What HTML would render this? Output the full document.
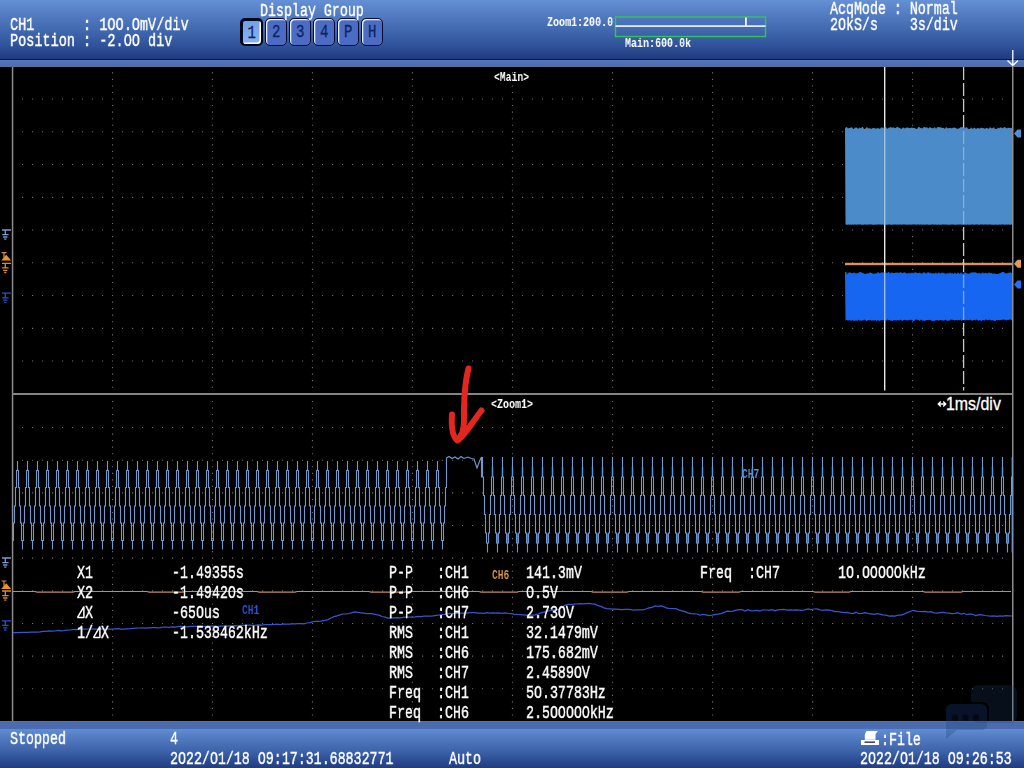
<!DOCTYPE html>
<html><head><meta charset="utf-8"><style>
html,body{margin:0;padding:0;width:1024px;height:768px;overflow:hidden;background:#000;}
.abs{position:absolute;}
#hdr{position:absolute;left:0;top:0;width:1024px;height:59px;background:linear-gradient(#6590d4 0%,#5179c0 28%,#4068ae 52%,#2f529a 78%,#1f3a7c 100%);}
#hline{position:absolute;left:0;top:59px;width:1024px;height:1px;background:#0b1450;}
#hstrip{position:absolute;left:0;top:60px;width:1024px;height:7px;background:linear-gradient(#5577b6 0%,#4a6fb5 65%,#5a6f9c 88%,#606c88 100%);}
#fstrip{position:absolute;left:0;top:721px;width:1024px;height:8px;background:linear-gradient(#6a7490 0px,#4a6bb0 1.2px,#4a6cb0 100%);}
#ftr{position:absolute;left:0;top:729px;width:1024px;height:39px;background:linear-gradient(#628dd2 0%,#5079c0 25%,#3e64aa 55%,#2c4d94 80%,#213c80 100%);}
svg{position:absolute;left:0;top:0;}
.t{position:absolute;white-space:pre;font-family:"Liberation Mono",monospace;transform-origin:0 0;will-change:transform;}
.t.r{-webkit-text-stroke:0.45px currentColor;}
.btn{position:absolute;top:18px;width:22.4px;height:27.5px;box-sizing:border-box;border:1.8px solid #050c30;border-radius:5px;background:#4b6cc2;box-shadow:inset 1.3px 1.3px 0 #e4eeff;}
.btn span{position:absolute;left:0;right:0;top:2px;text-align:center;font-family:"Liberation Mono",monospace;font-size:18px;line-height:22px;color:#0b2468;transform:scaleX(0.78);-webkit-text-stroke:0.3px #0b2468;}
.btn.sel{border:2.2px solid #02061e;border-top-width:3px;border-left-width:3px;background:linear-gradient(#74a0e4,#88b2f2);box-shadow:inset -1.5px -1.5px 0 #ffffff;}
.btn.sel span{top:0.8px;}
#tdiv{position:absolute;left:946px;top:394px;font-family:"Liberation Sans",sans-serif;font-size:17.5px;line-height:20px;color:#fff;white-space:pre;transform:scaleX(0.91);transform-origin:0 0;-webkit-text-stroke:0.3px #fff;}
</style></head><body>
<div id="hdr"></div><div id="hline"></div><div id="hstrip"></div>
<div id="fstrip"></div><div id="ftr"></div>
<svg width="1024" height="768" viewBox="0 0 1024 768">
<path d="M22.0,98.5h1.1v1.1h-1.1zM32.0,98.5h1.1v1.1h-1.1zM42.0,98.5h1.1v1.1h-1.1zM52.0,98.5h1.1v1.1h-1.1zM62.0,98.5h1.1v1.1h-1.1zM72.0,98.5h1.1v1.1h-1.1zM82.0,98.5h1.1v1.1h-1.1zM92.0,98.5h1.1v1.1h-1.1zM102.0,98.5h1.1v1.1h-1.1zM112.0,98.5h1.1v1.1h-1.1zM122.0,98.5h1.1v1.1h-1.1zM132.0,98.5h1.1v1.1h-1.1zM142.0,98.5h1.1v1.1h-1.1zM152.0,98.5h1.1v1.1h-1.1zM162.0,98.5h1.1v1.1h-1.1zM172.0,98.5h1.1v1.1h-1.1zM182.0,98.5h1.1v1.1h-1.1zM192.0,98.5h1.1v1.1h-1.1zM202.0,98.5h1.1v1.1h-1.1zM212.0,98.5h1.1v1.1h-1.1zM222.0,98.5h1.1v1.1h-1.1zM232.0,98.5h1.1v1.1h-1.1zM242.0,98.5h1.1v1.1h-1.1zM252.0,98.5h1.1v1.1h-1.1zM262.0,98.5h1.1v1.1h-1.1zM272.0,98.5h1.1v1.1h-1.1zM282.0,98.5h1.1v1.1h-1.1zM292.0,98.5h1.1v1.1h-1.1zM302.0,98.5h1.1v1.1h-1.1zM312.0,98.5h1.1v1.1h-1.1zM322.0,98.5h1.1v1.1h-1.1zM332.0,98.5h1.1v1.1h-1.1zM342.0,98.5h1.1v1.1h-1.1zM352.0,98.5h1.1v1.1h-1.1zM362.0,98.5h1.1v1.1h-1.1zM372.0,98.5h1.1v1.1h-1.1zM382.0,98.5h1.1v1.1h-1.1zM392.0,98.5h1.1v1.1h-1.1zM402.0,98.5h1.1v1.1h-1.1zM412.0,98.5h1.1v1.1h-1.1zM422.0,98.5h1.1v1.1h-1.1zM432.0,98.5h1.1v1.1h-1.1zM442.0,98.5h1.1v1.1h-1.1zM452.0,98.5h1.1v1.1h-1.1zM462.0,98.5h1.1v1.1h-1.1zM472.0,98.5h1.1v1.1h-1.1zM482.0,98.5h1.1v1.1h-1.1zM492.0,98.5h1.1v1.1h-1.1zM502.0,98.5h1.1v1.1h-1.1zM512.0,98.5h1.1v1.1h-1.1zM522.0,98.5h1.1v1.1h-1.1zM532.0,98.5h1.1v1.1h-1.1zM542.0,98.5h1.1v1.1h-1.1zM552.0,98.5h1.1v1.1h-1.1zM562.0,98.5h1.1v1.1h-1.1zM572.0,98.5h1.1v1.1h-1.1zM582.0,98.5h1.1v1.1h-1.1zM592.0,98.5h1.1v1.1h-1.1zM602.0,98.5h1.1v1.1h-1.1zM612.0,98.5h1.1v1.1h-1.1zM622.0,98.5h1.1v1.1h-1.1zM632.0,98.5h1.1v1.1h-1.1zM642.0,98.5h1.1v1.1h-1.1zM652.0,98.5h1.1v1.1h-1.1zM662.0,98.5h1.1v1.1h-1.1zM672.0,98.5h1.1v1.1h-1.1zM682.0,98.5h1.1v1.1h-1.1zM692.0,98.5h1.1v1.1h-1.1zM702.0,98.5h1.1v1.1h-1.1zM712.0,98.5h1.1v1.1h-1.1zM722.0,98.5h1.1v1.1h-1.1zM732.0,98.5h1.1v1.1h-1.1zM742.0,98.5h1.1v1.1h-1.1zM752.0,98.5h1.1v1.1h-1.1zM762.0,98.5h1.1v1.1h-1.1zM772.0,98.5h1.1v1.1h-1.1zM782.0,98.5h1.1v1.1h-1.1zM792.0,98.5h1.1v1.1h-1.1zM802.0,98.5h1.1v1.1h-1.1zM812.0,98.5h1.1v1.1h-1.1zM822.0,98.5h1.1v1.1h-1.1zM832.0,98.5h1.1v1.1h-1.1zM842.0,98.5h1.1v1.1h-1.1zM852.0,98.5h1.1v1.1h-1.1zM862.0,98.5h1.1v1.1h-1.1zM872.0,98.5h1.1v1.1h-1.1zM882.0,98.5h1.1v1.1h-1.1zM892.0,98.5h1.1v1.1h-1.1zM902.0,98.5h1.1v1.1h-1.1zM912.0,98.5h1.1v1.1h-1.1zM922.0,98.5h1.1v1.1h-1.1zM932.0,98.5h1.1v1.1h-1.1zM942.0,98.5h1.1v1.1h-1.1zM952.0,98.5h1.1v1.1h-1.1zM962.0,98.5h1.1v1.1h-1.1zM972.0,98.5h1.1v1.1h-1.1zM982.0,98.5h1.1v1.1h-1.1zM992.0,98.5h1.1v1.1h-1.1zM1002.0,98.5h1.1v1.1h-1.1zM22.0,131.2h1.1v1.1h-1.1zM32.0,131.2h1.1v1.1h-1.1zM42.0,131.2h1.1v1.1h-1.1zM52.0,131.2h1.1v1.1h-1.1zM62.0,131.2h1.1v1.1h-1.1zM72.0,131.2h1.1v1.1h-1.1zM82.0,131.2h1.1v1.1h-1.1zM92.0,131.2h1.1v1.1h-1.1zM102.0,131.2h1.1v1.1h-1.1zM112.0,131.2h1.1v1.1h-1.1zM122.0,131.2h1.1v1.1h-1.1zM132.0,131.2h1.1v1.1h-1.1zM142.0,131.2h1.1v1.1h-1.1zM152.0,131.2h1.1v1.1h-1.1zM162.0,131.2h1.1v1.1h-1.1zM172.0,131.2h1.1v1.1h-1.1zM182.0,131.2h1.1v1.1h-1.1zM192.0,131.2h1.1v1.1h-1.1zM202.0,131.2h1.1v1.1h-1.1zM212.0,131.2h1.1v1.1h-1.1zM222.0,131.2h1.1v1.1h-1.1zM232.0,131.2h1.1v1.1h-1.1zM242.0,131.2h1.1v1.1h-1.1zM252.0,131.2h1.1v1.1h-1.1zM262.0,131.2h1.1v1.1h-1.1zM272.0,131.2h1.1v1.1h-1.1zM282.0,131.2h1.1v1.1h-1.1zM292.0,131.2h1.1v1.1h-1.1zM302.0,131.2h1.1v1.1h-1.1zM312.0,131.2h1.1v1.1h-1.1zM322.0,131.2h1.1v1.1h-1.1zM332.0,131.2h1.1v1.1h-1.1zM342.0,131.2h1.1v1.1h-1.1zM352.0,131.2h1.1v1.1h-1.1zM362.0,131.2h1.1v1.1h-1.1zM372.0,131.2h1.1v1.1h-1.1zM382.0,131.2h1.1v1.1h-1.1zM392.0,131.2h1.1v1.1h-1.1zM402.0,131.2h1.1v1.1h-1.1zM412.0,131.2h1.1v1.1h-1.1zM422.0,131.2h1.1v1.1h-1.1zM432.0,131.2h1.1v1.1h-1.1zM442.0,131.2h1.1v1.1h-1.1zM452.0,131.2h1.1v1.1h-1.1zM462.0,131.2h1.1v1.1h-1.1zM472.0,131.2h1.1v1.1h-1.1zM482.0,131.2h1.1v1.1h-1.1zM492.0,131.2h1.1v1.1h-1.1zM502.0,131.2h1.1v1.1h-1.1zM512.0,131.2h1.1v1.1h-1.1zM522.0,131.2h1.1v1.1h-1.1zM532.0,131.2h1.1v1.1h-1.1zM542.0,131.2h1.1v1.1h-1.1zM552.0,131.2h1.1v1.1h-1.1zM562.0,131.2h1.1v1.1h-1.1zM572.0,131.2h1.1v1.1h-1.1zM582.0,131.2h1.1v1.1h-1.1zM592.0,131.2h1.1v1.1h-1.1zM602.0,131.2h1.1v1.1h-1.1zM612.0,131.2h1.1v1.1h-1.1zM622.0,131.2h1.1v1.1h-1.1zM632.0,131.2h1.1v1.1h-1.1zM642.0,131.2h1.1v1.1h-1.1zM652.0,131.2h1.1v1.1h-1.1zM662.0,131.2h1.1v1.1h-1.1zM672.0,131.2h1.1v1.1h-1.1zM682.0,131.2h1.1v1.1h-1.1zM692.0,131.2h1.1v1.1h-1.1zM702.0,131.2h1.1v1.1h-1.1zM712.0,131.2h1.1v1.1h-1.1zM722.0,131.2h1.1v1.1h-1.1zM732.0,131.2h1.1v1.1h-1.1zM742.0,131.2h1.1v1.1h-1.1zM752.0,131.2h1.1v1.1h-1.1zM762.0,131.2h1.1v1.1h-1.1zM772.0,131.2h1.1v1.1h-1.1zM782.0,131.2h1.1v1.1h-1.1zM792.0,131.2h1.1v1.1h-1.1zM802.0,131.2h1.1v1.1h-1.1zM812.0,131.2h1.1v1.1h-1.1zM822.0,131.2h1.1v1.1h-1.1zM832.0,131.2h1.1v1.1h-1.1zM842.0,131.2h1.1v1.1h-1.1zM852.0,131.2h1.1v1.1h-1.1zM862.0,131.2h1.1v1.1h-1.1zM872.0,131.2h1.1v1.1h-1.1zM882.0,131.2h1.1v1.1h-1.1zM892.0,131.2h1.1v1.1h-1.1zM902.0,131.2h1.1v1.1h-1.1zM912.0,131.2h1.1v1.1h-1.1zM922.0,131.2h1.1v1.1h-1.1zM932.0,131.2h1.1v1.1h-1.1zM942.0,131.2h1.1v1.1h-1.1zM952.0,131.2h1.1v1.1h-1.1zM962.0,131.2h1.1v1.1h-1.1zM972.0,131.2h1.1v1.1h-1.1zM982.0,131.2h1.1v1.1h-1.1zM992.0,131.2h1.1v1.1h-1.1zM1002.0,131.2h1.1v1.1h-1.1zM22.0,164.0h1.1v1.1h-1.1zM32.0,164.0h1.1v1.1h-1.1zM42.0,164.0h1.1v1.1h-1.1zM52.0,164.0h1.1v1.1h-1.1zM62.0,164.0h1.1v1.1h-1.1zM72.0,164.0h1.1v1.1h-1.1zM82.0,164.0h1.1v1.1h-1.1zM92.0,164.0h1.1v1.1h-1.1zM102.0,164.0h1.1v1.1h-1.1zM112.0,164.0h1.1v1.1h-1.1zM122.0,164.0h1.1v1.1h-1.1zM132.0,164.0h1.1v1.1h-1.1zM142.0,164.0h1.1v1.1h-1.1zM152.0,164.0h1.1v1.1h-1.1zM162.0,164.0h1.1v1.1h-1.1zM172.0,164.0h1.1v1.1h-1.1zM182.0,164.0h1.1v1.1h-1.1zM192.0,164.0h1.1v1.1h-1.1zM202.0,164.0h1.1v1.1h-1.1zM212.0,164.0h1.1v1.1h-1.1zM222.0,164.0h1.1v1.1h-1.1zM232.0,164.0h1.1v1.1h-1.1zM242.0,164.0h1.1v1.1h-1.1zM252.0,164.0h1.1v1.1h-1.1zM262.0,164.0h1.1v1.1h-1.1zM272.0,164.0h1.1v1.1h-1.1zM282.0,164.0h1.1v1.1h-1.1zM292.0,164.0h1.1v1.1h-1.1zM302.0,164.0h1.1v1.1h-1.1zM312.0,164.0h1.1v1.1h-1.1zM322.0,164.0h1.1v1.1h-1.1zM332.0,164.0h1.1v1.1h-1.1zM342.0,164.0h1.1v1.1h-1.1zM352.0,164.0h1.1v1.1h-1.1zM362.0,164.0h1.1v1.1h-1.1zM372.0,164.0h1.1v1.1h-1.1zM382.0,164.0h1.1v1.1h-1.1zM392.0,164.0h1.1v1.1h-1.1zM402.0,164.0h1.1v1.1h-1.1zM412.0,164.0h1.1v1.1h-1.1zM422.0,164.0h1.1v1.1h-1.1zM432.0,164.0h1.1v1.1h-1.1zM442.0,164.0h1.1v1.1h-1.1zM452.0,164.0h1.1v1.1h-1.1zM462.0,164.0h1.1v1.1h-1.1zM472.0,164.0h1.1v1.1h-1.1zM482.0,164.0h1.1v1.1h-1.1zM492.0,164.0h1.1v1.1h-1.1zM502.0,164.0h1.1v1.1h-1.1zM512.0,164.0h1.1v1.1h-1.1zM522.0,164.0h1.1v1.1h-1.1zM532.0,164.0h1.1v1.1h-1.1zM542.0,164.0h1.1v1.1h-1.1zM552.0,164.0h1.1v1.1h-1.1zM562.0,164.0h1.1v1.1h-1.1zM572.0,164.0h1.1v1.1h-1.1zM582.0,164.0h1.1v1.1h-1.1zM592.0,164.0h1.1v1.1h-1.1zM602.0,164.0h1.1v1.1h-1.1zM612.0,164.0h1.1v1.1h-1.1zM622.0,164.0h1.1v1.1h-1.1zM632.0,164.0h1.1v1.1h-1.1zM642.0,164.0h1.1v1.1h-1.1zM652.0,164.0h1.1v1.1h-1.1zM662.0,164.0h1.1v1.1h-1.1zM672.0,164.0h1.1v1.1h-1.1zM682.0,164.0h1.1v1.1h-1.1zM692.0,164.0h1.1v1.1h-1.1zM702.0,164.0h1.1v1.1h-1.1zM712.0,164.0h1.1v1.1h-1.1zM722.0,164.0h1.1v1.1h-1.1zM732.0,164.0h1.1v1.1h-1.1zM742.0,164.0h1.1v1.1h-1.1zM752.0,164.0h1.1v1.1h-1.1zM762.0,164.0h1.1v1.1h-1.1zM772.0,164.0h1.1v1.1h-1.1zM782.0,164.0h1.1v1.1h-1.1zM792.0,164.0h1.1v1.1h-1.1zM802.0,164.0h1.1v1.1h-1.1zM812.0,164.0h1.1v1.1h-1.1zM822.0,164.0h1.1v1.1h-1.1zM832.0,164.0h1.1v1.1h-1.1zM842.0,164.0h1.1v1.1h-1.1zM852.0,164.0h1.1v1.1h-1.1zM862.0,164.0h1.1v1.1h-1.1zM872.0,164.0h1.1v1.1h-1.1zM882.0,164.0h1.1v1.1h-1.1zM892.0,164.0h1.1v1.1h-1.1zM902.0,164.0h1.1v1.1h-1.1zM912.0,164.0h1.1v1.1h-1.1zM922.0,164.0h1.1v1.1h-1.1zM932.0,164.0h1.1v1.1h-1.1zM942.0,164.0h1.1v1.1h-1.1zM952.0,164.0h1.1v1.1h-1.1zM962.0,164.0h1.1v1.1h-1.1zM972.0,164.0h1.1v1.1h-1.1zM982.0,164.0h1.1v1.1h-1.1zM992.0,164.0h1.1v1.1h-1.1zM1002.0,164.0h1.1v1.1h-1.1zM22.0,196.8h1.1v1.1h-1.1zM32.0,196.8h1.1v1.1h-1.1zM42.0,196.8h1.1v1.1h-1.1zM52.0,196.8h1.1v1.1h-1.1zM62.0,196.8h1.1v1.1h-1.1zM72.0,196.8h1.1v1.1h-1.1zM82.0,196.8h1.1v1.1h-1.1zM92.0,196.8h1.1v1.1h-1.1zM102.0,196.8h1.1v1.1h-1.1zM112.0,196.8h1.1v1.1h-1.1zM122.0,196.8h1.1v1.1h-1.1zM132.0,196.8h1.1v1.1h-1.1zM142.0,196.8h1.1v1.1h-1.1zM152.0,196.8h1.1v1.1h-1.1zM162.0,196.8h1.1v1.1h-1.1zM172.0,196.8h1.1v1.1h-1.1zM182.0,196.8h1.1v1.1h-1.1zM192.0,196.8h1.1v1.1h-1.1zM202.0,196.8h1.1v1.1h-1.1zM212.0,196.8h1.1v1.1h-1.1zM222.0,196.8h1.1v1.1h-1.1zM232.0,196.8h1.1v1.1h-1.1zM242.0,196.8h1.1v1.1h-1.1zM252.0,196.8h1.1v1.1h-1.1zM262.0,196.8h1.1v1.1h-1.1zM272.0,196.8h1.1v1.1h-1.1zM282.0,196.8h1.1v1.1h-1.1zM292.0,196.8h1.1v1.1h-1.1zM302.0,196.8h1.1v1.1h-1.1zM312.0,196.8h1.1v1.1h-1.1zM322.0,196.8h1.1v1.1h-1.1zM332.0,196.8h1.1v1.1h-1.1zM342.0,196.8h1.1v1.1h-1.1zM352.0,196.8h1.1v1.1h-1.1zM362.0,196.8h1.1v1.1h-1.1zM372.0,196.8h1.1v1.1h-1.1zM382.0,196.8h1.1v1.1h-1.1zM392.0,196.8h1.1v1.1h-1.1zM402.0,196.8h1.1v1.1h-1.1zM412.0,196.8h1.1v1.1h-1.1zM422.0,196.8h1.1v1.1h-1.1zM432.0,196.8h1.1v1.1h-1.1zM442.0,196.8h1.1v1.1h-1.1zM452.0,196.8h1.1v1.1h-1.1zM462.0,196.8h1.1v1.1h-1.1zM472.0,196.8h1.1v1.1h-1.1zM482.0,196.8h1.1v1.1h-1.1zM492.0,196.8h1.1v1.1h-1.1zM502.0,196.8h1.1v1.1h-1.1zM512.0,196.8h1.1v1.1h-1.1zM522.0,196.8h1.1v1.1h-1.1zM532.0,196.8h1.1v1.1h-1.1zM542.0,196.8h1.1v1.1h-1.1zM552.0,196.8h1.1v1.1h-1.1zM562.0,196.8h1.1v1.1h-1.1zM572.0,196.8h1.1v1.1h-1.1zM582.0,196.8h1.1v1.1h-1.1zM592.0,196.8h1.1v1.1h-1.1zM602.0,196.8h1.1v1.1h-1.1zM612.0,196.8h1.1v1.1h-1.1zM622.0,196.8h1.1v1.1h-1.1zM632.0,196.8h1.1v1.1h-1.1zM642.0,196.8h1.1v1.1h-1.1zM652.0,196.8h1.1v1.1h-1.1zM662.0,196.8h1.1v1.1h-1.1zM672.0,196.8h1.1v1.1h-1.1zM682.0,196.8h1.1v1.1h-1.1zM692.0,196.8h1.1v1.1h-1.1zM702.0,196.8h1.1v1.1h-1.1zM712.0,196.8h1.1v1.1h-1.1zM722.0,196.8h1.1v1.1h-1.1zM732.0,196.8h1.1v1.1h-1.1zM742.0,196.8h1.1v1.1h-1.1zM752.0,196.8h1.1v1.1h-1.1zM762.0,196.8h1.1v1.1h-1.1zM772.0,196.8h1.1v1.1h-1.1zM782.0,196.8h1.1v1.1h-1.1zM792.0,196.8h1.1v1.1h-1.1zM802.0,196.8h1.1v1.1h-1.1zM812.0,196.8h1.1v1.1h-1.1zM822.0,196.8h1.1v1.1h-1.1zM832.0,196.8h1.1v1.1h-1.1zM842.0,196.8h1.1v1.1h-1.1zM852.0,196.8h1.1v1.1h-1.1zM862.0,196.8h1.1v1.1h-1.1zM872.0,196.8h1.1v1.1h-1.1zM882.0,196.8h1.1v1.1h-1.1zM892.0,196.8h1.1v1.1h-1.1zM902.0,196.8h1.1v1.1h-1.1zM912.0,196.8h1.1v1.1h-1.1zM922.0,196.8h1.1v1.1h-1.1zM932.0,196.8h1.1v1.1h-1.1zM942.0,196.8h1.1v1.1h-1.1zM952.0,196.8h1.1v1.1h-1.1zM962.0,196.8h1.1v1.1h-1.1zM972.0,196.8h1.1v1.1h-1.1zM982.0,196.8h1.1v1.1h-1.1zM992.0,196.8h1.1v1.1h-1.1zM1002.0,196.8h1.1v1.1h-1.1zM22.0,229.5h1.1v1.1h-1.1zM32.0,229.5h1.1v1.1h-1.1zM42.0,229.5h1.1v1.1h-1.1zM52.0,229.5h1.1v1.1h-1.1zM62.0,229.5h1.1v1.1h-1.1zM72.0,229.5h1.1v1.1h-1.1zM82.0,229.5h1.1v1.1h-1.1zM92.0,229.5h1.1v1.1h-1.1zM102.0,229.5h1.1v1.1h-1.1zM112.0,229.5h1.1v1.1h-1.1zM122.0,229.5h1.1v1.1h-1.1zM132.0,229.5h1.1v1.1h-1.1zM142.0,229.5h1.1v1.1h-1.1zM152.0,229.5h1.1v1.1h-1.1zM162.0,229.5h1.1v1.1h-1.1zM172.0,229.5h1.1v1.1h-1.1zM182.0,229.5h1.1v1.1h-1.1zM192.0,229.5h1.1v1.1h-1.1zM202.0,229.5h1.1v1.1h-1.1zM212.0,229.5h1.1v1.1h-1.1zM222.0,229.5h1.1v1.1h-1.1zM232.0,229.5h1.1v1.1h-1.1zM242.0,229.5h1.1v1.1h-1.1zM252.0,229.5h1.1v1.1h-1.1zM262.0,229.5h1.1v1.1h-1.1zM272.0,229.5h1.1v1.1h-1.1zM282.0,229.5h1.1v1.1h-1.1zM292.0,229.5h1.1v1.1h-1.1zM302.0,229.5h1.1v1.1h-1.1zM312.0,229.5h1.1v1.1h-1.1zM322.0,229.5h1.1v1.1h-1.1zM332.0,229.5h1.1v1.1h-1.1zM342.0,229.5h1.1v1.1h-1.1zM352.0,229.5h1.1v1.1h-1.1zM362.0,229.5h1.1v1.1h-1.1zM372.0,229.5h1.1v1.1h-1.1zM382.0,229.5h1.1v1.1h-1.1zM392.0,229.5h1.1v1.1h-1.1zM402.0,229.5h1.1v1.1h-1.1zM412.0,229.5h1.1v1.1h-1.1zM422.0,229.5h1.1v1.1h-1.1zM432.0,229.5h1.1v1.1h-1.1zM442.0,229.5h1.1v1.1h-1.1zM452.0,229.5h1.1v1.1h-1.1zM462.0,229.5h1.1v1.1h-1.1zM472.0,229.5h1.1v1.1h-1.1zM482.0,229.5h1.1v1.1h-1.1zM492.0,229.5h1.1v1.1h-1.1zM502.0,229.5h1.1v1.1h-1.1zM512.0,229.5h1.1v1.1h-1.1zM522.0,229.5h1.1v1.1h-1.1zM532.0,229.5h1.1v1.1h-1.1zM542.0,229.5h1.1v1.1h-1.1zM552.0,229.5h1.1v1.1h-1.1zM562.0,229.5h1.1v1.1h-1.1zM572.0,229.5h1.1v1.1h-1.1zM582.0,229.5h1.1v1.1h-1.1zM592.0,229.5h1.1v1.1h-1.1zM602.0,229.5h1.1v1.1h-1.1zM612.0,229.5h1.1v1.1h-1.1zM622.0,229.5h1.1v1.1h-1.1zM632.0,229.5h1.1v1.1h-1.1zM642.0,229.5h1.1v1.1h-1.1zM652.0,229.5h1.1v1.1h-1.1zM662.0,229.5h1.1v1.1h-1.1zM672.0,229.5h1.1v1.1h-1.1zM682.0,229.5h1.1v1.1h-1.1zM692.0,229.5h1.1v1.1h-1.1zM702.0,229.5h1.1v1.1h-1.1zM712.0,229.5h1.1v1.1h-1.1zM722.0,229.5h1.1v1.1h-1.1zM732.0,229.5h1.1v1.1h-1.1zM742.0,229.5h1.1v1.1h-1.1zM752.0,229.5h1.1v1.1h-1.1zM762.0,229.5h1.1v1.1h-1.1zM772.0,229.5h1.1v1.1h-1.1zM782.0,229.5h1.1v1.1h-1.1zM792.0,229.5h1.1v1.1h-1.1zM802.0,229.5h1.1v1.1h-1.1zM812.0,229.5h1.1v1.1h-1.1zM822.0,229.5h1.1v1.1h-1.1zM832.0,229.5h1.1v1.1h-1.1zM842.0,229.5h1.1v1.1h-1.1zM852.0,229.5h1.1v1.1h-1.1zM862.0,229.5h1.1v1.1h-1.1zM872.0,229.5h1.1v1.1h-1.1zM882.0,229.5h1.1v1.1h-1.1zM892.0,229.5h1.1v1.1h-1.1zM902.0,229.5h1.1v1.1h-1.1zM912.0,229.5h1.1v1.1h-1.1zM922.0,229.5h1.1v1.1h-1.1zM932.0,229.5h1.1v1.1h-1.1zM942.0,229.5h1.1v1.1h-1.1zM952.0,229.5h1.1v1.1h-1.1zM962.0,229.5h1.1v1.1h-1.1zM972.0,229.5h1.1v1.1h-1.1zM982.0,229.5h1.1v1.1h-1.1zM992.0,229.5h1.1v1.1h-1.1zM1002.0,229.5h1.1v1.1h-1.1zM22.0,262.2h1.1v1.1h-1.1zM32.0,262.2h1.1v1.1h-1.1zM42.0,262.2h1.1v1.1h-1.1zM52.0,262.2h1.1v1.1h-1.1zM62.0,262.2h1.1v1.1h-1.1zM72.0,262.2h1.1v1.1h-1.1zM82.0,262.2h1.1v1.1h-1.1zM92.0,262.2h1.1v1.1h-1.1zM102.0,262.2h1.1v1.1h-1.1zM112.0,262.2h1.1v1.1h-1.1zM122.0,262.2h1.1v1.1h-1.1zM132.0,262.2h1.1v1.1h-1.1zM142.0,262.2h1.1v1.1h-1.1zM152.0,262.2h1.1v1.1h-1.1zM162.0,262.2h1.1v1.1h-1.1zM172.0,262.2h1.1v1.1h-1.1zM182.0,262.2h1.1v1.1h-1.1zM192.0,262.2h1.1v1.1h-1.1zM202.0,262.2h1.1v1.1h-1.1zM212.0,262.2h1.1v1.1h-1.1zM222.0,262.2h1.1v1.1h-1.1zM232.0,262.2h1.1v1.1h-1.1zM242.0,262.2h1.1v1.1h-1.1zM252.0,262.2h1.1v1.1h-1.1zM262.0,262.2h1.1v1.1h-1.1zM272.0,262.2h1.1v1.1h-1.1zM282.0,262.2h1.1v1.1h-1.1zM292.0,262.2h1.1v1.1h-1.1zM302.0,262.2h1.1v1.1h-1.1zM312.0,262.2h1.1v1.1h-1.1zM322.0,262.2h1.1v1.1h-1.1zM332.0,262.2h1.1v1.1h-1.1zM342.0,262.2h1.1v1.1h-1.1zM352.0,262.2h1.1v1.1h-1.1zM362.0,262.2h1.1v1.1h-1.1zM372.0,262.2h1.1v1.1h-1.1zM382.0,262.2h1.1v1.1h-1.1zM392.0,262.2h1.1v1.1h-1.1zM402.0,262.2h1.1v1.1h-1.1zM412.0,262.2h1.1v1.1h-1.1zM422.0,262.2h1.1v1.1h-1.1zM432.0,262.2h1.1v1.1h-1.1zM442.0,262.2h1.1v1.1h-1.1zM452.0,262.2h1.1v1.1h-1.1zM462.0,262.2h1.1v1.1h-1.1zM472.0,262.2h1.1v1.1h-1.1zM482.0,262.2h1.1v1.1h-1.1zM492.0,262.2h1.1v1.1h-1.1zM502.0,262.2h1.1v1.1h-1.1zM512.0,262.2h1.1v1.1h-1.1zM522.0,262.2h1.1v1.1h-1.1zM532.0,262.2h1.1v1.1h-1.1zM542.0,262.2h1.1v1.1h-1.1zM552.0,262.2h1.1v1.1h-1.1zM562.0,262.2h1.1v1.1h-1.1zM572.0,262.2h1.1v1.1h-1.1zM582.0,262.2h1.1v1.1h-1.1zM592.0,262.2h1.1v1.1h-1.1zM602.0,262.2h1.1v1.1h-1.1zM612.0,262.2h1.1v1.1h-1.1zM622.0,262.2h1.1v1.1h-1.1zM632.0,262.2h1.1v1.1h-1.1zM642.0,262.2h1.1v1.1h-1.1zM652.0,262.2h1.1v1.1h-1.1zM662.0,262.2h1.1v1.1h-1.1zM672.0,262.2h1.1v1.1h-1.1zM682.0,262.2h1.1v1.1h-1.1zM692.0,262.2h1.1v1.1h-1.1zM702.0,262.2h1.1v1.1h-1.1zM712.0,262.2h1.1v1.1h-1.1zM722.0,262.2h1.1v1.1h-1.1zM732.0,262.2h1.1v1.1h-1.1zM742.0,262.2h1.1v1.1h-1.1zM752.0,262.2h1.1v1.1h-1.1zM762.0,262.2h1.1v1.1h-1.1zM772.0,262.2h1.1v1.1h-1.1zM782.0,262.2h1.1v1.1h-1.1zM792.0,262.2h1.1v1.1h-1.1zM802.0,262.2h1.1v1.1h-1.1zM812.0,262.2h1.1v1.1h-1.1zM822.0,262.2h1.1v1.1h-1.1zM832.0,262.2h1.1v1.1h-1.1zM842.0,262.2h1.1v1.1h-1.1zM852.0,262.2h1.1v1.1h-1.1zM862.0,262.2h1.1v1.1h-1.1zM872.0,262.2h1.1v1.1h-1.1zM882.0,262.2h1.1v1.1h-1.1zM892.0,262.2h1.1v1.1h-1.1zM902.0,262.2h1.1v1.1h-1.1zM912.0,262.2h1.1v1.1h-1.1zM922.0,262.2h1.1v1.1h-1.1zM932.0,262.2h1.1v1.1h-1.1zM942.0,262.2h1.1v1.1h-1.1zM952.0,262.2h1.1v1.1h-1.1zM962.0,262.2h1.1v1.1h-1.1zM972.0,262.2h1.1v1.1h-1.1zM982.0,262.2h1.1v1.1h-1.1zM992.0,262.2h1.1v1.1h-1.1zM1002.0,262.2h1.1v1.1h-1.1zM22.0,295.0h1.1v1.1h-1.1zM32.0,295.0h1.1v1.1h-1.1zM42.0,295.0h1.1v1.1h-1.1zM52.0,295.0h1.1v1.1h-1.1zM62.0,295.0h1.1v1.1h-1.1zM72.0,295.0h1.1v1.1h-1.1zM82.0,295.0h1.1v1.1h-1.1zM92.0,295.0h1.1v1.1h-1.1zM102.0,295.0h1.1v1.1h-1.1zM112.0,295.0h1.1v1.1h-1.1zM122.0,295.0h1.1v1.1h-1.1zM132.0,295.0h1.1v1.1h-1.1zM142.0,295.0h1.1v1.1h-1.1zM152.0,295.0h1.1v1.1h-1.1zM162.0,295.0h1.1v1.1h-1.1zM172.0,295.0h1.1v1.1h-1.1zM182.0,295.0h1.1v1.1h-1.1zM192.0,295.0h1.1v1.1h-1.1zM202.0,295.0h1.1v1.1h-1.1zM212.0,295.0h1.1v1.1h-1.1zM222.0,295.0h1.1v1.1h-1.1zM232.0,295.0h1.1v1.1h-1.1zM242.0,295.0h1.1v1.1h-1.1zM252.0,295.0h1.1v1.1h-1.1zM262.0,295.0h1.1v1.1h-1.1zM272.0,295.0h1.1v1.1h-1.1zM282.0,295.0h1.1v1.1h-1.1zM292.0,295.0h1.1v1.1h-1.1zM302.0,295.0h1.1v1.1h-1.1zM312.0,295.0h1.1v1.1h-1.1zM322.0,295.0h1.1v1.1h-1.1zM332.0,295.0h1.1v1.1h-1.1zM342.0,295.0h1.1v1.1h-1.1zM352.0,295.0h1.1v1.1h-1.1zM362.0,295.0h1.1v1.1h-1.1zM372.0,295.0h1.1v1.1h-1.1zM382.0,295.0h1.1v1.1h-1.1zM392.0,295.0h1.1v1.1h-1.1zM402.0,295.0h1.1v1.1h-1.1zM412.0,295.0h1.1v1.1h-1.1zM422.0,295.0h1.1v1.1h-1.1zM432.0,295.0h1.1v1.1h-1.1zM442.0,295.0h1.1v1.1h-1.1zM452.0,295.0h1.1v1.1h-1.1zM462.0,295.0h1.1v1.1h-1.1zM472.0,295.0h1.1v1.1h-1.1zM482.0,295.0h1.1v1.1h-1.1zM492.0,295.0h1.1v1.1h-1.1zM502.0,295.0h1.1v1.1h-1.1zM512.0,295.0h1.1v1.1h-1.1zM522.0,295.0h1.1v1.1h-1.1zM532.0,295.0h1.1v1.1h-1.1zM542.0,295.0h1.1v1.1h-1.1zM552.0,295.0h1.1v1.1h-1.1zM562.0,295.0h1.1v1.1h-1.1zM572.0,295.0h1.1v1.1h-1.1zM582.0,295.0h1.1v1.1h-1.1zM592.0,295.0h1.1v1.1h-1.1zM602.0,295.0h1.1v1.1h-1.1zM612.0,295.0h1.1v1.1h-1.1zM622.0,295.0h1.1v1.1h-1.1zM632.0,295.0h1.1v1.1h-1.1zM642.0,295.0h1.1v1.1h-1.1zM652.0,295.0h1.1v1.1h-1.1zM662.0,295.0h1.1v1.1h-1.1zM672.0,295.0h1.1v1.1h-1.1zM682.0,295.0h1.1v1.1h-1.1zM692.0,295.0h1.1v1.1h-1.1zM702.0,295.0h1.1v1.1h-1.1zM712.0,295.0h1.1v1.1h-1.1zM722.0,295.0h1.1v1.1h-1.1zM732.0,295.0h1.1v1.1h-1.1zM742.0,295.0h1.1v1.1h-1.1zM752.0,295.0h1.1v1.1h-1.1zM762.0,295.0h1.1v1.1h-1.1zM772.0,295.0h1.1v1.1h-1.1zM782.0,295.0h1.1v1.1h-1.1zM792.0,295.0h1.1v1.1h-1.1zM802.0,295.0h1.1v1.1h-1.1zM812.0,295.0h1.1v1.1h-1.1zM822.0,295.0h1.1v1.1h-1.1zM832.0,295.0h1.1v1.1h-1.1zM842.0,295.0h1.1v1.1h-1.1zM852.0,295.0h1.1v1.1h-1.1zM862.0,295.0h1.1v1.1h-1.1zM872.0,295.0h1.1v1.1h-1.1zM882.0,295.0h1.1v1.1h-1.1zM892.0,295.0h1.1v1.1h-1.1zM902.0,295.0h1.1v1.1h-1.1zM912.0,295.0h1.1v1.1h-1.1zM922.0,295.0h1.1v1.1h-1.1zM932.0,295.0h1.1v1.1h-1.1zM942.0,295.0h1.1v1.1h-1.1zM952.0,295.0h1.1v1.1h-1.1zM962.0,295.0h1.1v1.1h-1.1zM972.0,295.0h1.1v1.1h-1.1zM982.0,295.0h1.1v1.1h-1.1zM992.0,295.0h1.1v1.1h-1.1zM1002.0,295.0h1.1v1.1h-1.1zM22.0,327.8h1.1v1.1h-1.1zM32.0,327.8h1.1v1.1h-1.1zM42.0,327.8h1.1v1.1h-1.1zM52.0,327.8h1.1v1.1h-1.1zM62.0,327.8h1.1v1.1h-1.1zM72.0,327.8h1.1v1.1h-1.1zM82.0,327.8h1.1v1.1h-1.1zM92.0,327.8h1.1v1.1h-1.1zM102.0,327.8h1.1v1.1h-1.1zM112.0,327.8h1.1v1.1h-1.1zM122.0,327.8h1.1v1.1h-1.1zM132.0,327.8h1.1v1.1h-1.1zM142.0,327.8h1.1v1.1h-1.1zM152.0,327.8h1.1v1.1h-1.1zM162.0,327.8h1.1v1.1h-1.1zM172.0,327.8h1.1v1.1h-1.1zM182.0,327.8h1.1v1.1h-1.1zM192.0,327.8h1.1v1.1h-1.1zM202.0,327.8h1.1v1.1h-1.1zM212.0,327.8h1.1v1.1h-1.1zM222.0,327.8h1.1v1.1h-1.1zM232.0,327.8h1.1v1.1h-1.1zM242.0,327.8h1.1v1.1h-1.1zM252.0,327.8h1.1v1.1h-1.1zM262.0,327.8h1.1v1.1h-1.1zM272.0,327.8h1.1v1.1h-1.1zM282.0,327.8h1.1v1.1h-1.1zM292.0,327.8h1.1v1.1h-1.1zM302.0,327.8h1.1v1.1h-1.1zM312.0,327.8h1.1v1.1h-1.1zM322.0,327.8h1.1v1.1h-1.1zM332.0,327.8h1.1v1.1h-1.1zM342.0,327.8h1.1v1.1h-1.1zM352.0,327.8h1.1v1.1h-1.1zM362.0,327.8h1.1v1.1h-1.1zM372.0,327.8h1.1v1.1h-1.1zM382.0,327.8h1.1v1.1h-1.1zM392.0,327.8h1.1v1.1h-1.1zM402.0,327.8h1.1v1.1h-1.1zM412.0,327.8h1.1v1.1h-1.1zM422.0,327.8h1.1v1.1h-1.1zM432.0,327.8h1.1v1.1h-1.1zM442.0,327.8h1.1v1.1h-1.1zM452.0,327.8h1.1v1.1h-1.1zM462.0,327.8h1.1v1.1h-1.1zM472.0,327.8h1.1v1.1h-1.1zM482.0,327.8h1.1v1.1h-1.1zM492.0,327.8h1.1v1.1h-1.1zM502.0,327.8h1.1v1.1h-1.1zM512.0,327.8h1.1v1.1h-1.1zM522.0,327.8h1.1v1.1h-1.1zM532.0,327.8h1.1v1.1h-1.1zM542.0,327.8h1.1v1.1h-1.1zM552.0,327.8h1.1v1.1h-1.1zM562.0,327.8h1.1v1.1h-1.1zM572.0,327.8h1.1v1.1h-1.1zM582.0,327.8h1.1v1.1h-1.1zM592.0,327.8h1.1v1.1h-1.1zM602.0,327.8h1.1v1.1h-1.1zM612.0,327.8h1.1v1.1h-1.1zM622.0,327.8h1.1v1.1h-1.1zM632.0,327.8h1.1v1.1h-1.1zM642.0,327.8h1.1v1.1h-1.1zM652.0,327.8h1.1v1.1h-1.1zM662.0,327.8h1.1v1.1h-1.1zM672.0,327.8h1.1v1.1h-1.1zM682.0,327.8h1.1v1.1h-1.1zM692.0,327.8h1.1v1.1h-1.1zM702.0,327.8h1.1v1.1h-1.1zM712.0,327.8h1.1v1.1h-1.1zM722.0,327.8h1.1v1.1h-1.1zM732.0,327.8h1.1v1.1h-1.1zM742.0,327.8h1.1v1.1h-1.1zM752.0,327.8h1.1v1.1h-1.1zM762.0,327.8h1.1v1.1h-1.1zM772.0,327.8h1.1v1.1h-1.1zM782.0,327.8h1.1v1.1h-1.1zM792.0,327.8h1.1v1.1h-1.1zM802.0,327.8h1.1v1.1h-1.1zM812.0,327.8h1.1v1.1h-1.1zM822.0,327.8h1.1v1.1h-1.1zM832.0,327.8h1.1v1.1h-1.1zM842.0,327.8h1.1v1.1h-1.1zM852.0,327.8h1.1v1.1h-1.1zM862.0,327.8h1.1v1.1h-1.1zM872.0,327.8h1.1v1.1h-1.1zM882.0,327.8h1.1v1.1h-1.1zM892.0,327.8h1.1v1.1h-1.1zM902.0,327.8h1.1v1.1h-1.1zM912.0,327.8h1.1v1.1h-1.1zM922.0,327.8h1.1v1.1h-1.1zM932.0,327.8h1.1v1.1h-1.1zM942.0,327.8h1.1v1.1h-1.1zM952.0,327.8h1.1v1.1h-1.1zM962.0,327.8h1.1v1.1h-1.1zM972.0,327.8h1.1v1.1h-1.1zM982.0,327.8h1.1v1.1h-1.1zM992.0,327.8h1.1v1.1h-1.1zM1002.0,327.8h1.1v1.1h-1.1zM22.0,360.5h1.1v1.1h-1.1zM32.0,360.5h1.1v1.1h-1.1zM42.0,360.5h1.1v1.1h-1.1zM52.0,360.5h1.1v1.1h-1.1zM62.0,360.5h1.1v1.1h-1.1zM72.0,360.5h1.1v1.1h-1.1zM82.0,360.5h1.1v1.1h-1.1zM92.0,360.5h1.1v1.1h-1.1zM102.0,360.5h1.1v1.1h-1.1zM112.0,360.5h1.1v1.1h-1.1zM122.0,360.5h1.1v1.1h-1.1zM132.0,360.5h1.1v1.1h-1.1zM142.0,360.5h1.1v1.1h-1.1zM152.0,360.5h1.1v1.1h-1.1zM162.0,360.5h1.1v1.1h-1.1zM172.0,360.5h1.1v1.1h-1.1zM182.0,360.5h1.1v1.1h-1.1zM192.0,360.5h1.1v1.1h-1.1zM202.0,360.5h1.1v1.1h-1.1zM212.0,360.5h1.1v1.1h-1.1zM222.0,360.5h1.1v1.1h-1.1zM232.0,360.5h1.1v1.1h-1.1zM242.0,360.5h1.1v1.1h-1.1zM252.0,360.5h1.1v1.1h-1.1zM262.0,360.5h1.1v1.1h-1.1zM272.0,360.5h1.1v1.1h-1.1zM282.0,360.5h1.1v1.1h-1.1zM292.0,360.5h1.1v1.1h-1.1zM302.0,360.5h1.1v1.1h-1.1zM312.0,360.5h1.1v1.1h-1.1zM322.0,360.5h1.1v1.1h-1.1zM332.0,360.5h1.1v1.1h-1.1zM342.0,360.5h1.1v1.1h-1.1zM352.0,360.5h1.1v1.1h-1.1zM362.0,360.5h1.1v1.1h-1.1zM372.0,360.5h1.1v1.1h-1.1zM382.0,360.5h1.1v1.1h-1.1zM392.0,360.5h1.1v1.1h-1.1zM402.0,360.5h1.1v1.1h-1.1zM412.0,360.5h1.1v1.1h-1.1zM422.0,360.5h1.1v1.1h-1.1zM432.0,360.5h1.1v1.1h-1.1zM442.0,360.5h1.1v1.1h-1.1zM452.0,360.5h1.1v1.1h-1.1zM462.0,360.5h1.1v1.1h-1.1zM472.0,360.5h1.1v1.1h-1.1zM482.0,360.5h1.1v1.1h-1.1zM492.0,360.5h1.1v1.1h-1.1zM502.0,360.5h1.1v1.1h-1.1zM512.0,360.5h1.1v1.1h-1.1zM522.0,360.5h1.1v1.1h-1.1zM532.0,360.5h1.1v1.1h-1.1zM542.0,360.5h1.1v1.1h-1.1zM552.0,360.5h1.1v1.1h-1.1zM562.0,360.5h1.1v1.1h-1.1zM572.0,360.5h1.1v1.1h-1.1zM582.0,360.5h1.1v1.1h-1.1zM592.0,360.5h1.1v1.1h-1.1zM602.0,360.5h1.1v1.1h-1.1zM612.0,360.5h1.1v1.1h-1.1zM622.0,360.5h1.1v1.1h-1.1zM632.0,360.5h1.1v1.1h-1.1zM642.0,360.5h1.1v1.1h-1.1zM652.0,360.5h1.1v1.1h-1.1zM662.0,360.5h1.1v1.1h-1.1zM672.0,360.5h1.1v1.1h-1.1zM682.0,360.5h1.1v1.1h-1.1zM692.0,360.5h1.1v1.1h-1.1zM702.0,360.5h1.1v1.1h-1.1zM712.0,360.5h1.1v1.1h-1.1zM722.0,360.5h1.1v1.1h-1.1zM732.0,360.5h1.1v1.1h-1.1zM742.0,360.5h1.1v1.1h-1.1zM752.0,360.5h1.1v1.1h-1.1zM762.0,360.5h1.1v1.1h-1.1zM772.0,360.5h1.1v1.1h-1.1zM782.0,360.5h1.1v1.1h-1.1zM792.0,360.5h1.1v1.1h-1.1zM802.0,360.5h1.1v1.1h-1.1zM812.0,360.5h1.1v1.1h-1.1zM822.0,360.5h1.1v1.1h-1.1zM832.0,360.5h1.1v1.1h-1.1zM842.0,360.5h1.1v1.1h-1.1zM852.0,360.5h1.1v1.1h-1.1zM862.0,360.5h1.1v1.1h-1.1zM872.0,360.5h1.1v1.1h-1.1zM882.0,360.5h1.1v1.1h-1.1zM892.0,360.5h1.1v1.1h-1.1zM902.0,360.5h1.1v1.1h-1.1zM912.0,360.5h1.1v1.1h-1.1zM922.0,360.5h1.1v1.1h-1.1zM932.0,360.5h1.1v1.1h-1.1zM942.0,360.5h1.1v1.1h-1.1zM952.0,360.5h1.1v1.1h-1.1zM962.0,360.5h1.1v1.1h-1.1zM972.0,360.5h1.1v1.1h-1.1zM982.0,360.5h1.1v1.1h-1.1zM992.0,360.5h1.1v1.1h-1.1zM1002.0,360.5h1.1v1.1h-1.1zM112.0,72.3h1.1v1.1h-1.1zM112.0,78.8h1.1v1.1h-1.1zM112.0,85.4h1.1v1.1h-1.1zM112.0,92.0h1.1v1.1h-1.1zM112.0,105.0h1.1v1.1h-1.1zM112.0,111.6h1.1v1.1h-1.1zM112.0,118.2h1.1v1.1h-1.1zM112.0,124.7h1.1v1.1h-1.1zM112.0,137.8h1.1v1.1h-1.1zM112.0,144.3h1.1v1.1h-1.1zM112.0,150.9h1.1v1.1h-1.1zM112.0,157.4h1.1v1.1h-1.1zM112.0,170.6h1.1v1.1h-1.1zM112.0,177.1h1.1v1.1h-1.1zM112.0,183.7h1.1v1.1h-1.1zM112.0,190.2h1.1v1.1h-1.1zM112.0,203.3h1.1v1.1h-1.1zM112.0,209.8h1.1v1.1h-1.1zM112.0,216.4h1.1v1.1h-1.1zM112.0,222.9h1.1v1.1h-1.1zM112.0,236.1h1.1v1.1h-1.1zM112.0,242.6h1.1v1.1h-1.1zM112.0,249.2h1.1v1.1h-1.1zM112.0,255.7h1.1v1.1h-1.1zM112.0,268.8h1.1v1.1h-1.1zM112.0,275.4h1.1v1.1h-1.1zM112.0,281.9h1.1v1.1h-1.1zM112.0,288.4h1.1v1.1h-1.1zM112.0,301.6h1.1v1.1h-1.1zM112.0,308.1h1.1v1.1h-1.1zM112.0,314.6h1.1v1.1h-1.1zM112.0,321.2h1.1v1.1h-1.1zM112.0,334.3h1.1v1.1h-1.1zM112.0,340.9h1.1v1.1h-1.1zM112.0,347.4h1.1v1.1h-1.1zM112.0,353.9h1.1v1.1h-1.1zM112.0,367.1h1.1v1.1h-1.1zM112.0,373.6h1.1v1.1h-1.1zM112.0,380.1h1.1v1.1h-1.1zM112.0,386.7h1.1v1.1h-1.1zM211.9,72.3h1.1v1.1h-1.1zM211.9,78.8h1.1v1.1h-1.1zM211.9,85.4h1.1v1.1h-1.1zM211.9,92.0h1.1v1.1h-1.1zM211.9,105.0h1.1v1.1h-1.1zM211.9,111.6h1.1v1.1h-1.1zM211.9,118.2h1.1v1.1h-1.1zM211.9,124.7h1.1v1.1h-1.1zM211.9,137.8h1.1v1.1h-1.1zM211.9,144.3h1.1v1.1h-1.1zM211.9,150.9h1.1v1.1h-1.1zM211.9,157.4h1.1v1.1h-1.1zM211.9,170.6h1.1v1.1h-1.1zM211.9,177.1h1.1v1.1h-1.1zM211.9,183.7h1.1v1.1h-1.1zM211.9,190.2h1.1v1.1h-1.1zM211.9,203.3h1.1v1.1h-1.1zM211.9,209.8h1.1v1.1h-1.1zM211.9,216.4h1.1v1.1h-1.1zM211.9,222.9h1.1v1.1h-1.1zM211.9,236.1h1.1v1.1h-1.1zM211.9,242.6h1.1v1.1h-1.1zM211.9,249.2h1.1v1.1h-1.1zM211.9,255.7h1.1v1.1h-1.1zM211.9,268.8h1.1v1.1h-1.1zM211.9,275.4h1.1v1.1h-1.1zM211.9,281.9h1.1v1.1h-1.1zM211.9,288.4h1.1v1.1h-1.1zM211.9,301.6h1.1v1.1h-1.1zM211.9,308.1h1.1v1.1h-1.1zM211.9,314.6h1.1v1.1h-1.1zM211.9,321.2h1.1v1.1h-1.1zM211.9,334.3h1.1v1.1h-1.1zM211.9,340.9h1.1v1.1h-1.1zM211.9,347.4h1.1v1.1h-1.1zM211.9,353.9h1.1v1.1h-1.1zM211.9,367.1h1.1v1.1h-1.1zM211.9,373.6h1.1v1.1h-1.1zM211.9,380.1h1.1v1.1h-1.1zM211.9,386.7h1.1v1.1h-1.1zM311.9,72.3h1.1v1.1h-1.1zM311.9,78.8h1.1v1.1h-1.1zM311.9,85.4h1.1v1.1h-1.1zM311.9,92.0h1.1v1.1h-1.1zM311.9,105.0h1.1v1.1h-1.1zM311.9,111.6h1.1v1.1h-1.1zM311.9,118.2h1.1v1.1h-1.1zM311.9,124.7h1.1v1.1h-1.1zM311.9,137.8h1.1v1.1h-1.1zM311.9,144.3h1.1v1.1h-1.1zM311.9,150.9h1.1v1.1h-1.1zM311.9,157.4h1.1v1.1h-1.1zM311.9,170.6h1.1v1.1h-1.1zM311.9,177.1h1.1v1.1h-1.1zM311.9,183.7h1.1v1.1h-1.1zM311.9,190.2h1.1v1.1h-1.1zM311.9,203.3h1.1v1.1h-1.1zM311.9,209.8h1.1v1.1h-1.1zM311.9,216.4h1.1v1.1h-1.1zM311.9,222.9h1.1v1.1h-1.1zM311.9,236.1h1.1v1.1h-1.1zM311.9,242.6h1.1v1.1h-1.1zM311.9,249.2h1.1v1.1h-1.1zM311.9,255.7h1.1v1.1h-1.1zM311.9,268.8h1.1v1.1h-1.1zM311.9,275.4h1.1v1.1h-1.1zM311.9,281.9h1.1v1.1h-1.1zM311.9,288.4h1.1v1.1h-1.1zM311.9,301.6h1.1v1.1h-1.1zM311.9,308.1h1.1v1.1h-1.1zM311.9,314.6h1.1v1.1h-1.1zM311.9,321.2h1.1v1.1h-1.1zM311.9,334.3h1.1v1.1h-1.1zM311.9,340.9h1.1v1.1h-1.1zM311.9,347.4h1.1v1.1h-1.1zM311.9,353.9h1.1v1.1h-1.1zM311.9,367.1h1.1v1.1h-1.1zM311.9,373.6h1.1v1.1h-1.1zM311.9,380.1h1.1v1.1h-1.1zM311.9,386.7h1.1v1.1h-1.1zM411.9,72.3h1.1v1.1h-1.1zM411.9,78.8h1.1v1.1h-1.1zM411.9,85.4h1.1v1.1h-1.1zM411.9,92.0h1.1v1.1h-1.1zM411.9,105.0h1.1v1.1h-1.1zM411.9,111.6h1.1v1.1h-1.1zM411.9,118.2h1.1v1.1h-1.1zM411.9,124.7h1.1v1.1h-1.1zM411.9,137.8h1.1v1.1h-1.1zM411.9,144.3h1.1v1.1h-1.1zM411.9,150.9h1.1v1.1h-1.1zM411.9,157.4h1.1v1.1h-1.1zM411.9,170.6h1.1v1.1h-1.1zM411.9,177.1h1.1v1.1h-1.1zM411.9,183.7h1.1v1.1h-1.1zM411.9,190.2h1.1v1.1h-1.1zM411.9,203.3h1.1v1.1h-1.1zM411.9,209.8h1.1v1.1h-1.1zM411.9,216.4h1.1v1.1h-1.1zM411.9,222.9h1.1v1.1h-1.1zM411.9,236.1h1.1v1.1h-1.1zM411.9,242.6h1.1v1.1h-1.1zM411.9,249.2h1.1v1.1h-1.1zM411.9,255.7h1.1v1.1h-1.1zM411.9,268.8h1.1v1.1h-1.1zM411.9,275.4h1.1v1.1h-1.1zM411.9,281.9h1.1v1.1h-1.1zM411.9,288.4h1.1v1.1h-1.1zM411.9,301.6h1.1v1.1h-1.1zM411.9,308.1h1.1v1.1h-1.1zM411.9,314.6h1.1v1.1h-1.1zM411.9,321.2h1.1v1.1h-1.1zM411.9,334.3h1.1v1.1h-1.1zM411.9,340.9h1.1v1.1h-1.1zM411.9,347.4h1.1v1.1h-1.1zM411.9,353.9h1.1v1.1h-1.1zM411.9,367.1h1.1v1.1h-1.1zM411.9,373.6h1.1v1.1h-1.1zM411.9,380.1h1.1v1.1h-1.1zM411.9,386.7h1.1v1.1h-1.1zM511.9,72.3h1.1v1.1h-1.1zM511.9,78.8h1.1v1.1h-1.1zM511.9,85.4h1.1v1.1h-1.1zM511.9,92.0h1.1v1.1h-1.1zM511.9,105.0h1.1v1.1h-1.1zM511.9,111.6h1.1v1.1h-1.1zM511.9,118.2h1.1v1.1h-1.1zM511.9,124.7h1.1v1.1h-1.1zM511.9,137.8h1.1v1.1h-1.1zM511.9,144.3h1.1v1.1h-1.1zM511.9,150.9h1.1v1.1h-1.1zM511.9,157.4h1.1v1.1h-1.1zM511.9,170.6h1.1v1.1h-1.1zM511.9,177.1h1.1v1.1h-1.1zM511.9,183.7h1.1v1.1h-1.1zM511.9,190.2h1.1v1.1h-1.1zM511.9,203.3h1.1v1.1h-1.1zM511.9,209.8h1.1v1.1h-1.1zM511.9,216.4h1.1v1.1h-1.1zM511.9,222.9h1.1v1.1h-1.1zM511.9,236.1h1.1v1.1h-1.1zM511.9,242.6h1.1v1.1h-1.1zM511.9,249.2h1.1v1.1h-1.1zM511.9,255.7h1.1v1.1h-1.1zM511.9,268.8h1.1v1.1h-1.1zM511.9,275.4h1.1v1.1h-1.1zM511.9,281.9h1.1v1.1h-1.1zM511.9,288.4h1.1v1.1h-1.1zM511.9,301.6h1.1v1.1h-1.1zM511.9,308.1h1.1v1.1h-1.1zM511.9,314.6h1.1v1.1h-1.1zM511.9,321.2h1.1v1.1h-1.1zM511.9,334.3h1.1v1.1h-1.1zM511.9,340.9h1.1v1.1h-1.1zM511.9,347.4h1.1v1.1h-1.1zM511.9,353.9h1.1v1.1h-1.1zM511.9,367.1h1.1v1.1h-1.1zM511.9,373.6h1.1v1.1h-1.1zM511.9,380.1h1.1v1.1h-1.1zM511.9,386.7h1.1v1.1h-1.1zM612.0,72.3h1.1v1.1h-1.1zM612.0,78.8h1.1v1.1h-1.1zM612.0,85.4h1.1v1.1h-1.1zM612.0,92.0h1.1v1.1h-1.1zM612.0,105.0h1.1v1.1h-1.1zM612.0,111.6h1.1v1.1h-1.1zM612.0,118.2h1.1v1.1h-1.1zM612.0,124.7h1.1v1.1h-1.1zM612.0,137.8h1.1v1.1h-1.1zM612.0,144.3h1.1v1.1h-1.1zM612.0,150.9h1.1v1.1h-1.1zM612.0,157.4h1.1v1.1h-1.1zM612.0,170.6h1.1v1.1h-1.1zM612.0,177.1h1.1v1.1h-1.1zM612.0,183.7h1.1v1.1h-1.1zM612.0,190.2h1.1v1.1h-1.1zM612.0,203.3h1.1v1.1h-1.1zM612.0,209.8h1.1v1.1h-1.1zM612.0,216.4h1.1v1.1h-1.1zM612.0,222.9h1.1v1.1h-1.1zM612.0,236.1h1.1v1.1h-1.1zM612.0,242.6h1.1v1.1h-1.1zM612.0,249.2h1.1v1.1h-1.1zM612.0,255.7h1.1v1.1h-1.1zM612.0,268.8h1.1v1.1h-1.1zM612.0,275.4h1.1v1.1h-1.1zM612.0,281.9h1.1v1.1h-1.1zM612.0,288.4h1.1v1.1h-1.1zM612.0,301.6h1.1v1.1h-1.1zM612.0,308.1h1.1v1.1h-1.1zM612.0,314.6h1.1v1.1h-1.1zM612.0,321.2h1.1v1.1h-1.1zM612.0,334.3h1.1v1.1h-1.1zM612.0,340.9h1.1v1.1h-1.1zM612.0,347.4h1.1v1.1h-1.1zM612.0,353.9h1.1v1.1h-1.1zM612.0,367.1h1.1v1.1h-1.1zM612.0,373.6h1.1v1.1h-1.1zM612.0,380.1h1.1v1.1h-1.1zM612.0,386.7h1.1v1.1h-1.1zM712.0,72.3h1.1v1.1h-1.1zM712.0,78.8h1.1v1.1h-1.1zM712.0,85.4h1.1v1.1h-1.1zM712.0,92.0h1.1v1.1h-1.1zM712.0,105.0h1.1v1.1h-1.1zM712.0,111.6h1.1v1.1h-1.1zM712.0,118.2h1.1v1.1h-1.1zM712.0,124.7h1.1v1.1h-1.1zM712.0,137.8h1.1v1.1h-1.1zM712.0,144.3h1.1v1.1h-1.1zM712.0,150.9h1.1v1.1h-1.1zM712.0,157.4h1.1v1.1h-1.1zM712.0,170.6h1.1v1.1h-1.1zM712.0,177.1h1.1v1.1h-1.1zM712.0,183.7h1.1v1.1h-1.1zM712.0,190.2h1.1v1.1h-1.1zM712.0,203.3h1.1v1.1h-1.1zM712.0,209.8h1.1v1.1h-1.1zM712.0,216.4h1.1v1.1h-1.1zM712.0,222.9h1.1v1.1h-1.1zM712.0,236.1h1.1v1.1h-1.1zM712.0,242.6h1.1v1.1h-1.1zM712.0,249.2h1.1v1.1h-1.1zM712.0,255.7h1.1v1.1h-1.1zM712.0,268.8h1.1v1.1h-1.1zM712.0,275.4h1.1v1.1h-1.1zM712.0,281.9h1.1v1.1h-1.1zM712.0,288.4h1.1v1.1h-1.1zM712.0,301.6h1.1v1.1h-1.1zM712.0,308.1h1.1v1.1h-1.1zM712.0,314.6h1.1v1.1h-1.1zM712.0,321.2h1.1v1.1h-1.1zM712.0,334.3h1.1v1.1h-1.1zM712.0,340.9h1.1v1.1h-1.1zM712.0,347.4h1.1v1.1h-1.1zM712.0,353.9h1.1v1.1h-1.1zM712.0,367.1h1.1v1.1h-1.1zM712.0,373.6h1.1v1.1h-1.1zM712.0,380.1h1.1v1.1h-1.1zM712.0,386.7h1.1v1.1h-1.1zM812.0,72.3h1.1v1.1h-1.1zM812.0,78.8h1.1v1.1h-1.1zM812.0,85.4h1.1v1.1h-1.1zM812.0,92.0h1.1v1.1h-1.1zM812.0,105.0h1.1v1.1h-1.1zM812.0,111.6h1.1v1.1h-1.1zM812.0,118.2h1.1v1.1h-1.1zM812.0,124.7h1.1v1.1h-1.1zM812.0,137.8h1.1v1.1h-1.1zM812.0,144.3h1.1v1.1h-1.1zM812.0,150.9h1.1v1.1h-1.1zM812.0,157.4h1.1v1.1h-1.1zM812.0,170.6h1.1v1.1h-1.1zM812.0,177.1h1.1v1.1h-1.1zM812.0,183.7h1.1v1.1h-1.1zM812.0,190.2h1.1v1.1h-1.1zM812.0,203.3h1.1v1.1h-1.1zM812.0,209.8h1.1v1.1h-1.1zM812.0,216.4h1.1v1.1h-1.1zM812.0,222.9h1.1v1.1h-1.1zM812.0,236.1h1.1v1.1h-1.1zM812.0,242.6h1.1v1.1h-1.1zM812.0,249.2h1.1v1.1h-1.1zM812.0,255.7h1.1v1.1h-1.1zM812.0,268.8h1.1v1.1h-1.1zM812.0,275.4h1.1v1.1h-1.1zM812.0,281.9h1.1v1.1h-1.1zM812.0,288.4h1.1v1.1h-1.1zM812.0,301.6h1.1v1.1h-1.1zM812.0,308.1h1.1v1.1h-1.1zM812.0,314.6h1.1v1.1h-1.1zM812.0,321.2h1.1v1.1h-1.1zM812.0,334.3h1.1v1.1h-1.1zM812.0,340.9h1.1v1.1h-1.1zM812.0,347.4h1.1v1.1h-1.1zM812.0,353.9h1.1v1.1h-1.1zM812.0,367.1h1.1v1.1h-1.1zM812.0,373.6h1.1v1.1h-1.1zM812.0,380.1h1.1v1.1h-1.1zM812.0,386.7h1.1v1.1h-1.1zM912.0,72.3h1.1v1.1h-1.1zM912.0,78.8h1.1v1.1h-1.1zM912.0,85.4h1.1v1.1h-1.1zM912.0,92.0h1.1v1.1h-1.1zM912.0,105.0h1.1v1.1h-1.1zM912.0,111.6h1.1v1.1h-1.1zM912.0,118.2h1.1v1.1h-1.1zM912.0,124.7h1.1v1.1h-1.1zM912.0,137.8h1.1v1.1h-1.1zM912.0,144.3h1.1v1.1h-1.1zM912.0,150.9h1.1v1.1h-1.1zM912.0,157.4h1.1v1.1h-1.1zM912.0,170.6h1.1v1.1h-1.1zM912.0,177.1h1.1v1.1h-1.1zM912.0,183.7h1.1v1.1h-1.1zM912.0,190.2h1.1v1.1h-1.1zM912.0,203.3h1.1v1.1h-1.1zM912.0,209.8h1.1v1.1h-1.1zM912.0,216.4h1.1v1.1h-1.1zM912.0,222.9h1.1v1.1h-1.1zM912.0,236.1h1.1v1.1h-1.1zM912.0,242.6h1.1v1.1h-1.1zM912.0,249.2h1.1v1.1h-1.1zM912.0,255.7h1.1v1.1h-1.1zM912.0,268.8h1.1v1.1h-1.1zM912.0,275.4h1.1v1.1h-1.1zM912.0,281.9h1.1v1.1h-1.1zM912.0,288.4h1.1v1.1h-1.1zM912.0,301.6h1.1v1.1h-1.1zM912.0,308.1h1.1v1.1h-1.1zM912.0,314.6h1.1v1.1h-1.1zM912.0,321.2h1.1v1.1h-1.1zM912.0,334.3h1.1v1.1h-1.1zM912.0,340.9h1.1v1.1h-1.1zM912.0,347.4h1.1v1.1h-1.1zM912.0,353.9h1.1v1.1h-1.1zM912.0,367.1h1.1v1.1h-1.1zM912.0,373.6h1.1v1.1h-1.1zM912.0,380.1h1.1v1.1h-1.1zM912.0,386.7h1.1v1.1h-1.1zM22.0,427.0h1.1v1.1h-1.1zM32.0,427.0h1.1v1.1h-1.1zM42.0,427.0h1.1v1.1h-1.1zM52.0,427.0h1.1v1.1h-1.1zM62.0,427.0h1.1v1.1h-1.1zM72.0,427.0h1.1v1.1h-1.1zM82.0,427.0h1.1v1.1h-1.1zM92.0,427.0h1.1v1.1h-1.1zM102.0,427.0h1.1v1.1h-1.1zM112.0,427.0h1.1v1.1h-1.1zM122.0,427.0h1.1v1.1h-1.1zM132.0,427.0h1.1v1.1h-1.1zM142.0,427.0h1.1v1.1h-1.1zM152.0,427.0h1.1v1.1h-1.1zM162.0,427.0h1.1v1.1h-1.1zM172.0,427.0h1.1v1.1h-1.1zM182.0,427.0h1.1v1.1h-1.1zM192.0,427.0h1.1v1.1h-1.1zM202.0,427.0h1.1v1.1h-1.1zM212.0,427.0h1.1v1.1h-1.1zM222.0,427.0h1.1v1.1h-1.1zM232.0,427.0h1.1v1.1h-1.1zM242.0,427.0h1.1v1.1h-1.1zM252.0,427.0h1.1v1.1h-1.1zM262.0,427.0h1.1v1.1h-1.1zM272.0,427.0h1.1v1.1h-1.1zM282.0,427.0h1.1v1.1h-1.1zM292.0,427.0h1.1v1.1h-1.1zM302.0,427.0h1.1v1.1h-1.1zM312.0,427.0h1.1v1.1h-1.1zM322.0,427.0h1.1v1.1h-1.1zM332.0,427.0h1.1v1.1h-1.1zM342.0,427.0h1.1v1.1h-1.1zM352.0,427.0h1.1v1.1h-1.1zM362.0,427.0h1.1v1.1h-1.1zM372.0,427.0h1.1v1.1h-1.1zM382.0,427.0h1.1v1.1h-1.1zM392.0,427.0h1.1v1.1h-1.1zM402.0,427.0h1.1v1.1h-1.1zM412.0,427.0h1.1v1.1h-1.1zM422.0,427.0h1.1v1.1h-1.1zM432.0,427.0h1.1v1.1h-1.1zM442.0,427.0h1.1v1.1h-1.1zM452.0,427.0h1.1v1.1h-1.1zM462.0,427.0h1.1v1.1h-1.1zM472.0,427.0h1.1v1.1h-1.1zM482.0,427.0h1.1v1.1h-1.1zM492.0,427.0h1.1v1.1h-1.1zM502.0,427.0h1.1v1.1h-1.1zM512.0,427.0h1.1v1.1h-1.1zM522.0,427.0h1.1v1.1h-1.1zM532.0,427.0h1.1v1.1h-1.1zM542.0,427.0h1.1v1.1h-1.1zM552.0,427.0h1.1v1.1h-1.1zM562.0,427.0h1.1v1.1h-1.1zM572.0,427.0h1.1v1.1h-1.1zM582.0,427.0h1.1v1.1h-1.1zM592.0,427.0h1.1v1.1h-1.1zM602.0,427.0h1.1v1.1h-1.1zM612.0,427.0h1.1v1.1h-1.1zM622.0,427.0h1.1v1.1h-1.1zM632.0,427.0h1.1v1.1h-1.1zM642.0,427.0h1.1v1.1h-1.1zM652.0,427.0h1.1v1.1h-1.1zM662.0,427.0h1.1v1.1h-1.1zM672.0,427.0h1.1v1.1h-1.1zM682.0,427.0h1.1v1.1h-1.1zM692.0,427.0h1.1v1.1h-1.1zM702.0,427.0h1.1v1.1h-1.1zM712.0,427.0h1.1v1.1h-1.1zM722.0,427.0h1.1v1.1h-1.1zM732.0,427.0h1.1v1.1h-1.1zM742.0,427.0h1.1v1.1h-1.1zM752.0,427.0h1.1v1.1h-1.1zM762.0,427.0h1.1v1.1h-1.1zM772.0,427.0h1.1v1.1h-1.1zM782.0,427.0h1.1v1.1h-1.1zM792.0,427.0h1.1v1.1h-1.1zM802.0,427.0h1.1v1.1h-1.1zM812.0,427.0h1.1v1.1h-1.1zM822.0,427.0h1.1v1.1h-1.1zM832.0,427.0h1.1v1.1h-1.1zM842.0,427.0h1.1v1.1h-1.1zM852.0,427.0h1.1v1.1h-1.1zM862.0,427.0h1.1v1.1h-1.1zM872.0,427.0h1.1v1.1h-1.1zM882.0,427.0h1.1v1.1h-1.1zM892.0,427.0h1.1v1.1h-1.1zM902.0,427.0h1.1v1.1h-1.1zM912.0,427.0h1.1v1.1h-1.1zM922.0,427.0h1.1v1.1h-1.1zM932.0,427.0h1.1v1.1h-1.1zM942.0,427.0h1.1v1.1h-1.1zM952.0,427.0h1.1v1.1h-1.1zM962.0,427.0h1.1v1.1h-1.1zM972.0,427.0h1.1v1.1h-1.1zM982.0,427.0h1.1v1.1h-1.1zM992.0,427.0h1.1v1.1h-1.1zM1002.0,427.0h1.1v1.1h-1.1zM22.0,459.7h1.1v1.1h-1.1zM32.0,459.7h1.1v1.1h-1.1zM42.0,459.7h1.1v1.1h-1.1zM52.0,459.7h1.1v1.1h-1.1zM62.0,459.7h1.1v1.1h-1.1zM72.0,459.7h1.1v1.1h-1.1zM82.0,459.7h1.1v1.1h-1.1zM92.0,459.7h1.1v1.1h-1.1zM102.0,459.7h1.1v1.1h-1.1zM112.0,459.7h1.1v1.1h-1.1zM122.0,459.7h1.1v1.1h-1.1zM132.0,459.7h1.1v1.1h-1.1zM142.0,459.7h1.1v1.1h-1.1zM152.0,459.7h1.1v1.1h-1.1zM162.0,459.7h1.1v1.1h-1.1zM172.0,459.7h1.1v1.1h-1.1zM182.0,459.7h1.1v1.1h-1.1zM192.0,459.7h1.1v1.1h-1.1zM202.0,459.7h1.1v1.1h-1.1zM212.0,459.7h1.1v1.1h-1.1zM222.0,459.7h1.1v1.1h-1.1zM232.0,459.7h1.1v1.1h-1.1zM242.0,459.7h1.1v1.1h-1.1zM252.0,459.7h1.1v1.1h-1.1zM262.0,459.7h1.1v1.1h-1.1zM272.0,459.7h1.1v1.1h-1.1zM282.0,459.7h1.1v1.1h-1.1zM292.0,459.7h1.1v1.1h-1.1zM302.0,459.7h1.1v1.1h-1.1zM312.0,459.7h1.1v1.1h-1.1zM322.0,459.7h1.1v1.1h-1.1zM332.0,459.7h1.1v1.1h-1.1zM342.0,459.7h1.1v1.1h-1.1zM352.0,459.7h1.1v1.1h-1.1zM362.0,459.7h1.1v1.1h-1.1zM372.0,459.7h1.1v1.1h-1.1zM382.0,459.7h1.1v1.1h-1.1zM392.0,459.7h1.1v1.1h-1.1zM402.0,459.7h1.1v1.1h-1.1zM412.0,459.7h1.1v1.1h-1.1zM422.0,459.7h1.1v1.1h-1.1zM432.0,459.7h1.1v1.1h-1.1zM442.0,459.7h1.1v1.1h-1.1zM452.0,459.7h1.1v1.1h-1.1zM462.0,459.7h1.1v1.1h-1.1zM472.0,459.7h1.1v1.1h-1.1zM482.0,459.7h1.1v1.1h-1.1zM492.0,459.7h1.1v1.1h-1.1zM502.0,459.7h1.1v1.1h-1.1zM512.0,459.7h1.1v1.1h-1.1zM522.0,459.7h1.1v1.1h-1.1zM532.0,459.7h1.1v1.1h-1.1zM542.0,459.7h1.1v1.1h-1.1zM552.0,459.7h1.1v1.1h-1.1zM562.0,459.7h1.1v1.1h-1.1zM572.0,459.7h1.1v1.1h-1.1zM582.0,459.7h1.1v1.1h-1.1zM592.0,459.7h1.1v1.1h-1.1zM602.0,459.7h1.1v1.1h-1.1zM612.0,459.7h1.1v1.1h-1.1zM622.0,459.7h1.1v1.1h-1.1zM632.0,459.7h1.1v1.1h-1.1zM642.0,459.7h1.1v1.1h-1.1zM652.0,459.7h1.1v1.1h-1.1zM662.0,459.7h1.1v1.1h-1.1zM672.0,459.7h1.1v1.1h-1.1zM682.0,459.7h1.1v1.1h-1.1zM692.0,459.7h1.1v1.1h-1.1zM702.0,459.7h1.1v1.1h-1.1zM712.0,459.7h1.1v1.1h-1.1zM722.0,459.7h1.1v1.1h-1.1zM732.0,459.7h1.1v1.1h-1.1zM742.0,459.7h1.1v1.1h-1.1zM752.0,459.7h1.1v1.1h-1.1zM762.0,459.7h1.1v1.1h-1.1zM772.0,459.7h1.1v1.1h-1.1zM782.0,459.7h1.1v1.1h-1.1zM792.0,459.7h1.1v1.1h-1.1zM802.0,459.7h1.1v1.1h-1.1zM812.0,459.7h1.1v1.1h-1.1zM822.0,459.7h1.1v1.1h-1.1zM832.0,459.7h1.1v1.1h-1.1zM842.0,459.7h1.1v1.1h-1.1zM852.0,459.7h1.1v1.1h-1.1zM862.0,459.7h1.1v1.1h-1.1zM872.0,459.7h1.1v1.1h-1.1zM882.0,459.7h1.1v1.1h-1.1zM892.0,459.7h1.1v1.1h-1.1zM902.0,459.7h1.1v1.1h-1.1zM912.0,459.7h1.1v1.1h-1.1zM922.0,459.7h1.1v1.1h-1.1zM932.0,459.7h1.1v1.1h-1.1zM942.0,459.7h1.1v1.1h-1.1zM952.0,459.7h1.1v1.1h-1.1zM962.0,459.7h1.1v1.1h-1.1zM972.0,459.7h1.1v1.1h-1.1zM982.0,459.7h1.1v1.1h-1.1zM992.0,459.7h1.1v1.1h-1.1zM1002.0,459.7h1.1v1.1h-1.1zM22.0,492.3h1.1v1.1h-1.1zM32.0,492.3h1.1v1.1h-1.1zM42.0,492.3h1.1v1.1h-1.1zM52.0,492.3h1.1v1.1h-1.1zM62.0,492.3h1.1v1.1h-1.1zM72.0,492.3h1.1v1.1h-1.1zM82.0,492.3h1.1v1.1h-1.1zM92.0,492.3h1.1v1.1h-1.1zM102.0,492.3h1.1v1.1h-1.1zM112.0,492.3h1.1v1.1h-1.1zM122.0,492.3h1.1v1.1h-1.1zM132.0,492.3h1.1v1.1h-1.1zM142.0,492.3h1.1v1.1h-1.1zM152.0,492.3h1.1v1.1h-1.1zM162.0,492.3h1.1v1.1h-1.1zM172.0,492.3h1.1v1.1h-1.1zM182.0,492.3h1.1v1.1h-1.1zM192.0,492.3h1.1v1.1h-1.1zM202.0,492.3h1.1v1.1h-1.1zM212.0,492.3h1.1v1.1h-1.1zM222.0,492.3h1.1v1.1h-1.1zM232.0,492.3h1.1v1.1h-1.1zM242.0,492.3h1.1v1.1h-1.1zM252.0,492.3h1.1v1.1h-1.1zM262.0,492.3h1.1v1.1h-1.1zM272.0,492.3h1.1v1.1h-1.1zM282.0,492.3h1.1v1.1h-1.1zM292.0,492.3h1.1v1.1h-1.1zM302.0,492.3h1.1v1.1h-1.1zM312.0,492.3h1.1v1.1h-1.1zM322.0,492.3h1.1v1.1h-1.1zM332.0,492.3h1.1v1.1h-1.1zM342.0,492.3h1.1v1.1h-1.1zM352.0,492.3h1.1v1.1h-1.1zM362.0,492.3h1.1v1.1h-1.1zM372.0,492.3h1.1v1.1h-1.1zM382.0,492.3h1.1v1.1h-1.1zM392.0,492.3h1.1v1.1h-1.1zM402.0,492.3h1.1v1.1h-1.1zM412.0,492.3h1.1v1.1h-1.1zM422.0,492.3h1.1v1.1h-1.1zM432.0,492.3h1.1v1.1h-1.1zM442.0,492.3h1.1v1.1h-1.1zM452.0,492.3h1.1v1.1h-1.1zM462.0,492.3h1.1v1.1h-1.1zM472.0,492.3h1.1v1.1h-1.1zM482.0,492.3h1.1v1.1h-1.1zM492.0,492.3h1.1v1.1h-1.1zM502.0,492.3h1.1v1.1h-1.1zM512.0,492.3h1.1v1.1h-1.1zM522.0,492.3h1.1v1.1h-1.1zM532.0,492.3h1.1v1.1h-1.1zM542.0,492.3h1.1v1.1h-1.1zM552.0,492.3h1.1v1.1h-1.1zM562.0,492.3h1.1v1.1h-1.1zM572.0,492.3h1.1v1.1h-1.1zM582.0,492.3h1.1v1.1h-1.1zM592.0,492.3h1.1v1.1h-1.1zM602.0,492.3h1.1v1.1h-1.1zM612.0,492.3h1.1v1.1h-1.1zM622.0,492.3h1.1v1.1h-1.1zM632.0,492.3h1.1v1.1h-1.1zM642.0,492.3h1.1v1.1h-1.1zM652.0,492.3h1.1v1.1h-1.1zM662.0,492.3h1.1v1.1h-1.1zM672.0,492.3h1.1v1.1h-1.1zM682.0,492.3h1.1v1.1h-1.1zM692.0,492.3h1.1v1.1h-1.1zM702.0,492.3h1.1v1.1h-1.1zM712.0,492.3h1.1v1.1h-1.1zM722.0,492.3h1.1v1.1h-1.1zM732.0,492.3h1.1v1.1h-1.1zM742.0,492.3h1.1v1.1h-1.1zM752.0,492.3h1.1v1.1h-1.1zM762.0,492.3h1.1v1.1h-1.1zM772.0,492.3h1.1v1.1h-1.1zM782.0,492.3h1.1v1.1h-1.1zM792.0,492.3h1.1v1.1h-1.1zM802.0,492.3h1.1v1.1h-1.1zM812.0,492.3h1.1v1.1h-1.1zM822.0,492.3h1.1v1.1h-1.1zM832.0,492.3h1.1v1.1h-1.1zM842.0,492.3h1.1v1.1h-1.1zM852.0,492.3h1.1v1.1h-1.1zM862.0,492.3h1.1v1.1h-1.1zM872.0,492.3h1.1v1.1h-1.1zM882.0,492.3h1.1v1.1h-1.1zM892.0,492.3h1.1v1.1h-1.1zM902.0,492.3h1.1v1.1h-1.1zM912.0,492.3h1.1v1.1h-1.1zM922.0,492.3h1.1v1.1h-1.1zM932.0,492.3h1.1v1.1h-1.1zM942.0,492.3h1.1v1.1h-1.1zM952.0,492.3h1.1v1.1h-1.1zM962.0,492.3h1.1v1.1h-1.1zM972.0,492.3h1.1v1.1h-1.1zM982.0,492.3h1.1v1.1h-1.1zM992.0,492.3h1.1v1.1h-1.1zM1002.0,492.3h1.1v1.1h-1.1zM22.0,525.0h1.1v1.1h-1.1zM32.0,525.0h1.1v1.1h-1.1zM42.0,525.0h1.1v1.1h-1.1zM52.0,525.0h1.1v1.1h-1.1zM62.0,525.0h1.1v1.1h-1.1zM72.0,525.0h1.1v1.1h-1.1zM82.0,525.0h1.1v1.1h-1.1zM92.0,525.0h1.1v1.1h-1.1zM102.0,525.0h1.1v1.1h-1.1zM112.0,525.0h1.1v1.1h-1.1zM122.0,525.0h1.1v1.1h-1.1zM132.0,525.0h1.1v1.1h-1.1zM142.0,525.0h1.1v1.1h-1.1zM152.0,525.0h1.1v1.1h-1.1zM162.0,525.0h1.1v1.1h-1.1zM172.0,525.0h1.1v1.1h-1.1zM182.0,525.0h1.1v1.1h-1.1zM192.0,525.0h1.1v1.1h-1.1zM202.0,525.0h1.1v1.1h-1.1zM212.0,525.0h1.1v1.1h-1.1zM222.0,525.0h1.1v1.1h-1.1zM232.0,525.0h1.1v1.1h-1.1zM242.0,525.0h1.1v1.1h-1.1zM252.0,525.0h1.1v1.1h-1.1zM262.0,525.0h1.1v1.1h-1.1zM272.0,525.0h1.1v1.1h-1.1zM282.0,525.0h1.1v1.1h-1.1zM292.0,525.0h1.1v1.1h-1.1zM302.0,525.0h1.1v1.1h-1.1zM312.0,525.0h1.1v1.1h-1.1zM322.0,525.0h1.1v1.1h-1.1zM332.0,525.0h1.1v1.1h-1.1zM342.0,525.0h1.1v1.1h-1.1zM352.0,525.0h1.1v1.1h-1.1zM362.0,525.0h1.1v1.1h-1.1zM372.0,525.0h1.1v1.1h-1.1zM382.0,525.0h1.1v1.1h-1.1zM392.0,525.0h1.1v1.1h-1.1zM402.0,525.0h1.1v1.1h-1.1zM412.0,525.0h1.1v1.1h-1.1zM422.0,525.0h1.1v1.1h-1.1zM432.0,525.0h1.1v1.1h-1.1zM442.0,525.0h1.1v1.1h-1.1zM452.0,525.0h1.1v1.1h-1.1zM462.0,525.0h1.1v1.1h-1.1zM472.0,525.0h1.1v1.1h-1.1zM482.0,525.0h1.1v1.1h-1.1zM492.0,525.0h1.1v1.1h-1.1zM502.0,525.0h1.1v1.1h-1.1zM512.0,525.0h1.1v1.1h-1.1zM522.0,525.0h1.1v1.1h-1.1zM532.0,525.0h1.1v1.1h-1.1zM542.0,525.0h1.1v1.1h-1.1zM552.0,525.0h1.1v1.1h-1.1zM562.0,525.0h1.1v1.1h-1.1zM572.0,525.0h1.1v1.1h-1.1zM582.0,525.0h1.1v1.1h-1.1zM592.0,525.0h1.1v1.1h-1.1zM602.0,525.0h1.1v1.1h-1.1zM612.0,525.0h1.1v1.1h-1.1zM622.0,525.0h1.1v1.1h-1.1zM632.0,525.0h1.1v1.1h-1.1zM642.0,525.0h1.1v1.1h-1.1zM652.0,525.0h1.1v1.1h-1.1zM662.0,525.0h1.1v1.1h-1.1zM672.0,525.0h1.1v1.1h-1.1zM682.0,525.0h1.1v1.1h-1.1zM692.0,525.0h1.1v1.1h-1.1zM702.0,525.0h1.1v1.1h-1.1zM712.0,525.0h1.1v1.1h-1.1zM722.0,525.0h1.1v1.1h-1.1zM732.0,525.0h1.1v1.1h-1.1zM742.0,525.0h1.1v1.1h-1.1zM752.0,525.0h1.1v1.1h-1.1zM762.0,525.0h1.1v1.1h-1.1zM772.0,525.0h1.1v1.1h-1.1zM782.0,525.0h1.1v1.1h-1.1zM792.0,525.0h1.1v1.1h-1.1zM802.0,525.0h1.1v1.1h-1.1zM812.0,525.0h1.1v1.1h-1.1zM822.0,525.0h1.1v1.1h-1.1zM832.0,525.0h1.1v1.1h-1.1zM842.0,525.0h1.1v1.1h-1.1zM852.0,525.0h1.1v1.1h-1.1zM862.0,525.0h1.1v1.1h-1.1zM872.0,525.0h1.1v1.1h-1.1zM882.0,525.0h1.1v1.1h-1.1zM892.0,525.0h1.1v1.1h-1.1zM902.0,525.0h1.1v1.1h-1.1zM912.0,525.0h1.1v1.1h-1.1zM922.0,525.0h1.1v1.1h-1.1zM932.0,525.0h1.1v1.1h-1.1zM942.0,525.0h1.1v1.1h-1.1zM952.0,525.0h1.1v1.1h-1.1zM962.0,525.0h1.1v1.1h-1.1zM972.0,525.0h1.1v1.1h-1.1zM982.0,525.0h1.1v1.1h-1.1zM992.0,525.0h1.1v1.1h-1.1zM1002.0,525.0h1.1v1.1h-1.1zM22.0,557.6h1.1v1.1h-1.1zM32.0,557.6h1.1v1.1h-1.1zM42.0,557.6h1.1v1.1h-1.1zM52.0,557.6h1.1v1.1h-1.1zM62.0,557.6h1.1v1.1h-1.1zM72.0,557.6h1.1v1.1h-1.1zM82.0,557.6h1.1v1.1h-1.1zM92.0,557.6h1.1v1.1h-1.1zM102.0,557.6h1.1v1.1h-1.1zM112.0,557.6h1.1v1.1h-1.1zM122.0,557.6h1.1v1.1h-1.1zM132.0,557.6h1.1v1.1h-1.1zM142.0,557.6h1.1v1.1h-1.1zM152.0,557.6h1.1v1.1h-1.1zM162.0,557.6h1.1v1.1h-1.1zM172.0,557.6h1.1v1.1h-1.1zM182.0,557.6h1.1v1.1h-1.1zM192.0,557.6h1.1v1.1h-1.1zM202.0,557.6h1.1v1.1h-1.1zM212.0,557.6h1.1v1.1h-1.1zM222.0,557.6h1.1v1.1h-1.1zM232.0,557.6h1.1v1.1h-1.1zM242.0,557.6h1.1v1.1h-1.1zM252.0,557.6h1.1v1.1h-1.1zM262.0,557.6h1.1v1.1h-1.1zM272.0,557.6h1.1v1.1h-1.1zM282.0,557.6h1.1v1.1h-1.1zM292.0,557.6h1.1v1.1h-1.1zM302.0,557.6h1.1v1.1h-1.1zM312.0,557.6h1.1v1.1h-1.1zM322.0,557.6h1.1v1.1h-1.1zM332.0,557.6h1.1v1.1h-1.1zM342.0,557.6h1.1v1.1h-1.1zM352.0,557.6h1.1v1.1h-1.1zM362.0,557.6h1.1v1.1h-1.1zM372.0,557.6h1.1v1.1h-1.1zM382.0,557.6h1.1v1.1h-1.1zM392.0,557.6h1.1v1.1h-1.1zM402.0,557.6h1.1v1.1h-1.1zM412.0,557.6h1.1v1.1h-1.1zM422.0,557.6h1.1v1.1h-1.1zM432.0,557.6h1.1v1.1h-1.1zM442.0,557.6h1.1v1.1h-1.1zM452.0,557.6h1.1v1.1h-1.1zM462.0,557.6h1.1v1.1h-1.1zM472.0,557.6h1.1v1.1h-1.1zM482.0,557.6h1.1v1.1h-1.1zM492.0,557.6h1.1v1.1h-1.1zM502.0,557.6h1.1v1.1h-1.1zM512.0,557.6h1.1v1.1h-1.1zM522.0,557.6h1.1v1.1h-1.1zM532.0,557.6h1.1v1.1h-1.1zM542.0,557.6h1.1v1.1h-1.1zM552.0,557.6h1.1v1.1h-1.1zM562.0,557.6h1.1v1.1h-1.1zM572.0,557.6h1.1v1.1h-1.1zM582.0,557.6h1.1v1.1h-1.1zM592.0,557.6h1.1v1.1h-1.1zM602.0,557.6h1.1v1.1h-1.1zM612.0,557.6h1.1v1.1h-1.1zM622.0,557.6h1.1v1.1h-1.1zM632.0,557.6h1.1v1.1h-1.1zM642.0,557.6h1.1v1.1h-1.1zM652.0,557.6h1.1v1.1h-1.1zM662.0,557.6h1.1v1.1h-1.1zM672.0,557.6h1.1v1.1h-1.1zM682.0,557.6h1.1v1.1h-1.1zM692.0,557.6h1.1v1.1h-1.1zM702.0,557.6h1.1v1.1h-1.1zM712.0,557.6h1.1v1.1h-1.1zM722.0,557.6h1.1v1.1h-1.1zM732.0,557.6h1.1v1.1h-1.1zM742.0,557.6h1.1v1.1h-1.1zM752.0,557.6h1.1v1.1h-1.1zM762.0,557.6h1.1v1.1h-1.1zM772.0,557.6h1.1v1.1h-1.1zM782.0,557.6h1.1v1.1h-1.1zM792.0,557.6h1.1v1.1h-1.1zM802.0,557.6h1.1v1.1h-1.1zM812.0,557.6h1.1v1.1h-1.1zM822.0,557.6h1.1v1.1h-1.1zM832.0,557.6h1.1v1.1h-1.1zM842.0,557.6h1.1v1.1h-1.1zM852.0,557.6h1.1v1.1h-1.1zM862.0,557.6h1.1v1.1h-1.1zM872.0,557.6h1.1v1.1h-1.1zM882.0,557.6h1.1v1.1h-1.1zM892.0,557.6h1.1v1.1h-1.1zM902.0,557.6h1.1v1.1h-1.1zM912.0,557.6h1.1v1.1h-1.1zM922.0,557.6h1.1v1.1h-1.1zM932.0,557.6h1.1v1.1h-1.1zM942.0,557.6h1.1v1.1h-1.1zM952.0,557.6h1.1v1.1h-1.1zM962.0,557.6h1.1v1.1h-1.1zM972.0,557.6h1.1v1.1h-1.1zM982.0,557.6h1.1v1.1h-1.1zM992.0,557.6h1.1v1.1h-1.1zM1002.0,557.6h1.1v1.1h-1.1zM22.0,590.3h1.1v1.1h-1.1zM32.0,590.3h1.1v1.1h-1.1zM42.0,590.3h1.1v1.1h-1.1zM52.0,590.3h1.1v1.1h-1.1zM62.0,590.3h1.1v1.1h-1.1zM72.0,590.3h1.1v1.1h-1.1zM82.0,590.3h1.1v1.1h-1.1zM92.0,590.3h1.1v1.1h-1.1zM102.0,590.3h1.1v1.1h-1.1zM112.0,590.3h1.1v1.1h-1.1zM122.0,590.3h1.1v1.1h-1.1zM132.0,590.3h1.1v1.1h-1.1zM142.0,590.3h1.1v1.1h-1.1zM152.0,590.3h1.1v1.1h-1.1zM162.0,590.3h1.1v1.1h-1.1zM172.0,590.3h1.1v1.1h-1.1zM182.0,590.3h1.1v1.1h-1.1zM192.0,590.3h1.1v1.1h-1.1zM202.0,590.3h1.1v1.1h-1.1zM212.0,590.3h1.1v1.1h-1.1zM222.0,590.3h1.1v1.1h-1.1zM232.0,590.3h1.1v1.1h-1.1zM242.0,590.3h1.1v1.1h-1.1zM252.0,590.3h1.1v1.1h-1.1zM262.0,590.3h1.1v1.1h-1.1zM272.0,590.3h1.1v1.1h-1.1zM282.0,590.3h1.1v1.1h-1.1zM292.0,590.3h1.1v1.1h-1.1zM302.0,590.3h1.1v1.1h-1.1zM312.0,590.3h1.1v1.1h-1.1zM322.0,590.3h1.1v1.1h-1.1zM332.0,590.3h1.1v1.1h-1.1zM342.0,590.3h1.1v1.1h-1.1zM352.0,590.3h1.1v1.1h-1.1zM362.0,590.3h1.1v1.1h-1.1zM372.0,590.3h1.1v1.1h-1.1zM382.0,590.3h1.1v1.1h-1.1zM392.0,590.3h1.1v1.1h-1.1zM402.0,590.3h1.1v1.1h-1.1zM412.0,590.3h1.1v1.1h-1.1zM422.0,590.3h1.1v1.1h-1.1zM432.0,590.3h1.1v1.1h-1.1zM442.0,590.3h1.1v1.1h-1.1zM452.0,590.3h1.1v1.1h-1.1zM462.0,590.3h1.1v1.1h-1.1zM472.0,590.3h1.1v1.1h-1.1zM482.0,590.3h1.1v1.1h-1.1zM492.0,590.3h1.1v1.1h-1.1zM502.0,590.3h1.1v1.1h-1.1zM512.0,590.3h1.1v1.1h-1.1zM522.0,590.3h1.1v1.1h-1.1zM532.0,590.3h1.1v1.1h-1.1zM542.0,590.3h1.1v1.1h-1.1zM552.0,590.3h1.1v1.1h-1.1zM562.0,590.3h1.1v1.1h-1.1zM572.0,590.3h1.1v1.1h-1.1zM582.0,590.3h1.1v1.1h-1.1zM592.0,590.3h1.1v1.1h-1.1zM602.0,590.3h1.1v1.1h-1.1zM612.0,590.3h1.1v1.1h-1.1zM622.0,590.3h1.1v1.1h-1.1zM632.0,590.3h1.1v1.1h-1.1zM642.0,590.3h1.1v1.1h-1.1zM652.0,590.3h1.1v1.1h-1.1zM662.0,590.3h1.1v1.1h-1.1zM672.0,590.3h1.1v1.1h-1.1zM682.0,590.3h1.1v1.1h-1.1zM692.0,590.3h1.1v1.1h-1.1zM702.0,590.3h1.1v1.1h-1.1zM712.0,590.3h1.1v1.1h-1.1zM722.0,590.3h1.1v1.1h-1.1zM732.0,590.3h1.1v1.1h-1.1zM742.0,590.3h1.1v1.1h-1.1zM752.0,590.3h1.1v1.1h-1.1zM762.0,590.3h1.1v1.1h-1.1zM772.0,590.3h1.1v1.1h-1.1zM782.0,590.3h1.1v1.1h-1.1zM792.0,590.3h1.1v1.1h-1.1zM802.0,590.3h1.1v1.1h-1.1zM812.0,590.3h1.1v1.1h-1.1zM822.0,590.3h1.1v1.1h-1.1zM832.0,590.3h1.1v1.1h-1.1zM842.0,590.3h1.1v1.1h-1.1zM852.0,590.3h1.1v1.1h-1.1zM862.0,590.3h1.1v1.1h-1.1zM872.0,590.3h1.1v1.1h-1.1zM882.0,590.3h1.1v1.1h-1.1zM892.0,590.3h1.1v1.1h-1.1zM902.0,590.3h1.1v1.1h-1.1zM912.0,590.3h1.1v1.1h-1.1zM922.0,590.3h1.1v1.1h-1.1zM932.0,590.3h1.1v1.1h-1.1zM942.0,590.3h1.1v1.1h-1.1zM952.0,590.3h1.1v1.1h-1.1zM962.0,590.3h1.1v1.1h-1.1zM972.0,590.3h1.1v1.1h-1.1zM982.0,590.3h1.1v1.1h-1.1zM992.0,590.3h1.1v1.1h-1.1zM1002.0,590.3h1.1v1.1h-1.1zM22.0,622.9h1.1v1.1h-1.1zM32.0,622.9h1.1v1.1h-1.1zM42.0,622.9h1.1v1.1h-1.1zM52.0,622.9h1.1v1.1h-1.1zM62.0,622.9h1.1v1.1h-1.1zM72.0,622.9h1.1v1.1h-1.1zM82.0,622.9h1.1v1.1h-1.1zM92.0,622.9h1.1v1.1h-1.1zM102.0,622.9h1.1v1.1h-1.1zM112.0,622.9h1.1v1.1h-1.1zM122.0,622.9h1.1v1.1h-1.1zM132.0,622.9h1.1v1.1h-1.1zM142.0,622.9h1.1v1.1h-1.1zM152.0,622.9h1.1v1.1h-1.1zM162.0,622.9h1.1v1.1h-1.1zM172.0,622.9h1.1v1.1h-1.1zM182.0,622.9h1.1v1.1h-1.1zM192.0,622.9h1.1v1.1h-1.1zM202.0,622.9h1.1v1.1h-1.1zM212.0,622.9h1.1v1.1h-1.1zM222.0,622.9h1.1v1.1h-1.1zM232.0,622.9h1.1v1.1h-1.1zM242.0,622.9h1.1v1.1h-1.1zM252.0,622.9h1.1v1.1h-1.1zM262.0,622.9h1.1v1.1h-1.1zM272.0,622.9h1.1v1.1h-1.1zM282.0,622.9h1.1v1.1h-1.1zM292.0,622.9h1.1v1.1h-1.1zM302.0,622.9h1.1v1.1h-1.1zM312.0,622.9h1.1v1.1h-1.1zM322.0,622.9h1.1v1.1h-1.1zM332.0,622.9h1.1v1.1h-1.1zM342.0,622.9h1.1v1.1h-1.1zM352.0,622.9h1.1v1.1h-1.1zM362.0,622.9h1.1v1.1h-1.1zM372.0,622.9h1.1v1.1h-1.1zM382.0,622.9h1.1v1.1h-1.1zM392.0,622.9h1.1v1.1h-1.1zM402.0,622.9h1.1v1.1h-1.1zM412.0,622.9h1.1v1.1h-1.1zM422.0,622.9h1.1v1.1h-1.1zM432.0,622.9h1.1v1.1h-1.1zM442.0,622.9h1.1v1.1h-1.1zM452.0,622.9h1.1v1.1h-1.1zM462.0,622.9h1.1v1.1h-1.1zM472.0,622.9h1.1v1.1h-1.1zM482.0,622.9h1.1v1.1h-1.1zM492.0,622.9h1.1v1.1h-1.1zM502.0,622.9h1.1v1.1h-1.1zM512.0,622.9h1.1v1.1h-1.1zM522.0,622.9h1.1v1.1h-1.1zM532.0,622.9h1.1v1.1h-1.1zM542.0,622.9h1.1v1.1h-1.1zM552.0,622.9h1.1v1.1h-1.1zM562.0,622.9h1.1v1.1h-1.1zM572.0,622.9h1.1v1.1h-1.1zM582.0,622.9h1.1v1.1h-1.1zM592.0,622.9h1.1v1.1h-1.1zM602.0,622.9h1.1v1.1h-1.1zM612.0,622.9h1.1v1.1h-1.1zM622.0,622.9h1.1v1.1h-1.1zM632.0,622.9h1.1v1.1h-1.1zM642.0,622.9h1.1v1.1h-1.1zM652.0,622.9h1.1v1.1h-1.1zM662.0,622.9h1.1v1.1h-1.1zM672.0,622.9h1.1v1.1h-1.1zM682.0,622.9h1.1v1.1h-1.1zM692.0,622.9h1.1v1.1h-1.1zM702.0,622.9h1.1v1.1h-1.1zM712.0,622.9h1.1v1.1h-1.1zM722.0,622.9h1.1v1.1h-1.1zM732.0,622.9h1.1v1.1h-1.1zM742.0,622.9h1.1v1.1h-1.1zM752.0,622.9h1.1v1.1h-1.1zM762.0,622.9h1.1v1.1h-1.1zM772.0,622.9h1.1v1.1h-1.1zM782.0,622.9h1.1v1.1h-1.1zM792.0,622.9h1.1v1.1h-1.1zM802.0,622.9h1.1v1.1h-1.1zM812.0,622.9h1.1v1.1h-1.1zM822.0,622.9h1.1v1.1h-1.1zM832.0,622.9h1.1v1.1h-1.1zM842.0,622.9h1.1v1.1h-1.1zM852.0,622.9h1.1v1.1h-1.1zM862.0,622.9h1.1v1.1h-1.1zM872.0,622.9h1.1v1.1h-1.1zM882.0,622.9h1.1v1.1h-1.1zM892.0,622.9h1.1v1.1h-1.1zM902.0,622.9h1.1v1.1h-1.1zM912.0,622.9h1.1v1.1h-1.1zM922.0,622.9h1.1v1.1h-1.1zM932.0,622.9h1.1v1.1h-1.1zM942.0,622.9h1.1v1.1h-1.1zM952.0,622.9h1.1v1.1h-1.1zM962.0,622.9h1.1v1.1h-1.1zM972.0,622.9h1.1v1.1h-1.1zM982.0,622.9h1.1v1.1h-1.1zM992.0,622.9h1.1v1.1h-1.1zM1002.0,622.9h1.1v1.1h-1.1zM22.0,655.6h1.1v1.1h-1.1zM32.0,655.6h1.1v1.1h-1.1zM42.0,655.6h1.1v1.1h-1.1zM52.0,655.6h1.1v1.1h-1.1zM62.0,655.6h1.1v1.1h-1.1zM72.0,655.6h1.1v1.1h-1.1zM82.0,655.6h1.1v1.1h-1.1zM92.0,655.6h1.1v1.1h-1.1zM102.0,655.6h1.1v1.1h-1.1zM112.0,655.6h1.1v1.1h-1.1zM122.0,655.6h1.1v1.1h-1.1zM132.0,655.6h1.1v1.1h-1.1zM142.0,655.6h1.1v1.1h-1.1zM152.0,655.6h1.1v1.1h-1.1zM162.0,655.6h1.1v1.1h-1.1zM172.0,655.6h1.1v1.1h-1.1zM182.0,655.6h1.1v1.1h-1.1zM192.0,655.6h1.1v1.1h-1.1zM202.0,655.6h1.1v1.1h-1.1zM212.0,655.6h1.1v1.1h-1.1zM222.0,655.6h1.1v1.1h-1.1zM232.0,655.6h1.1v1.1h-1.1zM242.0,655.6h1.1v1.1h-1.1zM252.0,655.6h1.1v1.1h-1.1zM262.0,655.6h1.1v1.1h-1.1zM272.0,655.6h1.1v1.1h-1.1zM282.0,655.6h1.1v1.1h-1.1zM292.0,655.6h1.1v1.1h-1.1zM302.0,655.6h1.1v1.1h-1.1zM312.0,655.6h1.1v1.1h-1.1zM322.0,655.6h1.1v1.1h-1.1zM332.0,655.6h1.1v1.1h-1.1zM342.0,655.6h1.1v1.1h-1.1zM352.0,655.6h1.1v1.1h-1.1zM362.0,655.6h1.1v1.1h-1.1zM372.0,655.6h1.1v1.1h-1.1zM382.0,655.6h1.1v1.1h-1.1zM392.0,655.6h1.1v1.1h-1.1zM402.0,655.6h1.1v1.1h-1.1zM412.0,655.6h1.1v1.1h-1.1zM422.0,655.6h1.1v1.1h-1.1zM432.0,655.6h1.1v1.1h-1.1zM442.0,655.6h1.1v1.1h-1.1zM452.0,655.6h1.1v1.1h-1.1zM462.0,655.6h1.1v1.1h-1.1zM472.0,655.6h1.1v1.1h-1.1zM482.0,655.6h1.1v1.1h-1.1zM492.0,655.6h1.1v1.1h-1.1zM502.0,655.6h1.1v1.1h-1.1zM512.0,655.6h1.1v1.1h-1.1zM522.0,655.6h1.1v1.1h-1.1zM532.0,655.6h1.1v1.1h-1.1zM542.0,655.6h1.1v1.1h-1.1zM552.0,655.6h1.1v1.1h-1.1zM562.0,655.6h1.1v1.1h-1.1zM572.0,655.6h1.1v1.1h-1.1zM582.0,655.6h1.1v1.1h-1.1zM592.0,655.6h1.1v1.1h-1.1zM602.0,655.6h1.1v1.1h-1.1zM612.0,655.6h1.1v1.1h-1.1zM622.0,655.6h1.1v1.1h-1.1zM632.0,655.6h1.1v1.1h-1.1zM642.0,655.6h1.1v1.1h-1.1zM652.0,655.6h1.1v1.1h-1.1zM662.0,655.6h1.1v1.1h-1.1zM672.0,655.6h1.1v1.1h-1.1zM682.0,655.6h1.1v1.1h-1.1zM692.0,655.6h1.1v1.1h-1.1zM702.0,655.6h1.1v1.1h-1.1zM712.0,655.6h1.1v1.1h-1.1zM722.0,655.6h1.1v1.1h-1.1zM732.0,655.6h1.1v1.1h-1.1zM742.0,655.6h1.1v1.1h-1.1zM752.0,655.6h1.1v1.1h-1.1zM762.0,655.6h1.1v1.1h-1.1zM772.0,655.6h1.1v1.1h-1.1zM782.0,655.6h1.1v1.1h-1.1zM792.0,655.6h1.1v1.1h-1.1zM802.0,655.6h1.1v1.1h-1.1zM812.0,655.6h1.1v1.1h-1.1zM822.0,655.6h1.1v1.1h-1.1zM832.0,655.6h1.1v1.1h-1.1zM842.0,655.6h1.1v1.1h-1.1zM852.0,655.6h1.1v1.1h-1.1zM862.0,655.6h1.1v1.1h-1.1zM872.0,655.6h1.1v1.1h-1.1zM882.0,655.6h1.1v1.1h-1.1zM892.0,655.6h1.1v1.1h-1.1zM902.0,655.6h1.1v1.1h-1.1zM912.0,655.6h1.1v1.1h-1.1zM922.0,655.6h1.1v1.1h-1.1zM932.0,655.6h1.1v1.1h-1.1zM942.0,655.6h1.1v1.1h-1.1zM952.0,655.6h1.1v1.1h-1.1zM962.0,655.6h1.1v1.1h-1.1zM972.0,655.6h1.1v1.1h-1.1zM982.0,655.6h1.1v1.1h-1.1zM992.0,655.6h1.1v1.1h-1.1zM1002.0,655.6h1.1v1.1h-1.1zM22.0,688.2h1.1v1.1h-1.1zM32.0,688.2h1.1v1.1h-1.1zM42.0,688.2h1.1v1.1h-1.1zM52.0,688.2h1.1v1.1h-1.1zM62.0,688.2h1.1v1.1h-1.1zM72.0,688.2h1.1v1.1h-1.1zM82.0,688.2h1.1v1.1h-1.1zM92.0,688.2h1.1v1.1h-1.1zM102.0,688.2h1.1v1.1h-1.1zM112.0,688.2h1.1v1.1h-1.1zM122.0,688.2h1.1v1.1h-1.1zM132.0,688.2h1.1v1.1h-1.1zM142.0,688.2h1.1v1.1h-1.1zM152.0,688.2h1.1v1.1h-1.1zM162.0,688.2h1.1v1.1h-1.1zM172.0,688.2h1.1v1.1h-1.1zM182.0,688.2h1.1v1.1h-1.1zM192.0,688.2h1.1v1.1h-1.1zM202.0,688.2h1.1v1.1h-1.1zM212.0,688.2h1.1v1.1h-1.1zM222.0,688.2h1.1v1.1h-1.1zM232.0,688.2h1.1v1.1h-1.1zM242.0,688.2h1.1v1.1h-1.1zM252.0,688.2h1.1v1.1h-1.1zM262.0,688.2h1.1v1.1h-1.1zM272.0,688.2h1.1v1.1h-1.1zM282.0,688.2h1.1v1.1h-1.1zM292.0,688.2h1.1v1.1h-1.1zM302.0,688.2h1.1v1.1h-1.1zM312.0,688.2h1.1v1.1h-1.1zM322.0,688.2h1.1v1.1h-1.1zM332.0,688.2h1.1v1.1h-1.1zM342.0,688.2h1.1v1.1h-1.1zM352.0,688.2h1.1v1.1h-1.1zM362.0,688.2h1.1v1.1h-1.1zM372.0,688.2h1.1v1.1h-1.1zM382.0,688.2h1.1v1.1h-1.1zM392.0,688.2h1.1v1.1h-1.1zM402.0,688.2h1.1v1.1h-1.1zM412.0,688.2h1.1v1.1h-1.1zM422.0,688.2h1.1v1.1h-1.1zM432.0,688.2h1.1v1.1h-1.1zM442.0,688.2h1.1v1.1h-1.1zM452.0,688.2h1.1v1.1h-1.1zM462.0,688.2h1.1v1.1h-1.1zM472.0,688.2h1.1v1.1h-1.1zM482.0,688.2h1.1v1.1h-1.1zM492.0,688.2h1.1v1.1h-1.1zM502.0,688.2h1.1v1.1h-1.1zM512.0,688.2h1.1v1.1h-1.1zM522.0,688.2h1.1v1.1h-1.1zM532.0,688.2h1.1v1.1h-1.1zM542.0,688.2h1.1v1.1h-1.1zM552.0,688.2h1.1v1.1h-1.1zM562.0,688.2h1.1v1.1h-1.1zM572.0,688.2h1.1v1.1h-1.1zM582.0,688.2h1.1v1.1h-1.1zM592.0,688.2h1.1v1.1h-1.1zM602.0,688.2h1.1v1.1h-1.1zM612.0,688.2h1.1v1.1h-1.1zM622.0,688.2h1.1v1.1h-1.1zM632.0,688.2h1.1v1.1h-1.1zM642.0,688.2h1.1v1.1h-1.1zM652.0,688.2h1.1v1.1h-1.1zM662.0,688.2h1.1v1.1h-1.1zM672.0,688.2h1.1v1.1h-1.1zM682.0,688.2h1.1v1.1h-1.1zM692.0,688.2h1.1v1.1h-1.1zM702.0,688.2h1.1v1.1h-1.1zM712.0,688.2h1.1v1.1h-1.1zM722.0,688.2h1.1v1.1h-1.1zM732.0,688.2h1.1v1.1h-1.1zM742.0,688.2h1.1v1.1h-1.1zM752.0,688.2h1.1v1.1h-1.1zM762.0,688.2h1.1v1.1h-1.1zM772.0,688.2h1.1v1.1h-1.1zM782.0,688.2h1.1v1.1h-1.1zM792.0,688.2h1.1v1.1h-1.1zM802.0,688.2h1.1v1.1h-1.1zM812.0,688.2h1.1v1.1h-1.1zM822.0,688.2h1.1v1.1h-1.1zM832.0,688.2h1.1v1.1h-1.1zM842.0,688.2h1.1v1.1h-1.1zM852.0,688.2h1.1v1.1h-1.1zM862.0,688.2h1.1v1.1h-1.1zM872.0,688.2h1.1v1.1h-1.1zM882.0,688.2h1.1v1.1h-1.1zM892.0,688.2h1.1v1.1h-1.1zM902.0,688.2h1.1v1.1h-1.1zM912.0,688.2h1.1v1.1h-1.1zM922.0,688.2h1.1v1.1h-1.1zM932.0,688.2h1.1v1.1h-1.1zM942.0,688.2h1.1v1.1h-1.1zM952.0,688.2h1.1v1.1h-1.1zM962.0,688.2h1.1v1.1h-1.1zM972.0,688.2h1.1v1.1h-1.1zM982.0,688.2h1.1v1.1h-1.1zM992.0,688.2h1.1v1.1h-1.1zM1002.0,688.2h1.1v1.1h-1.1zM112.0,400.9h1.1v1.1h-1.1zM112.0,407.5h1.1v1.1h-1.1zM112.0,414.0h1.1v1.1h-1.1zM112.0,420.5h1.1v1.1h-1.1zM112.0,433.6h1.1v1.1h-1.1zM112.0,440.1h1.1v1.1h-1.1zM112.0,446.6h1.1v1.1h-1.1zM112.0,453.2h1.1v1.1h-1.1zM112.0,466.2h1.1v1.1h-1.1zM112.0,472.8h1.1v1.1h-1.1zM112.0,479.3h1.1v1.1h-1.1zM112.0,485.8h1.1v1.1h-1.1zM112.0,498.9h1.1v1.1h-1.1zM112.0,505.4h1.1v1.1h-1.1zM112.0,511.9h1.1v1.1h-1.1zM112.0,518.5h1.1v1.1h-1.1zM112.0,531.5h1.1v1.1h-1.1zM112.0,538.1h1.1v1.1h-1.1zM112.0,544.6h1.1v1.1h-1.1zM112.0,551.1h1.1v1.1h-1.1zM112.0,564.2h1.1v1.1h-1.1zM112.0,570.7h1.1v1.1h-1.1zM112.0,577.2h1.1v1.1h-1.1zM112.0,583.8h1.1v1.1h-1.1zM112.0,596.8h1.1v1.1h-1.1zM112.0,603.4h1.1v1.1h-1.1zM112.0,609.9h1.1v1.1h-1.1zM112.0,616.4h1.1v1.1h-1.1zM112.0,629.5h1.1v1.1h-1.1zM112.0,636.0h1.1v1.1h-1.1zM112.0,642.5h1.1v1.1h-1.1zM112.0,649.1h1.1v1.1h-1.1zM112.0,662.1h1.1v1.1h-1.1zM112.0,668.7h1.1v1.1h-1.1zM112.0,675.2h1.1v1.1h-1.1zM112.0,681.7h1.1v1.1h-1.1zM112.0,694.8h1.1v1.1h-1.1zM112.0,701.3h1.1v1.1h-1.1zM112.0,707.8h1.1v1.1h-1.1zM112.0,714.4h1.1v1.1h-1.1zM211.9,400.9h1.1v1.1h-1.1zM211.9,407.5h1.1v1.1h-1.1zM211.9,414.0h1.1v1.1h-1.1zM211.9,420.5h1.1v1.1h-1.1zM211.9,433.6h1.1v1.1h-1.1zM211.9,440.1h1.1v1.1h-1.1zM211.9,446.6h1.1v1.1h-1.1zM211.9,453.2h1.1v1.1h-1.1zM211.9,466.2h1.1v1.1h-1.1zM211.9,472.8h1.1v1.1h-1.1zM211.9,479.3h1.1v1.1h-1.1zM211.9,485.8h1.1v1.1h-1.1zM211.9,498.9h1.1v1.1h-1.1zM211.9,505.4h1.1v1.1h-1.1zM211.9,511.9h1.1v1.1h-1.1zM211.9,518.5h1.1v1.1h-1.1zM211.9,531.5h1.1v1.1h-1.1zM211.9,538.1h1.1v1.1h-1.1zM211.9,544.6h1.1v1.1h-1.1zM211.9,551.1h1.1v1.1h-1.1zM211.9,564.2h1.1v1.1h-1.1zM211.9,570.7h1.1v1.1h-1.1zM211.9,577.2h1.1v1.1h-1.1zM211.9,583.8h1.1v1.1h-1.1zM211.9,596.8h1.1v1.1h-1.1zM211.9,603.4h1.1v1.1h-1.1zM211.9,609.9h1.1v1.1h-1.1zM211.9,616.4h1.1v1.1h-1.1zM211.9,629.5h1.1v1.1h-1.1zM211.9,636.0h1.1v1.1h-1.1zM211.9,642.5h1.1v1.1h-1.1zM211.9,649.1h1.1v1.1h-1.1zM211.9,662.1h1.1v1.1h-1.1zM211.9,668.7h1.1v1.1h-1.1zM211.9,675.2h1.1v1.1h-1.1zM211.9,681.7h1.1v1.1h-1.1zM211.9,694.8h1.1v1.1h-1.1zM211.9,701.3h1.1v1.1h-1.1zM211.9,707.8h1.1v1.1h-1.1zM211.9,714.4h1.1v1.1h-1.1zM311.9,400.9h1.1v1.1h-1.1zM311.9,407.5h1.1v1.1h-1.1zM311.9,414.0h1.1v1.1h-1.1zM311.9,420.5h1.1v1.1h-1.1zM311.9,433.6h1.1v1.1h-1.1zM311.9,440.1h1.1v1.1h-1.1zM311.9,446.6h1.1v1.1h-1.1zM311.9,453.2h1.1v1.1h-1.1zM311.9,466.2h1.1v1.1h-1.1zM311.9,472.8h1.1v1.1h-1.1zM311.9,479.3h1.1v1.1h-1.1zM311.9,485.8h1.1v1.1h-1.1zM311.9,498.9h1.1v1.1h-1.1zM311.9,505.4h1.1v1.1h-1.1zM311.9,511.9h1.1v1.1h-1.1zM311.9,518.5h1.1v1.1h-1.1zM311.9,531.5h1.1v1.1h-1.1zM311.9,538.1h1.1v1.1h-1.1zM311.9,544.6h1.1v1.1h-1.1zM311.9,551.1h1.1v1.1h-1.1zM311.9,564.2h1.1v1.1h-1.1zM311.9,570.7h1.1v1.1h-1.1zM311.9,577.2h1.1v1.1h-1.1zM311.9,583.8h1.1v1.1h-1.1zM311.9,596.8h1.1v1.1h-1.1zM311.9,603.4h1.1v1.1h-1.1zM311.9,609.9h1.1v1.1h-1.1zM311.9,616.4h1.1v1.1h-1.1zM311.9,629.5h1.1v1.1h-1.1zM311.9,636.0h1.1v1.1h-1.1zM311.9,642.5h1.1v1.1h-1.1zM311.9,649.1h1.1v1.1h-1.1zM311.9,662.1h1.1v1.1h-1.1zM311.9,668.7h1.1v1.1h-1.1zM311.9,675.2h1.1v1.1h-1.1zM311.9,681.7h1.1v1.1h-1.1zM311.9,694.8h1.1v1.1h-1.1zM311.9,701.3h1.1v1.1h-1.1zM311.9,707.8h1.1v1.1h-1.1zM311.9,714.4h1.1v1.1h-1.1zM411.9,400.9h1.1v1.1h-1.1zM411.9,407.5h1.1v1.1h-1.1zM411.9,414.0h1.1v1.1h-1.1zM411.9,420.5h1.1v1.1h-1.1zM411.9,433.6h1.1v1.1h-1.1zM411.9,440.1h1.1v1.1h-1.1zM411.9,446.6h1.1v1.1h-1.1zM411.9,453.2h1.1v1.1h-1.1zM411.9,466.2h1.1v1.1h-1.1zM411.9,472.8h1.1v1.1h-1.1zM411.9,479.3h1.1v1.1h-1.1zM411.9,485.8h1.1v1.1h-1.1zM411.9,498.9h1.1v1.1h-1.1zM411.9,505.4h1.1v1.1h-1.1zM411.9,511.9h1.1v1.1h-1.1zM411.9,518.5h1.1v1.1h-1.1zM411.9,531.5h1.1v1.1h-1.1zM411.9,538.1h1.1v1.1h-1.1zM411.9,544.6h1.1v1.1h-1.1zM411.9,551.1h1.1v1.1h-1.1zM411.9,564.2h1.1v1.1h-1.1zM411.9,570.7h1.1v1.1h-1.1zM411.9,577.2h1.1v1.1h-1.1zM411.9,583.8h1.1v1.1h-1.1zM411.9,596.8h1.1v1.1h-1.1zM411.9,603.4h1.1v1.1h-1.1zM411.9,609.9h1.1v1.1h-1.1zM411.9,616.4h1.1v1.1h-1.1zM411.9,629.5h1.1v1.1h-1.1zM411.9,636.0h1.1v1.1h-1.1zM411.9,642.5h1.1v1.1h-1.1zM411.9,649.1h1.1v1.1h-1.1zM411.9,662.1h1.1v1.1h-1.1zM411.9,668.7h1.1v1.1h-1.1zM411.9,675.2h1.1v1.1h-1.1zM411.9,681.7h1.1v1.1h-1.1zM411.9,694.8h1.1v1.1h-1.1zM411.9,701.3h1.1v1.1h-1.1zM411.9,707.8h1.1v1.1h-1.1zM411.9,714.4h1.1v1.1h-1.1zM511.9,400.9h1.1v1.1h-1.1zM511.9,407.5h1.1v1.1h-1.1zM511.9,414.0h1.1v1.1h-1.1zM511.9,420.5h1.1v1.1h-1.1zM511.9,433.6h1.1v1.1h-1.1zM511.9,440.1h1.1v1.1h-1.1zM511.9,446.6h1.1v1.1h-1.1zM511.9,453.2h1.1v1.1h-1.1zM511.9,466.2h1.1v1.1h-1.1zM511.9,472.8h1.1v1.1h-1.1zM511.9,479.3h1.1v1.1h-1.1zM511.9,485.8h1.1v1.1h-1.1zM511.9,498.9h1.1v1.1h-1.1zM511.9,505.4h1.1v1.1h-1.1zM511.9,511.9h1.1v1.1h-1.1zM511.9,518.5h1.1v1.1h-1.1zM511.9,531.5h1.1v1.1h-1.1zM511.9,538.1h1.1v1.1h-1.1zM511.9,544.6h1.1v1.1h-1.1zM511.9,551.1h1.1v1.1h-1.1zM511.9,564.2h1.1v1.1h-1.1zM511.9,570.7h1.1v1.1h-1.1zM511.9,577.2h1.1v1.1h-1.1zM511.9,583.8h1.1v1.1h-1.1zM511.9,596.8h1.1v1.1h-1.1zM511.9,603.4h1.1v1.1h-1.1zM511.9,609.9h1.1v1.1h-1.1zM511.9,616.4h1.1v1.1h-1.1zM511.9,629.5h1.1v1.1h-1.1zM511.9,636.0h1.1v1.1h-1.1zM511.9,642.5h1.1v1.1h-1.1zM511.9,649.1h1.1v1.1h-1.1zM511.9,662.1h1.1v1.1h-1.1zM511.9,668.7h1.1v1.1h-1.1zM511.9,675.2h1.1v1.1h-1.1zM511.9,681.7h1.1v1.1h-1.1zM511.9,694.8h1.1v1.1h-1.1zM511.9,701.3h1.1v1.1h-1.1zM511.9,707.8h1.1v1.1h-1.1zM511.9,714.4h1.1v1.1h-1.1zM612.0,400.9h1.1v1.1h-1.1zM612.0,407.5h1.1v1.1h-1.1zM612.0,414.0h1.1v1.1h-1.1zM612.0,420.5h1.1v1.1h-1.1zM612.0,433.6h1.1v1.1h-1.1zM612.0,440.1h1.1v1.1h-1.1zM612.0,446.6h1.1v1.1h-1.1zM612.0,453.2h1.1v1.1h-1.1zM612.0,466.2h1.1v1.1h-1.1zM612.0,472.8h1.1v1.1h-1.1zM612.0,479.3h1.1v1.1h-1.1zM612.0,485.8h1.1v1.1h-1.1zM612.0,498.9h1.1v1.1h-1.1zM612.0,505.4h1.1v1.1h-1.1zM612.0,511.9h1.1v1.1h-1.1zM612.0,518.5h1.1v1.1h-1.1zM612.0,531.5h1.1v1.1h-1.1zM612.0,538.1h1.1v1.1h-1.1zM612.0,544.6h1.1v1.1h-1.1zM612.0,551.1h1.1v1.1h-1.1zM612.0,564.2h1.1v1.1h-1.1zM612.0,570.7h1.1v1.1h-1.1zM612.0,577.2h1.1v1.1h-1.1zM612.0,583.8h1.1v1.1h-1.1zM612.0,596.8h1.1v1.1h-1.1zM612.0,603.4h1.1v1.1h-1.1zM612.0,609.9h1.1v1.1h-1.1zM612.0,616.4h1.1v1.1h-1.1zM612.0,629.5h1.1v1.1h-1.1zM612.0,636.0h1.1v1.1h-1.1zM612.0,642.5h1.1v1.1h-1.1zM612.0,649.1h1.1v1.1h-1.1zM612.0,662.1h1.1v1.1h-1.1zM612.0,668.7h1.1v1.1h-1.1zM612.0,675.2h1.1v1.1h-1.1zM612.0,681.7h1.1v1.1h-1.1zM612.0,694.8h1.1v1.1h-1.1zM612.0,701.3h1.1v1.1h-1.1zM612.0,707.8h1.1v1.1h-1.1zM612.0,714.4h1.1v1.1h-1.1zM712.0,400.9h1.1v1.1h-1.1zM712.0,407.5h1.1v1.1h-1.1zM712.0,414.0h1.1v1.1h-1.1zM712.0,420.5h1.1v1.1h-1.1zM712.0,433.6h1.1v1.1h-1.1zM712.0,440.1h1.1v1.1h-1.1zM712.0,446.6h1.1v1.1h-1.1zM712.0,453.2h1.1v1.1h-1.1zM712.0,466.2h1.1v1.1h-1.1zM712.0,472.8h1.1v1.1h-1.1zM712.0,479.3h1.1v1.1h-1.1zM712.0,485.8h1.1v1.1h-1.1zM712.0,498.9h1.1v1.1h-1.1zM712.0,505.4h1.1v1.1h-1.1zM712.0,511.9h1.1v1.1h-1.1zM712.0,518.5h1.1v1.1h-1.1zM712.0,531.5h1.1v1.1h-1.1zM712.0,538.1h1.1v1.1h-1.1zM712.0,544.6h1.1v1.1h-1.1zM712.0,551.1h1.1v1.1h-1.1zM712.0,564.2h1.1v1.1h-1.1zM712.0,570.7h1.1v1.1h-1.1zM712.0,577.2h1.1v1.1h-1.1zM712.0,583.8h1.1v1.1h-1.1zM712.0,596.8h1.1v1.1h-1.1zM712.0,603.4h1.1v1.1h-1.1zM712.0,609.9h1.1v1.1h-1.1zM712.0,616.4h1.1v1.1h-1.1zM712.0,629.5h1.1v1.1h-1.1zM712.0,636.0h1.1v1.1h-1.1zM712.0,642.5h1.1v1.1h-1.1zM712.0,649.1h1.1v1.1h-1.1zM712.0,662.1h1.1v1.1h-1.1zM712.0,668.7h1.1v1.1h-1.1zM712.0,675.2h1.1v1.1h-1.1zM712.0,681.7h1.1v1.1h-1.1zM712.0,694.8h1.1v1.1h-1.1zM712.0,701.3h1.1v1.1h-1.1zM712.0,707.8h1.1v1.1h-1.1zM712.0,714.4h1.1v1.1h-1.1zM812.0,400.9h1.1v1.1h-1.1zM812.0,407.5h1.1v1.1h-1.1zM812.0,414.0h1.1v1.1h-1.1zM812.0,420.5h1.1v1.1h-1.1zM812.0,433.6h1.1v1.1h-1.1zM812.0,440.1h1.1v1.1h-1.1zM812.0,446.6h1.1v1.1h-1.1zM812.0,453.2h1.1v1.1h-1.1zM812.0,466.2h1.1v1.1h-1.1zM812.0,472.8h1.1v1.1h-1.1zM812.0,479.3h1.1v1.1h-1.1zM812.0,485.8h1.1v1.1h-1.1zM812.0,498.9h1.1v1.1h-1.1zM812.0,505.4h1.1v1.1h-1.1zM812.0,511.9h1.1v1.1h-1.1zM812.0,518.5h1.1v1.1h-1.1zM812.0,531.5h1.1v1.1h-1.1zM812.0,538.1h1.1v1.1h-1.1zM812.0,544.6h1.1v1.1h-1.1zM812.0,551.1h1.1v1.1h-1.1zM812.0,564.2h1.1v1.1h-1.1zM812.0,570.7h1.1v1.1h-1.1zM812.0,577.2h1.1v1.1h-1.1zM812.0,583.8h1.1v1.1h-1.1zM812.0,596.8h1.1v1.1h-1.1zM812.0,603.4h1.1v1.1h-1.1zM812.0,609.9h1.1v1.1h-1.1zM812.0,616.4h1.1v1.1h-1.1zM812.0,629.5h1.1v1.1h-1.1zM812.0,636.0h1.1v1.1h-1.1zM812.0,642.5h1.1v1.1h-1.1zM812.0,649.1h1.1v1.1h-1.1zM812.0,662.1h1.1v1.1h-1.1zM812.0,668.7h1.1v1.1h-1.1zM812.0,675.2h1.1v1.1h-1.1zM812.0,681.7h1.1v1.1h-1.1zM812.0,694.8h1.1v1.1h-1.1zM812.0,701.3h1.1v1.1h-1.1zM812.0,707.8h1.1v1.1h-1.1zM812.0,714.4h1.1v1.1h-1.1zM912.0,400.9h1.1v1.1h-1.1zM912.0,407.5h1.1v1.1h-1.1zM912.0,414.0h1.1v1.1h-1.1zM912.0,420.5h1.1v1.1h-1.1zM912.0,433.6h1.1v1.1h-1.1zM912.0,440.1h1.1v1.1h-1.1zM912.0,446.6h1.1v1.1h-1.1zM912.0,453.2h1.1v1.1h-1.1zM912.0,466.2h1.1v1.1h-1.1zM912.0,472.8h1.1v1.1h-1.1zM912.0,479.3h1.1v1.1h-1.1zM912.0,485.8h1.1v1.1h-1.1zM912.0,498.9h1.1v1.1h-1.1zM912.0,505.4h1.1v1.1h-1.1zM912.0,511.9h1.1v1.1h-1.1zM912.0,518.5h1.1v1.1h-1.1zM912.0,531.5h1.1v1.1h-1.1zM912.0,538.1h1.1v1.1h-1.1zM912.0,544.6h1.1v1.1h-1.1zM912.0,551.1h1.1v1.1h-1.1zM912.0,564.2h1.1v1.1h-1.1zM912.0,570.7h1.1v1.1h-1.1zM912.0,577.2h1.1v1.1h-1.1zM912.0,583.8h1.1v1.1h-1.1zM912.0,596.8h1.1v1.1h-1.1zM912.0,603.4h1.1v1.1h-1.1zM912.0,609.9h1.1v1.1h-1.1zM912.0,616.4h1.1v1.1h-1.1zM912.0,629.5h1.1v1.1h-1.1zM912.0,636.0h1.1v1.1h-1.1zM912.0,642.5h1.1v1.1h-1.1zM912.0,649.1h1.1v1.1h-1.1zM912.0,662.1h1.1v1.1h-1.1zM912.0,668.7h1.1v1.1h-1.1zM912.0,675.2h1.1v1.1h-1.1zM912.0,681.7h1.1v1.1h-1.1zM912.0,694.8h1.1v1.1h-1.1zM912.0,701.3h1.1v1.1h-1.1zM912.0,707.8h1.1v1.1h-1.1zM912.0,714.4h1.1v1.1h-1.1z" fill="#707070"/>
<path d="M845.0,128.7 L846.0,127.1 L847.0,127.3 L848.0,128.4 L849.0,127.9 L850.0,128.0 L851.0,127.6 L852.0,127.3 L853.0,128.8 L854.0,128.9 L855.0,127.2 L856.0,128.0 L857.0,127.3 L858.0,129.0 L859.0,128.0 L860.0,127.4 L861.0,128.5 L862.0,126.9 L863.0,127.0 L864.0,128.9 L865.0,128.9 L866.0,127.8 L867.0,126.9 L868.0,128.2 L869.0,128.5 L870.0,128.1 L871.0,128.9 L872.0,128.5 L873.0,128.0 L874.0,127.9 L875.0,128.5 L876.0,128.5 L877.0,128.5 L878.0,128.0 L879.0,128.4 L880.0,129.0 L881.0,127.2 L882.0,127.8 L883.0,127.6 L884.0,128.6 L885.0,126.8 L886.0,127.1 L887.0,128.7 L888.0,128.3 L889.0,127.4 L890.0,127.4 L891.0,126.9 L892.0,128.1 L893.0,127.2 L894.0,127.5 L895.0,128.3 L896.0,127.7 L897.0,127.1 L898.0,127.1 L899.0,127.9 L900.0,127.7 L901.0,128.9 L902.0,128.5 L903.0,127.2 L904.0,128.1 L905.0,128.6 L906.0,127.8 L907.0,127.5 L908.0,127.5 L909.0,128.2 L910.0,128.0 L911.0,127.9 L912.0,127.3 L913.0,127.9 L914.0,128.1 L915.0,127.9 L916.0,128.9 L917.0,128.9 L918.0,127.5 L919.0,126.8 L920.0,127.7 L921.0,128.1 L922.0,128.6 L923.0,127.9 L924.0,126.8 L925.0,127.3 L926.0,127.8 L927.0,127.1 L928.0,128.5 L929.0,127.9 L930.0,126.9 L931.0,127.7 L932.0,128.0 L933.0,128.4 L934.0,127.8 L935.0,126.9 L936.0,129.0 L937.0,127.3 L938.0,127.2 L939.0,127.1 L940.0,127.4 L941.0,127.2 L942.0,127.9 L943.0,127.8 L944.0,128.1 L945.0,128.9 L946.0,127.1 L947.0,127.7 L948.0,128.6 L949.0,127.9 L950.0,127.9 L951.0,128.2 L952.0,128.2 L953.0,127.8 L954.0,127.6 L955.0,127.7 L956.0,128.0 L957.0,128.9 L958.0,128.5 L959.0,128.6 L960.0,127.7 L961.0,127.1 L962.0,127.2 L963.0,127.2 L964.0,127.2 L965.0,128.4 L966.0,127.1 L967.0,127.5 L968.0,128.8 L969.0,129.0 L970.0,129.0 L971.0,127.3 L972.0,128.5 L973.0,128.8 L974.0,127.6 L975.0,128.2 L976.0,128.8 L977.0,128.6 L978.0,127.8 L979.0,128.6 L980.0,128.4 L981.0,127.4 L982.0,128.0 L983.0,128.3 L984.0,128.0 L985.0,128.9 L986.0,128.1 L987.0,128.1 L988.0,128.6 L989.0,128.8 L990.0,127.0 L991.0,127.9 L992.0,128.5 L993.0,127.7 L994.0,127.2 L995.0,129.0 L996.0,129.0 L997.0,128.7 L998.0,127.4 L999.0,128.6 L1000.0,127.4 L1001.0,127.5 L1002.0,127.8 L1003.0,128.5 L1004.0,126.9 L1005.0,127.2 L1006.0,127.9 L1007.0,128.5 L1008.0,127.6 L1009.0,128.1 L1010.0,127.7 L1011.0,128.3 L1012.0,127.6 L1012.5,224.5 L1011.5,224.6 L1010.5,224.8 L1009.5,224.8 L1008.5,224.6 L1007.5,224.8 L1006.5,224.6 L1005.5,224.8 L1004.5,224.7 L1003.5,224.6 L1002.5,224.6 L1001.5,224.5 L1000.5,224.8 L999.5,224.5 L998.5,224.7 L997.5,224.8 L996.5,224.7 L995.5,224.6 L994.5,224.8 L993.5,224.8 L992.5,224.7 L991.5,224.7 L990.5,224.6 L989.5,224.6 L988.5,224.6 L987.5,224.7 L986.5,224.6 L985.5,224.6 L984.5,224.5 L983.5,224.7 L982.5,224.6 L981.5,224.6 L980.5,224.6 L979.5,224.8 L978.5,224.8 L977.5,224.5 L976.5,224.6 L975.5,224.6 L974.5,224.8 L973.5,224.7 L972.5,224.6 L971.5,224.6 L970.5,224.7 L969.5,224.8 L968.5,224.8 L967.5,224.6 L966.5,224.8 L965.5,224.7 L964.5,224.6 L963.5,224.8 L962.5,224.6 L961.5,224.7 L960.5,224.5 L959.5,224.6 L958.5,224.8 L957.5,224.6 L956.5,224.7 L955.5,224.7 L954.5,224.8 L953.5,224.6 L952.5,224.6 L951.5,224.6 L950.5,224.8 L949.5,224.7 L948.5,224.8 L947.5,224.8 L946.5,224.5 L945.5,224.7 L944.5,224.5 L943.5,224.5 L942.5,224.5 L941.5,224.8 L940.5,224.7 L939.5,224.7 L938.5,224.6 L937.5,224.7 L936.5,224.7 L935.5,224.6 L934.5,224.7 L933.5,224.6 L932.5,224.5 L931.5,224.6 L930.5,224.8 L929.5,224.7 L928.5,224.8 L927.5,224.6 L926.5,224.6 L925.5,224.7 L924.5,224.7 L923.5,224.5 L922.5,224.7 L921.5,224.5 L920.5,224.5 L919.5,224.8 L918.5,224.5 L917.5,224.6 L916.5,224.8 L915.5,224.6 L914.5,224.5 L913.5,224.6 L912.5,224.6 L911.5,224.7 L910.5,224.5 L909.5,224.8 L908.5,224.6 L907.5,224.8 L906.5,224.8 L905.5,224.6 L904.5,224.6 L903.5,224.6 L902.5,224.5 L901.5,224.7 L900.5,224.5 L899.5,224.5 L898.5,224.8 L897.5,224.6 L896.5,224.7 L895.5,224.6 L894.5,224.6 L893.5,224.5 L892.5,224.8 L891.5,224.8 L890.5,224.8 L889.5,224.5 L888.5,224.6 L887.5,224.7 L886.5,224.8 L885.5,224.7 L884.5,224.7 L883.5,224.7 L882.5,224.6 L881.5,224.7 L880.5,224.6 L879.5,224.6 L878.5,224.5 L877.5,224.6 L876.5,224.8 L875.5,224.6 L874.5,224.7 L873.5,224.7 L872.5,224.8 L871.5,224.6 L870.5,224.6 L869.5,224.6 L868.5,224.6 L867.5,224.8 L866.5,224.8 L865.5,224.6 L864.5,224.6 L863.5,224.7 L862.5,224.7 L861.5,224.7 L860.5,224.6 L859.5,224.5 L858.5,224.6 L857.5,224.5 L856.5,224.7 L855.5,224.5 L854.5,224.5 L853.5,224.7 L852.5,224.6 L851.5,224.7 L850.5,224.6 L849.5,224.8 L848.5,224.5 L847.5,224.7 L846.5,224.7 L845.5,224.5Z" fill="#4b8bca"/>
<rect x="845" y="262.8" width="167.5" height="2.4" fill="#d99062"/>
<path d="M845.0,272.1 L846.0,272.1 L847.0,273.9 L848.0,273.8 L849.0,272.3 L850.0,272.5 L851.0,272.7 L852.0,273.4 L853.0,272.8 L854.0,272.8 L855.0,272.8 L856.0,273.7 L857.0,273.1 L858.0,273.2 L859.0,272.6 L860.0,272.0 L861.0,272.1 L862.0,272.9 L863.0,273.1 L864.0,273.5 L865.0,273.9 L866.0,273.9 L867.0,273.1 L868.0,273.4 L869.0,273.2 L870.0,272.2 L871.0,272.9 L872.0,272.9 L873.0,273.5 L874.0,274.0 L875.0,273.3 L876.0,273.7 L877.0,273.0 L878.0,272.0 L879.0,272.7 L880.0,273.6 L881.0,272.2 L882.0,272.4 L883.0,272.5 L884.0,272.2 L885.0,272.5 L886.0,272.4 L887.0,273.3 L888.0,272.0 L889.0,272.1 L890.0,273.7 L891.0,272.5 L892.0,272.6 L893.0,273.1 L894.0,272.9 L895.0,273.0 L896.0,272.2 L897.0,273.0 L898.0,272.3 L899.0,273.3 L900.0,272.2 L901.0,272.2 L902.0,273.1 L903.0,272.9 L904.0,272.2 L905.0,272.6 L906.0,273.0 L907.0,273.6 L908.0,273.4 L909.0,272.6 L910.0,273.7 L911.0,272.2 L912.0,273.5 L913.0,272.2 L914.0,273.4 L915.0,272.1 L916.0,272.6 L917.0,273.0 L918.0,273.0 L919.0,272.7 L920.0,272.8 L921.0,273.4 L922.0,273.6 L923.0,273.0 L924.0,272.1 L925.0,272.8 L926.0,273.8 L927.0,272.4 L928.0,272.5 L929.0,272.2 L930.0,273.6 L931.0,272.5 L932.0,273.9 L933.0,272.7 L934.0,273.5 L935.0,273.5 L936.0,272.2 L937.0,273.8 L938.0,273.0 L939.0,272.3 L940.0,273.5 L941.0,273.6 L942.0,272.2 L943.0,273.2 L944.0,272.6 L945.0,273.9 L946.0,273.3 L947.0,273.7 L948.0,272.7 L949.0,273.8 L950.0,272.1 L951.0,273.9 L952.0,272.5 L953.0,274.0 L954.0,273.5 L955.0,272.4 L956.0,273.7 L957.0,273.6 L958.0,272.6 L959.0,273.2 L960.0,273.9 L961.0,272.0 L962.0,273.7 L963.0,273.9 L964.0,273.3 L965.0,272.8 L966.0,272.5 L967.0,273.8 L968.0,273.3 L969.0,273.9 L970.0,273.1 L971.0,272.5 L972.0,272.5 L973.0,272.2 L974.0,272.5 L975.0,272.3 L976.0,272.6 L977.0,273.1 L978.0,273.5 L979.0,272.7 L980.0,273.4 L981.0,273.8 L982.0,273.1 L983.0,272.3 L984.0,273.7 L985.0,272.8 L986.0,273.2 L987.0,273.0 L988.0,273.7 L989.0,272.1 L990.0,273.5 L991.0,272.8 L992.0,273.2 L993.0,274.0 L994.0,272.9 L995.0,273.7 L996.0,273.9 L997.0,273.9 L998.0,273.7 L999.0,273.8 L1000.0,272.7 L1001.0,273.0 L1002.0,272.0 L1003.0,272.1 L1004.0,272.0 L1005.0,273.5 L1006.0,273.1 L1007.0,273.5 L1008.0,272.8 L1009.0,272.8 L1010.0,272.4 L1011.0,272.6 L1012.0,273.5 L1012.5,320.1 L1011.5,320.3 L1010.5,319.5 L1009.5,319.6 L1008.5,320.1 L1007.5,319.7 L1006.5,320.6 L1005.5,319.9 L1004.5,319.6 L1003.5,319.8 L1002.5,319.8 L1001.5,319.8 L1000.5,320.3 L999.5,320.2 L998.5,320.0 L997.5,320.5 L996.5,319.8 L995.5,320.9 L994.5,320.9 L993.5,320.6 L992.5,320.2 L991.5,320.3 L990.5,320.4 L989.5,319.6 L988.5,320.1 L987.5,320.3 L986.5,319.8 L985.5,319.6 L984.5,320.7 L983.5,320.0 L982.5,320.3 L981.5,320.9 L980.5,320.4 L979.5,319.9 L978.5,321.0 L977.5,320.1 L976.5,319.5 L975.5,320.5 L974.5,319.7 L973.5,320.0 L972.5,320.8 L971.5,320.5 L970.5,319.5 L969.5,320.2 L968.5,320.1 L967.5,320.2 L966.5,319.8 L965.5,320.4 L964.5,319.6 L963.5,319.9 L962.5,320.1 L961.5,320.9 L960.5,319.6 L959.5,320.6 L958.5,319.8 L957.5,320.4 L956.5,320.1 L955.5,320.2 L954.5,320.6 L953.5,320.1 L952.5,319.7 L951.5,319.7 L950.5,319.6 L949.5,320.8 L948.5,320.5 L947.5,320.9 L946.5,320.5 L945.5,319.5 L944.5,320.5 L943.5,320.7 L942.5,320.6 L941.5,320.2 L940.5,320.0 L939.5,320.2 L938.5,320.7 L937.5,319.9 L936.5,320.3 L935.5,320.2 L934.5,320.9 L933.5,320.7 L932.5,320.9 L931.5,320.8 L930.5,319.9 L929.5,319.8 L928.5,320.2 L927.5,319.9 L926.5,320.1 L925.5,320.5 L924.5,320.9 L923.5,320.4 L922.5,320.7 L921.5,319.6 L920.5,320.0 L919.5,321.0 L918.5,319.7 L917.5,320.1 L916.5,319.6 L915.5,319.6 L914.5,320.8 L913.5,321.0 L912.5,320.5 L911.5,319.7 L910.5,319.9 L909.5,319.8 L908.5,320.5 L907.5,320.5 L906.5,320.2 L905.5,320.3 L904.5,319.7 L903.5,320.3 L902.5,320.9 L901.5,320.6 L900.5,319.6 L899.5,320.3 L898.5,320.6 L897.5,319.9 L896.5,320.8 L895.5,320.2 L894.5,320.6 L893.5,320.1 L892.5,321.0 L891.5,320.7 L890.5,320.4 L889.5,319.7 L888.5,320.2 L887.5,319.5 L886.5,320.4 L885.5,320.8 L884.5,319.8 L883.5,320.3 L882.5,320.2 L881.5,320.1 L880.5,320.6 L879.5,320.9 L878.5,320.6 L877.5,320.2 L876.5,320.9 L875.5,320.0 L874.5,320.6 L873.5,320.5 L872.5,320.6 L871.5,320.8 L870.5,319.8 L869.5,320.4 L868.5,320.1 L867.5,320.5 L866.5,321.0 L865.5,320.5 L864.5,319.5 L863.5,320.2 L862.5,320.6 L861.5,320.8 L860.5,320.5 L859.5,320.7 L858.5,319.5 L857.5,320.9 L856.5,320.6 L855.5,320.4 L854.5,320.9 L853.5,320.8 L852.5,319.7 L851.5,320.7 L850.5,320.7 L849.5,319.8 L848.5,320.6 L847.5,320.4 L846.5,319.8 L845.5,320.7Z" fill="#1666f2"/>
<rect x="884" y="67.0" width="1.4" height="323.5" fill="#e8e8e8"/>
<line x1="963.6" y1="67.0" x2="963.6" y2="390.5" stroke="#c8c8c8" stroke-width="1.3" stroke-dasharray="13,3"/>
<rect x="883.5" y="127" width="2.4" height="98" fill="#4b8bca" opacity="0.45"/>
<rect x="962.5" y="127" width="2.4" height="98" fill="#4b8bca" opacity="0.45"/>
<rect x="883.5" y="272" width="2.4" height="49" fill="#1666f2" opacity="0.35"/>
<rect x="962.5" y="272" width="2.4" height="49" fill="#1666f2" opacity="0.35"/>
<rect x="11.8" y="67.0" width="1.5" height="654.0" fill="#8c8c8c"/>
<rect x="1012" y="67.0" width="1.5" height="654.0" fill="#8c8c8c"/>
<rect x="12" y="393" width="1001" height="2" fill="#858585"/>
<path d="M1014,133.5 L1017.5,129.5 L1021,129.5 L1021,137.5 L1017.5,137.5 Z" fill="#4d8fd0"/>
<path d="M1014,263.8 L1017.5,259.8 L1021,259.8 L1021,267.8 L1017.5,267.8 Z" fill="#e39a55"/>
<path d="M1014,284.5 L1017.5,280.5 L1021,280.5 L1021,288.5 L1017.5,288.5 Z" fill="#2070f0"/>
<path d="M1012.8,50 V65.5 M1007.5,60.5 L1012.8,65.5 L1018,60.5" stroke="#ffffff" stroke-width="1.3" fill="none"/>
<path d="M2,230 H11 M5.3,230 V234.6 M2.2,234.6 H8.6 M3.2,237 H7.4 M4.2,239.2 H6.4" stroke="#7c9ccc" stroke-width="1.3" fill="none"/>
<path d="M1.5,252.6 H6.5 M4,252.6 V258" stroke="#d88a40" stroke-width="1.2" fill="none"/><path d="M1.2,260.6 L6.2,254.8 L11.2,260.6 Z" fill="#e8961e"/>
<path d="M2,263.3 H11 M5.3,263.3 V267.90000000000003 M2.2,267.90000000000003 H8.6 M3.2,270.3 H7.4 M4.2,272.5 H6.4" stroke="#d88a40" stroke-width="1.3" fill="none"/>
<path d="M2,293.2 H11 M5.3,293.2 V297.8 M2.2,297.8 H8.6 M3.2,300.2 H7.4 M4.2,302.4 H6.4" stroke="#2a50d0" stroke-width="1.3" fill="none"/>
<path d="M2,558 H11 M5.3,558 V562.6 M2.2,562.6 H8.6 M3.2,565 H7.4 M4.2,567.2 H6.4" stroke="#7c9ccc" stroke-width="1.3" fill="none"/>
<path d="M1.5,581.0 H6.5 M4,581.0 V586.4" stroke="#d88a40" stroke-width="1.2" fill="none"/><path d="M1.2,589.0 L6.2,583.1999999999999 L11.2,589.0 Z" fill="#e8961e"/>
<path d="M2,591 H11 M5.3,591 V595.6 M2.2,595.6 H8.6 M3.2,598 H7.4 M4.2,600.2 H6.4" stroke="#d88a40" stroke-width="1.3" fill="none"/>
<path d="M2,620.8 H11 M5.3,620.8 V625.4 M2.2,625.4 H8.6 M3.2,627.8 H7.4 M4.2,630.0 H6.4" stroke="#2a50d0" stroke-width="1.3" fill="none"/>
<path d="M13.2,540.5 L13.5,540.5 L13.5,523.0 L14.5,523.0 L14.5,506.0 L15.5,506.0 L15.5,487.5 L16.5,487.5 L16.5,470.5 L17.5,470.5 L17.5,461.0 L17.5,470.5 L18.5,470.5 L18.5,487.5 L19.5,487.5 L19.5,506.0 L20.5,506.0 L20.5,523.0 L21.5,523.0 L21.5,540.5 L22.5,540.5 L22.5,549.5 L22.5,540.5 L23.5,540.5 L23.5,523.0 L24.5,523.0 L24.5,506.0 L25.5,506.0 L25.5,487.5 L26.5,487.5 L26.5,470.5 L27.5,470.5 L27.5,461.0 L27.5,470.5 L28.5,470.5 L28.5,487.5 L29.5,487.5 L29.5,506.0 L30.5,506.0 L30.5,523.0 L31.5,523.0 L31.5,540.5 L32.5,540.5 L32.5,549.5 L32.5,540.5 L33.5,540.5 L33.5,523.0 L34.5,523.0 L34.5,506.0 L35.5,506.0 L35.5,487.5 L36.5,487.5 L36.5,470.5 L37.5,470.5 L37.5,461.0 L37.5,470.5 L38.5,470.5 L38.5,487.5 L39.5,487.5 L39.5,506.0 L40.5,506.0 L40.5,523.0 L41.5,523.0 L41.5,540.5 L42.5,540.5 L42.5,549.5 L42.5,540.5 L43.5,540.5 L43.5,523.0 L44.5,523.0 L44.5,506.0 L45.5,506.0 L45.5,487.5 L46.5,487.5 L46.5,470.5 L47.5,470.5 L47.5,461.0 L47.5,470.5 L48.5,470.5 L48.5,487.5 L49.5,487.5 L49.5,506.0 L50.5,506.0 L50.5,523.0 L51.5,523.0 L51.5,540.5 L52.5,540.5 L52.5,549.5 L52.5,540.5 L53.5,540.5 L53.5,523.0 L54.5,523.0 L54.5,506.0 L55.5,506.0 L55.5,487.5 L56.5,487.5 L56.5,470.5 L57.5,470.5 L57.5,461.0 L57.5,470.5 L58.5,470.5 L58.5,487.5 L59.5,487.5 L59.5,506.0 L60.5,506.0 L60.5,523.0 L61.5,523.0 L61.5,540.5 L62.5,540.5 L62.5,549.5 L62.5,540.5 L63.5,540.5 L63.5,523.0 L64.5,523.0 L64.5,506.0 L65.5,506.0 L65.5,487.5 L66.5,487.5 L66.5,470.5 L67.5,470.5 L67.5,461.0 L67.5,470.5 L68.5,470.5 L68.5,487.5 L69.5,487.5 L69.5,506.0 L70.5,506.0 L70.5,523.0 L71.5,523.0 L71.5,540.5 L72.5,540.5 L72.5,549.5 L72.5,540.5 L73.5,540.5 L73.5,523.0 L74.5,523.0 L74.5,506.0 L75.5,506.0 L75.5,487.5 L76.5,487.5 L76.5,470.5 L77.5,470.5 L77.5,461.0 L77.5,470.5 L78.5,470.5 L78.5,487.5 L79.5,487.5 L79.5,506.0 L80.5,506.0 L80.5,523.0 L81.5,523.0 L81.5,540.5 L82.5,540.5 L82.5,549.5 L82.5,540.5 L83.5,540.5 L83.5,523.0 L84.5,523.0 L84.5,506.0 L85.5,506.0 L85.5,487.5 L86.5,487.5 L86.5,470.5 L87.5,470.5 L87.5,461.0 L87.5,470.5 L88.5,470.5 L88.5,487.5 L89.5,487.5 L89.5,506.0 L90.5,506.0 L90.5,523.0 L91.5,523.0 L91.5,540.5 L92.5,540.5 L92.5,549.5 L92.5,540.5 L93.5,540.5 L93.5,523.0 L94.5,523.0 L94.5,506.0 L95.5,506.0 L95.5,487.5 L96.5,487.5 L96.5,470.5 L97.5,470.5 L97.5,461.0 L97.5,470.5 L98.5,470.5 L98.5,487.5 L99.5,487.5 L99.5,506.0 L100.5,506.0 L100.5,523.0 L101.5,523.0 L101.5,540.5 L102.5,540.5 L102.5,549.5 L102.5,540.5 L103.5,540.5 L103.5,523.0 L104.5,523.0 L104.5,506.0 L105.5,506.0 L105.5,487.5 L106.5,487.5 L106.5,470.5 L107.5,470.5 L107.5,461.0 L107.5,470.5 L108.5,470.5 L108.5,487.5 L109.5,487.5 L109.5,506.0 L110.5,506.0 L110.5,523.0 L111.5,523.0 L111.5,540.5 L112.5,540.5 L112.5,549.5 L112.5,540.5 L113.5,540.5 L113.5,523.0 L114.5,523.0 L114.5,506.0 L115.5,506.0 L115.5,487.5 L116.5,487.5 L116.5,470.5 L117.5,470.5 L117.5,461.0 L117.5,470.5 L118.5,470.5 L118.5,487.5 L119.5,487.5 L119.5,506.0 L120.5,506.0 L120.5,523.0 L121.5,523.0 L121.5,540.5 L122.5,540.5 L122.5,549.5 L122.5,540.5 L123.5,540.5 L123.5,523.0 L124.5,523.0 L124.5,506.0 L125.5,506.0 L125.5,487.5 L126.5,487.5 L126.5,470.5 L127.5,470.5 L127.5,461.0 L127.5,470.5 L128.5,470.5 L128.5,487.5 L129.5,487.5 L129.5,506.0 L130.5,506.0 L130.5,523.0 L131.5,523.0 L131.5,540.5 L132.5,540.5 L132.5,549.5 L132.5,540.5 L133.5,540.5 L133.5,523.0 L134.5,523.0 L134.5,506.0 L135.5,506.0 L135.5,487.5 L136.5,487.5 L136.5,470.5 L137.5,470.5 L137.5,461.0 L137.5,470.5 L138.5,470.5 L138.5,487.5 L139.5,487.5 L139.5,506.0 L140.5,506.0 L140.5,523.0 L141.5,523.0 L141.5,540.5 L142.5,540.5 L142.5,549.5 L142.5,540.5 L143.5,540.5 L143.5,523.0 L144.5,523.0 L144.5,506.0 L145.5,506.0 L145.5,487.5 L146.5,487.5 L146.5,470.5 L147.5,470.5 L147.5,461.0 L147.5,470.5 L148.5,470.5 L148.5,487.5 L149.5,487.5 L149.5,506.0 L150.5,506.0 L150.5,523.0 L151.5,523.0 L151.5,540.5 L152.5,540.5 L152.5,549.5 L152.5,540.5 L153.5,540.5 L153.5,523.0 L154.5,523.0 L154.5,506.0 L155.5,506.0 L155.5,487.5 L156.5,487.5 L156.5,470.5 L157.5,470.5 L157.5,461.0 L157.5,470.5 L158.5,470.5 L158.5,487.5 L159.5,487.5 L159.5,506.0 L160.5,506.0 L160.5,523.0 L161.5,523.0 L161.5,540.5 L162.5,540.5 L162.5,549.5 L162.5,540.5 L163.5,540.5 L163.5,523.0 L164.5,523.0 L164.5,506.0 L165.5,506.0 L165.5,487.5 L166.5,487.5 L166.5,470.5 L167.5,470.5 L167.5,461.0 L167.5,470.5 L168.5,470.5 L168.5,487.5 L169.5,487.5 L169.5,506.0 L170.5,506.0 L170.5,523.0 L171.5,523.0 L171.5,540.5 L172.5,540.5 L172.5,549.5 L172.5,540.5 L173.5,540.5 L173.5,523.0 L174.5,523.0 L174.5,506.0 L175.5,506.0 L175.5,487.5 L176.5,487.5 L176.5,470.5 L177.5,470.5 L177.5,461.0 L177.5,470.5 L178.5,470.5 L178.5,487.5 L179.5,487.5 L179.5,506.0 L180.5,506.0 L180.5,523.0 L181.5,523.0 L181.5,540.5 L182.5,540.5 L182.5,549.5 L182.5,540.5 L183.5,540.5 L183.5,523.0 L184.5,523.0 L184.5,506.0 L185.5,506.0 L185.5,487.5 L186.5,487.5 L186.5,470.5 L187.5,470.5 L187.5,461.0 L187.5,470.5 L188.5,470.5 L188.5,487.5 L189.5,487.5 L189.5,506.0 L190.5,506.0 L190.5,523.0 L191.5,523.0 L191.5,540.5 L192.5,540.5 L192.5,549.5 L192.5,540.5 L193.5,540.5 L193.5,523.0 L194.5,523.0 L194.5,506.0 L195.5,506.0 L195.5,487.5 L196.5,487.5 L196.5,470.5 L197.5,470.5 L197.5,461.0 L197.5,470.5 L198.5,470.5 L198.5,487.5 L199.5,487.5 L199.5,506.0 L200.5,506.0 L200.5,523.0 L201.5,523.0 L201.5,540.5 L202.5,540.5 L202.5,549.5 L202.5,540.5 L203.5,540.5 L203.5,523.0 L204.5,523.0 L204.5,506.0 L205.5,506.0 L205.5,487.5 L206.5,487.5 L206.5,470.5 L207.5,470.5 L207.5,461.0 L207.5,470.5 L208.5,470.5 L208.5,487.5 L209.5,487.5 L209.5,506.0 L210.5,506.0 L210.5,523.0 L211.5,523.0 L211.5,540.5 L212.5,540.5 L212.5,549.5 L212.5,540.5 L213.5,540.5 L213.5,523.0 L214.5,523.0 L214.5,506.0 L215.5,506.0 L215.5,487.5 L216.5,487.5 L216.5,470.5 L217.5,470.5 L217.5,461.0 L217.5,470.5 L218.5,470.5 L218.5,487.5 L219.5,487.5 L219.5,506.0 L220.5,506.0 L220.5,523.0 L221.5,523.0 L221.5,540.5 L222.5,540.5 L222.5,549.5 L222.5,540.5 L223.5,540.5 L223.5,523.0 L224.5,523.0 L224.5,506.0 L225.5,506.0 L225.5,487.5 L226.5,487.5 L226.5,470.5 L227.5,470.5 L227.5,461.0 L227.5,470.5 L228.5,470.5 L228.5,487.5 L229.5,487.5 L229.5,506.0 L230.5,506.0 L230.5,523.0 L231.5,523.0 L231.5,540.5 L232.5,540.5 L232.5,549.5 L232.5,540.5 L233.5,540.5 L233.5,523.0 L234.5,523.0 L234.5,506.0 L235.5,506.0 L235.5,487.5 L236.5,487.5 L236.5,470.5 L237.5,470.5 L237.5,461.0 L237.5,470.5 L238.5,470.5 L238.5,487.5 L239.5,487.5 L239.5,506.0 L240.5,506.0 L240.5,523.0 L241.5,523.0 L241.5,540.5 L242.5,540.5 L242.5,549.5 L242.5,540.5 L243.5,540.5 L243.5,523.0 L244.5,523.0 L244.5,506.0 L245.5,506.0 L245.5,487.5 L246.5,487.5 L246.5,470.5 L247.5,470.5 L247.5,461.0 L247.5,470.5 L248.5,470.5 L248.5,487.5 L249.5,487.5 L249.5,506.0 L250.5,506.0 L250.5,523.0 L251.5,523.0 L251.5,540.5 L252.5,540.5 L252.5,549.5 L252.5,540.5 L253.5,540.5 L253.5,523.0 L254.5,523.0 L254.5,506.0 L255.5,506.0 L255.5,487.5 L256.5,487.5 L256.5,470.5 L257.5,470.5 L257.5,461.0 L257.5,470.5 L258.5,470.5 L258.5,487.5 L259.5,487.5 L259.5,506.0 L260.5,506.0 L260.5,523.0 L261.5,523.0 L261.5,540.5 L262.5,540.5 L262.5,549.5 L262.5,540.5 L263.5,540.5 L263.5,523.0 L264.5,523.0 L264.5,506.0 L265.5,506.0 L265.5,487.5 L266.5,487.5 L266.5,470.5 L267.5,470.5 L267.5,461.0 L267.5,470.5 L268.5,470.5 L268.5,487.5 L269.5,487.5 L269.5,506.0 L270.5,506.0 L270.5,523.0 L271.5,523.0 L271.5,540.5 L272.5,540.5 L272.5,549.5 L272.5,540.5 L273.5,540.5 L273.5,523.0 L274.5,523.0 L274.5,506.0 L275.5,506.0 L275.5,487.5 L276.5,487.5 L276.5,470.5 L277.5,470.5 L277.5,461.0 L277.5,470.5 L278.5,470.5 L278.5,487.5 L279.5,487.5 L279.5,506.0 L280.5,506.0 L280.5,523.0 L281.5,523.0 L281.5,540.5 L282.5,540.5 L282.5,549.5 L282.5,540.5 L283.5,540.5 L283.5,523.0 L284.5,523.0 L284.5,506.0 L285.5,506.0 L285.5,487.5 L286.5,487.5 L286.5,470.5 L287.5,470.5 L287.5,461.0 L287.5,470.5 L288.5,470.5 L288.5,487.5 L289.5,487.5 L289.5,506.0 L290.5,506.0 L290.5,523.0 L291.5,523.0 L291.5,540.5 L292.5,540.5 L292.5,549.5 L292.5,540.5 L293.5,540.5 L293.5,523.0 L294.5,523.0 L294.5,506.0 L295.5,506.0 L295.5,487.5 L296.5,487.5 L296.5,470.5 L297.5,470.5 L297.5,461.0 L297.5,470.5 L298.5,470.5 L298.5,487.5 L299.5,487.5 L299.5,506.0 L300.5,506.0 L300.5,523.0 L301.5,523.0 L301.5,540.5 L302.5,540.5 L302.5,549.5 L302.5,540.5 L303.5,540.5 L303.5,523.0 L304.5,523.0 L304.5,506.0 L305.5,506.0 L305.5,487.5 L306.5,487.5 L306.5,470.5 L307.5,470.5 L307.5,461.0 L307.5,470.5 L308.5,470.5 L308.5,487.5 L309.5,487.5 L309.5,506.0 L310.5,506.0 L310.5,523.0 L311.5,523.0 L311.5,540.5 L312.5,540.5 L312.5,549.5 L312.5,540.5 L313.5,540.5 L313.5,523.0 L314.5,523.0 L314.5,506.0 L315.5,506.0 L315.5,487.5 L316.5,487.5 L316.5,470.5 L317.5,470.5 L317.5,461.0 L317.5,470.5 L318.5,470.5 L318.5,487.5 L319.5,487.5 L319.5,506.0 L320.5,506.0 L320.5,523.0 L321.5,523.0 L321.5,540.5 L322.5,540.5 L322.5,549.5 L322.5,540.5 L323.5,540.5 L323.5,523.0 L324.5,523.0 L324.5,506.0 L325.5,506.0 L325.5,487.5 L326.5,487.5 L326.5,470.5 L327.5,470.5 L327.5,461.0 L327.5,470.5 L328.5,470.5 L328.5,487.5 L329.5,487.5 L329.5,506.0 L330.5,506.0 L330.5,523.0 L331.5,523.0 L331.5,540.5 L332.5,540.5 L332.5,549.5 L332.5,540.5 L333.5,540.5 L333.5,523.0 L334.5,523.0 L334.5,506.0 L335.5,506.0 L335.5,487.5 L336.5,487.5 L336.5,470.5 L337.5,470.5 L337.5,461.0 L337.5,470.5 L338.5,470.5 L338.5,487.5 L339.5,487.5 L339.5,506.0 L340.5,506.0 L340.5,523.0 L341.5,523.0 L341.5,540.5 L342.5,540.5 L342.5,549.5 L342.5,540.5 L343.5,540.5 L343.5,523.0 L344.5,523.0 L344.5,506.0 L345.5,506.0 L345.5,487.5 L346.5,487.5 L346.5,470.5 L347.5,470.5 L347.5,461.0 L347.5,470.5 L348.5,470.5 L348.5,487.5 L349.5,487.5 L349.5,506.0 L350.5,506.0 L350.5,523.0 L351.5,523.0 L351.5,540.5 L352.5,540.5 L352.5,549.5 L352.5,540.5 L353.5,540.5 L353.5,523.0 L354.5,523.0 L354.5,506.0 L355.5,506.0 L355.5,487.5 L356.5,487.5 L356.5,470.5 L357.5,470.5 L357.5,461.0 L357.5,470.5 L358.5,470.5 L358.5,487.5 L359.5,487.5 L359.5,506.0 L360.5,506.0 L360.5,523.0 L361.5,523.0 L361.5,540.5 L362.5,540.5 L362.5,549.5 L362.5,540.5 L363.5,540.5 L363.5,523.0 L364.5,523.0 L364.5,506.0 L365.5,506.0 L365.5,487.5 L366.5,487.5 L366.5,470.5 L367.5,470.5 L367.5,461.0 L367.5,470.5 L368.5,470.5 L368.5,487.5 L369.5,487.5 L369.5,506.0 L370.5,506.0 L370.5,523.0 L371.5,523.0 L371.5,540.5 L372.5,540.5 L372.5,549.5 L372.5,540.5 L373.5,540.5 L373.5,523.0 L374.5,523.0 L374.5,506.0 L375.5,506.0 L375.5,487.5 L376.5,487.5 L376.5,470.5 L377.5,470.5 L377.5,461.0 L377.5,470.5 L378.5,470.5 L378.5,487.5 L379.5,487.5 L379.5,506.0 L380.5,506.0 L380.5,523.0 L381.5,523.0 L381.5,540.5 L382.5,540.5 L382.5,549.5 L382.5,540.5 L383.5,540.5 L383.5,523.0 L384.5,523.0 L384.5,506.0 L385.5,506.0 L385.5,487.5 L386.5,487.5 L386.5,470.5 L387.5,470.5 L387.5,461.0 L387.5,470.5 L388.5,470.5 L388.5,487.5 L389.5,487.5 L389.5,506.0 L390.5,506.0 L390.5,523.0 L391.5,523.0 L391.5,540.5 L392.5,540.5 L392.5,549.5 L392.5,540.5 L393.5,540.5 L393.5,523.0 L394.5,523.0 L394.5,506.0 L395.5,506.0 L395.5,487.5 L396.5,487.5 L396.5,470.5 L397.5,470.5 L397.5,461.0 L397.5,470.5 L398.5,470.5 L398.5,487.5 L399.5,487.5 L399.5,506.0 L400.5,506.0 L400.5,523.0 L401.5,523.0 L401.5,540.5 L402.5,540.5 L402.5,549.5 L402.5,540.5 L403.5,540.5 L403.5,523.0 L404.5,523.0 L404.5,506.0 L405.5,506.0 L405.5,487.5 L406.5,487.5 L406.5,470.5 L407.5,470.5 L407.5,461.0 L407.5,470.5 L408.5,470.5 L408.5,487.5 L409.5,487.5 L409.5,506.0 L410.5,506.0 L410.5,523.0 L411.5,523.0 L411.5,540.5 L412.5,540.5 L412.5,549.5 L412.5,540.5 L413.5,540.5 L413.5,523.0 L414.5,523.0 L414.5,506.0 L415.5,506.0 L415.5,487.5 L416.5,487.5 L416.5,470.5 L417.5,470.5 L417.5,461.0 L417.5,470.5 L418.5,470.5 L418.5,487.5 L419.5,487.5 L419.5,506.0 L420.5,506.0 L420.5,523.0 L421.5,523.0 L421.5,540.5 L422.5,540.5 L422.5,549.5 L422.5,540.5 L423.5,540.5 L423.5,523.0 L424.5,523.0 L424.5,506.0 L425.5,506.0 L425.5,487.5 L426.5,487.5 L426.5,470.5 L427.5,470.5 L427.5,461.0 L427.5,470.5 L428.5,470.5 L428.5,487.5 L429.5,487.5 L429.5,506.0 L430.5,506.0 L430.5,523.0 L431.5,523.0 L431.5,540.5 L432.5,540.5 L432.5,549.5 L432.5,540.5 L433.5,540.5 L433.5,523.0 L434.5,523.0 L434.5,506.0 L435.5,506.0 L435.5,487.5 L436.5,487.5 L436.5,470.5 L437.5,470.5 L437.5,461.0 L437.5,470.5 L438.5,470.5 L438.5,487.5 L439.5,487.5 L439.5,506.0 L440.5,506.0 L440.5,523.0 L441.5,523.0 L441.5,540.5 L442.5,540.5 L442.5,549.5 L442.5,540.5 L443.5,540.5 L443.5,523.0 L444.5,523.0 L444.5,506.0 L445.5,506.0 L445.5,487.5 L446.5,487.5 L446.5,470.5 L446.5,458.0 L449.0,456.5 L452.0,458.5 L455.0,457.0 L458.0,459.0 L461.0,456.5 L464.0,458.5 L468.0,457.0 L471.0,458.5 L474.0,459.0 L477.0,468.0 L480.0,460.0 L481.5,457.0 L481.5,477.0 L482.5,477.0 L482.5,477.0 L482.5,457.0 L482.5,477.0 L483.5,477.0 L483.5,495.5 L484.5,495.5 L484.5,514.5 L485.5,514.5 L485.5,533.0 L486.5,533.0 L486.5,543.0 L487.5,543.0 L487.5,552.5 L487.5,543.0 L488.5,543.0 L488.5,533.0 L489.5,533.0 L489.5,514.5 L490.5,514.5 L490.5,495.5 L491.5,495.5 L491.5,477.0 L492.5,477.0 L492.5,457.0 L492.5,477.0 L493.5,477.0 L493.5,495.5 L494.5,495.5 L494.5,514.5 L495.5,514.5 L495.5,533.0 L496.5,533.0 L496.5,543.0 L497.5,543.0 L497.5,552.5 L497.5,543.0 L498.5,543.0 L498.5,533.0 L499.5,533.0 L499.5,514.5 L500.5,514.5 L500.5,495.5 L501.5,495.5 L501.5,477.0 L502.5,477.0 L502.5,457.0 L502.5,477.0 L503.5,477.0 L503.5,495.5 L504.5,495.5 L504.5,514.5 L505.5,514.5 L505.5,533.0 L506.5,533.0 L506.5,543.0 L507.5,543.0 L507.5,552.5 L507.5,543.0 L508.5,543.0 L508.5,533.0 L509.5,533.0 L509.5,514.5 L510.5,514.5 L510.5,495.5 L511.5,495.5 L511.5,477.0 L512.5,477.0 L512.5,457.0 L512.5,477.0 L513.5,477.0 L513.5,495.5 L514.5,495.5 L514.5,514.5 L515.5,514.5 L515.5,533.0 L516.5,533.0 L516.5,543.0 L517.5,543.0 L517.5,552.5 L517.5,543.0 L518.5,543.0 L518.5,533.0 L519.5,533.0 L519.5,514.5 L520.5,514.5 L520.5,495.5 L521.5,495.5 L521.5,477.0 L522.5,477.0 L522.5,457.0 L522.5,477.0 L523.5,477.0 L523.5,495.5 L524.5,495.5 L524.5,514.5 L525.5,514.5 L525.5,533.0 L526.5,533.0 L526.5,543.0 L527.5,543.0 L527.5,552.5 L527.5,543.0 L528.5,543.0 L528.5,533.0 L529.5,533.0 L529.5,514.5 L530.5,514.5 L530.5,495.5 L531.5,495.5 L531.5,477.0 L532.5,477.0 L532.5,457.0 L532.5,477.0 L533.5,477.0 L533.5,495.5 L534.5,495.5 L534.5,514.5 L535.5,514.5 L535.5,533.0 L536.5,533.0 L536.5,543.0 L537.5,543.0 L537.5,552.5 L537.5,543.0 L538.5,543.0 L538.5,533.0 L539.5,533.0 L539.5,514.5 L540.5,514.5 L540.5,495.5 L541.5,495.5 L541.5,477.0 L542.5,477.0 L542.5,457.0 L542.5,477.0 L543.5,477.0 L543.5,495.5 L544.5,495.5 L544.5,514.5 L545.5,514.5 L545.5,533.0 L546.5,533.0 L546.5,543.0 L547.5,543.0 L547.5,552.5 L547.5,543.0 L548.5,543.0 L548.5,533.0 L549.5,533.0 L549.5,514.5 L550.5,514.5 L550.5,495.5 L551.5,495.5 L551.5,477.0 L552.5,477.0 L552.5,457.0 L552.5,477.0 L553.5,477.0 L553.5,495.5 L554.5,495.5 L554.5,514.5 L555.5,514.5 L555.5,533.0 L556.5,533.0 L556.5,543.0 L557.5,543.0 L557.5,552.5 L557.5,543.0 L558.5,543.0 L558.5,533.0 L559.5,533.0 L559.5,514.5 L560.5,514.5 L560.5,495.5 L561.5,495.5 L561.5,477.0 L562.5,477.0 L562.5,457.0 L562.5,477.0 L563.5,477.0 L563.5,495.5 L564.5,495.5 L564.5,514.5 L565.5,514.5 L565.5,533.0 L566.5,533.0 L566.5,543.0 L567.5,543.0 L567.5,552.5 L567.5,543.0 L568.5,543.0 L568.5,533.0 L569.5,533.0 L569.5,514.5 L570.5,514.5 L570.5,495.5 L571.5,495.5 L571.5,477.0 L572.5,477.0 L572.5,457.0 L572.5,477.0 L573.5,477.0 L573.5,495.5 L574.5,495.5 L574.5,514.5 L575.5,514.5 L575.5,533.0 L576.5,533.0 L576.5,543.0 L577.5,543.0 L577.5,552.5 L577.5,543.0 L578.5,543.0 L578.5,533.0 L579.5,533.0 L579.5,514.5 L580.5,514.5 L580.5,495.5 L581.5,495.5 L581.5,477.0 L582.5,477.0 L582.5,457.0 L582.5,477.0 L583.5,477.0 L583.5,495.5 L584.5,495.5 L584.5,514.5 L585.5,514.5 L585.5,533.0 L586.5,533.0 L586.5,543.0 L587.5,543.0 L587.5,552.5 L587.5,543.0 L588.5,543.0 L588.5,533.0 L589.5,533.0 L589.5,514.5 L590.5,514.5 L590.5,495.5 L591.5,495.5 L591.5,477.0 L592.5,477.0 L592.5,457.0 L592.5,477.0 L593.5,477.0 L593.5,495.5 L594.5,495.5 L594.5,514.5 L595.5,514.5 L595.5,533.0 L596.5,533.0 L596.5,543.0 L597.5,543.0 L597.5,552.5 L597.5,543.0 L598.5,543.0 L598.5,533.0 L599.5,533.0 L599.5,514.5 L600.5,514.5 L600.5,495.5 L601.5,495.5 L601.5,477.0 L602.5,477.0 L602.5,457.0 L602.5,477.0 L603.5,477.0 L603.5,495.5 L604.5,495.5 L604.5,514.5 L605.5,514.5 L605.5,533.0 L606.5,533.0 L606.5,543.0 L607.5,543.0 L607.5,552.5 L607.5,543.0 L608.5,543.0 L608.5,533.0 L609.5,533.0 L609.5,514.5 L610.5,514.5 L610.5,495.5 L611.5,495.5 L611.5,477.0 L612.5,477.0 L612.5,457.0 L612.5,477.0 L613.5,477.0 L613.5,495.5 L614.5,495.5 L614.5,514.5 L615.5,514.5 L615.5,533.0 L616.5,533.0 L616.5,543.0 L617.5,543.0 L617.5,552.5 L617.5,543.0 L618.5,543.0 L618.5,533.0 L619.5,533.0 L619.5,514.5 L620.5,514.5 L620.5,495.5 L621.5,495.5 L621.5,477.0 L622.5,477.0 L622.5,457.0 L622.5,477.0 L623.5,477.0 L623.5,495.5 L624.5,495.5 L624.5,514.5 L625.5,514.5 L625.5,533.0 L626.5,533.0 L626.5,543.0 L627.5,543.0 L627.5,552.5 L627.5,543.0 L628.5,543.0 L628.5,533.0 L629.5,533.0 L629.5,514.5 L630.5,514.5 L630.5,495.5 L631.5,495.5 L631.5,477.0 L632.5,477.0 L632.5,457.0 L632.5,477.0 L633.5,477.0 L633.5,495.5 L634.5,495.5 L634.5,514.5 L635.5,514.5 L635.5,533.0 L636.5,533.0 L636.5,543.0 L637.5,543.0 L637.5,552.5 L637.5,543.0 L638.5,543.0 L638.5,533.0 L639.5,533.0 L639.5,514.5 L640.5,514.5 L640.5,495.5 L641.5,495.5 L641.5,477.0 L642.5,477.0 L642.5,457.0 L642.5,477.0 L643.5,477.0 L643.5,495.5 L644.5,495.5 L644.5,514.5 L645.5,514.5 L645.5,533.0 L646.5,533.0 L646.5,543.0 L647.5,543.0 L647.5,552.5 L647.5,543.0 L648.5,543.0 L648.5,533.0 L649.5,533.0 L649.5,514.5 L650.5,514.5 L650.5,495.5 L651.5,495.5 L651.5,477.0 L652.5,477.0 L652.5,457.0 L652.5,477.0 L653.5,477.0 L653.5,495.5 L654.5,495.5 L654.5,514.5 L655.5,514.5 L655.5,533.0 L656.5,533.0 L656.5,543.0 L657.5,543.0 L657.5,552.5 L657.5,543.0 L658.5,543.0 L658.5,533.0 L659.5,533.0 L659.5,514.5 L660.5,514.5 L660.5,495.5 L661.5,495.5 L661.5,477.0 L662.5,477.0 L662.5,457.0 L662.5,477.0 L663.5,477.0 L663.5,495.5 L664.5,495.5 L664.5,514.5 L665.5,514.5 L665.5,533.0 L666.5,533.0 L666.5,543.0 L667.5,543.0 L667.5,552.5 L667.5,543.0 L668.5,543.0 L668.5,533.0 L669.5,533.0 L669.5,514.5 L670.5,514.5 L670.5,495.5 L671.5,495.5 L671.5,477.0 L672.5,477.0 L672.5,457.0 L672.5,477.0 L673.5,477.0 L673.5,495.5 L674.5,495.5 L674.5,514.5 L675.5,514.5 L675.5,533.0 L676.5,533.0 L676.5,543.0 L677.5,543.0 L677.5,552.5 L677.5,543.0 L678.5,543.0 L678.5,533.0 L679.5,533.0 L679.5,514.5 L680.5,514.5 L680.5,495.5 L681.5,495.5 L681.5,477.0 L682.5,477.0 L682.5,457.0 L682.5,477.0 L683.5,477.0 L683.5,495.5 L684.5,495.5 L684.5,514.5 L685.5,514.5 L685.5,533.0 L686.5,533.0 L686.5,543.0 L687.5,543.0 L687.5,552.5 L687.5,543.0 L688.5,543.0 L688.5,533.0 L689.5,533.0 L689.5,514.5 L690.5,514.5 L690.5,495.5 L691.5,495.5 L691.5,477.0 L692.5,477.0 L692.5,457.0 L692.5,477.0 L693.5,477.0 L693.5,495.5 L694.5,495.5 L694.5,514.5 L695.5,514.5 L695.5,533.0 L696.5,533.0 L696.5,543.0 L697.5,543.0 L697.5,552.5 L697.5,543.0 L698.5,543.0 L698.5,533.0 L699.5,533.0 L699.5,514.5 L700.5,514.5 L700.5,495.5 L701.5,495.5 L701.5,477.0 L702.5,477.0 L702.5,457.0 L702.5,477.0 L703.5,477.0 L703.5,495.5 L704.5,495.5 L704.5,514.5 L705.5,514.5 L705.5,533.0 L706.5,533.0 L706.5,543.0 L707.5,543.0 L707.5,552.5 L707.5,543.0 L708.5,543.0 L708.5,533.0 L709.5,533.0 L709.5,514.5 L710.5,514.5 L710.5,495.5 L711.5,495.5 L711.5,477.0 L712.5,477.0 L712.5,457.0 L712.5,477.0 L713.5,477.0 L713.5,495.5 L714.5,495.5 L714.5,514.5 L715.5,514.5 L715.5,533.0 L716.5,533.0 L716.5,543.0 L717.5,543.0 L717.5,552.5 L717.5,543.0 L718.5,543.0 L718.5,533.0 L719.5,533.0 L719.5,514.5 L720.5,514.5 L720.5,495.5 L721.5,495.5 L721.5,477.0 L722.5,477.0 L722.5,457.0 L722.5,477.0 L723.5,477.0 L723.5,495.5 L724.5,495.5 L724.5,514.5 L725.5,514.5 L725.5,533.0 L726.5,533.0 L726.5,543.0 L727.5,543.0 L727.5,552.5 L727.5,543.0 L728.5,543.0 L728.5,533.0 L729.5,533.0 L729.5,514.5 L730.5,514.5 L730.5,495.5 L731.5,495.5 L731.5,477.0 L732.5,477.0 L732.5,457.0 L732.5,477.0 L733.5,477.0 L733.5,495.5 L734.5,495.5 L734.5,514.5 L735.5,514.5 L735.5,533.0 L736.5,533.0 L736.5,543.0 L737.5,543.0 L737.5,552.5 L737.5,543.0 L738.5,543.0 L738.5,533.0 L739.5,533.0 L739.5,514.5 L740.5,514.5 L740.5,495.5 L741.5,495.5 L741.5,477.0 L742.5,477.0 L742.5,457.0 L742.5,477.0 L743.5,477.0 L743.5,495.5 L744.5,495.5 L744.5,514.5 L745.5,514.5 L745.5,533.0 L746.5,533.0 L746.5,543.0 L747.5,543.0 L747.5,552.5 L747.5,543.0 L748.5,543.0 L748.5,533.0 L749.5,533.0 L749.5,514.5 L750.5,514.5 L750.5,495.5 L751.5,495.5 L751.5,477.0 L752.5,477.0 L752.5,457.0 L752.5,477.0 L753.5,477.0 L753.5,495.5 L754.5,495.5 L754.5,514.5 L755.5,514.5 L755.5,533.0 L756.5,533.0 L756.5,543.0 L757.5,543.0 L757.5,552.5 L757.5,543.0 L758.5,543.0 L758.5,533.0 L759.5,533.0 L759.5,514.5 L760.5,514.5 L760.5,495.5 L761.5,495.5 L761.5,477.0 L762.5,477.0 L762.5,457.0 L762.5,477.0 L763.5,477.0 L763.5,495.5 L764.5,495.5 L764.5,514.5 L765.5,514.5 L765.5,533.0 L766.5,533.0 L766.5,543.0 L767.5,543.0 L767.5,552.5 L767.5,543.0 L768.5,543.0 L768.5,533.0 L769.5,533.0 L769.5,514.5 L770.5,514.5 L770.5,495.5 L771.5,495.5 L771.5,477.0 L772.5,477.0 L772.5,457.0 L772.5,477.0 L773.5,477.0 L773.5,495.5 L774.5,495.5 L774.5,514.5 L775.5,514.5 L775.5,533.0 L776.5,533.0 L776.5,543.0 L777.5,543.0 L777.5,552.5 L777.5,543.0 L778.5,543.0 L778.5,533.0 L779.5,533.0 L779.5,514.5 L780.5,514.5 L780.5,495.5 L781.5,495.5 L781.5,477.0 L782.5,477.0 L782.5,457.0 L782.5,477.0 L783.5,477.0 L783.5,495.5 L784.5,495.5 L784.5,514.5 L785.5,514.5 L785.5,533.0 L786.5,533.0 L786.5,543.0 L787.5,543.0 L787.5,552.5 L787.5,543.0 L788.5,543.0 L788.5,533.0 L789.5,533.0 L789.5,514.5 L790.5,514.5 L790.5,495.5 L791.5,495.5 L791.5,477.0 L792.5,477.0 L792.5,457.0 L792.5,477.0 L793.5,477.0 L793.5,495.5 L794.5,495.5 L794.5,514.5 L795.5,514.5 L795.5,533.0 L796.5,533.0 L796.5,543.0 L797.5,543.0 L797.5,552.5 L797.5,543.0 L798.5,543.0 L798.5,533.0 L799.5,533.0 L799.5,514.5 L800.5,514.5 L800.5,495.5 L801.5,495.5 L801.5,477.0 L802.5,477.0 L802.5,457.0 L802.5,477.0 L803.5,477.0 L803.5,495.5 L804.5,495.5 L804.5,514.5 L805.5,514.5 L805.5,533.0 L806.5,533.0 L806.5,543.0 L807.5,543.0 L807.5,552.5 L807.5,543.0 L808.5,543.0 L808.5,533.0 L809.5,533.0 L809.5,514.5 L810.5,514.5 L810.5,495.5 L811.5,495.5 L811.5,477.0 L812.5,477.0 L812.5,457.0 L812.5,477.0 L813.5,477.0 L813.5,495.5 L814.5,495.5 L814.5,514.5 L815.5,514.5 L815.5,533.0 L816.5,533.0 L816.5,543.0 L817.5,543.0 L817.5,552.5 L817.5,543.0 L818.5,543.0 L818.5,533.0 L819.5,533.0 L819.5,514.5 L820.5,514.5 L820.5,495.5 L821.5,495.5 L821.5,477.0 L822.5,477.0 L822.5,457.0 L822.5,477.0 L823.5,477.0 L823.5,495.5 L824.5,495.5 L824.5,514.5 L825.5,514.5 L825.5,533.0 L826.5,533.0 L826.5,543.0 L827.5,543.0 L827.5,552.5 L827.5,543.0 L828.5,543.0 L828.5,533.0 L829.5,533.0 L829.5,514.5 L830.5,514.5 L830.5,495.5 L831.5,495.5 L831.5,477.0 L832.5,477.0 L832.5,457.0 L832.5,477.0 L833.5,477.0 L833.5,495.5 L834.5,495.5 L834.5,514.5 L835.5,514.5 L835.5,533.0 L836.5,533.0 L836.5,543.0 L837.5,543.0 L837.5,552.5 L837.5,543.0 L838.5,543.0 L838.5,533.0 L839.5,533.0 L839.5,514.5 L840.5,514.5 L840.5,495.5 L841.5,495.5 L841.5,477.0 L842.5,477.0 L842.5,457.0 L842.5,477.0 L843.5,477.0 L843.5,495.5 L844.5,495.5 L844.5,514.5 L845.5,514.5 L845.5,533.0 L846.5,533.0 L846.5,543.0 L847.5,543.0 L847.5,552.5 L847.5,543.0 L848.5,543.0 L848.5,533.0 L849.5,533.0 L849.5,514.5 L850.5,514.5 L850.5,495.5 L851.5,495.5 L851.5,477.0 L852.5,477.0 L852.5,457.0 L852.5,477.0 L853.5,477.0 L853.5,495.5 L854.5,495.5 L854.5,514.5 L855.5,514.5 L855.5,533.0 L856.5,533.0 L856.5,543.0 L857.5,543.0 L857.5,552.5 L857.5,543.0 L858.5,543.0 L858.5,533.0 L859.5,533.0 L859.5,514.5 L860.5,514.5 L860.5,495.5 L861.5,495.5 L861.5,477.0 L862.5,477.0 L862.5,457.0 L862.5,477.0 L863.5,477.0 L863.5,495.5 L864.5,495.5 L864.5,514.5 L865.5,514.5 L865.5,533.0 L866.5,533.0 L866.5,543.0 L867.5,543.0 L867.5,552.5 L867.5,543.0 L868.5,543.0 L868.5,533.0 L869.5,533.0 L869.5,514.5 L870.5,514.5 L870.5,495.5 L871.5,495.5 L871.5,477.0 L872.5,477.0 L872.5,457.0 L872.5,477.0 L873.5,477.0 L873.5,495.5 L874.5,495.5 L874.5,514.5 L875.5,514.5 L875.5,533.0 L876.5,533.0 L876.5,543.0 L877.5,543.0 L877.5,552.5 L877.5,543.0 L878.5,543.0 L878.5,533.0 L879.5,533.0 L879.5,514.5 L880.5,514.5 L880.5,495.5 L881.5,495.5 L881.5,477.0 L882.5,477.0 L882.5,457.0 L882.5,477.0 L883.5,477.0 L883.5,495.5 L884.5,495.5 L884.5,514.5 L885.5,514.5 L885.5,533.0 L886.5,533.0 L886.5,543.0 L887.5,543.0 L887.5,552.5 L887.5,543.0 L888.5,543.0 L888.5,533.0 L889.5,533.0 L889.5,514.5 L890.5,514.5 L890.5,495.5 L891.5,495.5 L891.5,477.0 L892.5,477.0 L892.5,457.0 L892.5,477.0 L893.5,477.0 L893.5,495.5 L894.5,495.5 L894.5,514.5 L895.5,514.5 L895.5,533.0 L896.5,533.0 L896.5,543.0 L897.5,543.0 L897.5,552.5 L897.5,543.0 L898.5,543.0 L898.5,533.0 L899.5,533.0 L899.5,514.5 L900.5,514.5 L900.5,495.5 L901.5,495.5 L901.5,477.0 L902.5,477.0 L902.5,457.0 L902.5,477.0 L903.5,477.0 L903.5,495.5 L904.5,495.5 L904.5,514.5 L905.5,514.5 L905.5,533.0 L906.5,533.0 L906.5,543.0 L907.5,543.0 L907.5,552.5 L907.5,543.0 L908.5,543.0 L908.5,533.0 L909.5,533.0 L909.5,514.5 L910.5,514.5 L910.5,495.5 L911.5,495.5 L911.5,477.0 L912.5,477.0 L912.5,457.0 L912.5,477.0 L913.5,477.0 L913.5,495.5 L914.5,495.5 L914.5,514.5 L915.5,514.5 L915.5,533.0 L916.5,533.0 L916.5,543.0 L917.5,543.0 L917.5,552.5 L917.5,543.0 L918.5,543.0 L918.5,533.0 L919.5,533.0 L919.5,514.5 L920.5,514.5 L920.5,495.5 L921.5,495.5 L921.5,477.0 L922.5,477.0 L922.5,457.0 L922.5,477.0 L923.5,477.0 L923.5,495.5 L924.5,495.5 L924.5,514.5 L925.5,514.5 L925.5,533.0 L926.5,533.0 L926.5,543.0 L927.5,543.0 L927.5,552.5 L927.5,543.0 L928.5,543.0 L928.5,533.0 L929.5,533.0 L929.5,514.5 L930.5,514.5 L930.5,495.5 L931.5,495.5 L931.5,477.0 L932.5,477.0 L932.5,457.0 L932.5,477.0 L933.5,477.0 L933.5,495.5 L934.5,495.5 L934.5,514.5 L935.5,514.5 L935.5,533.0 L936.5,533.0 L936.5,543.0 L937.5,543.0 L937.5,552.5 L937.5,543.0 L938.5,543.0 L938.5,533.0 L939.5,533.0 L939.5,514.5 L940.5,514.5 L940.5,495.5 L941.5,495.5 L941.5,477.0 L942.5,477.0 L942.5,457.0 L942.5,477.0 L943.5,477.0 L943.5,495.5 L944.5,495.5 L944.5,514.5 L945.5,514.5 L945.5,533.0 L946.5,533.0 L946.5,543.0 L947.5,543.0 L947.5,552.5 L947.5,543.0 L948.5,543.0 L948.5,533.0 L949.5,533.0 L949.5,514.5 L950.5,514.5 L950.5,495.5 L951.5,495.5 L951.5,477.0 L952.5,477.0 L952.5,457.0 L952.5,477.0 L953.5,477.0 L953.5,495.5 L954.5,495.5 L954.5,514.5 L955.5,514.5 L955.5,533.0 L956.5,533.0 L956.5,543.0 L957.5,543.0 L957.5,552.5 L957.5,543.0 L958.5,543.0 L958.5,533.0 L959.5,533.0 L959.5,514.5 L960.5,514.5 L960.5,495.5 L961.5,495.5 L961.5,477.0 L962.5,477.0 L962.5,457.0 L962.5,477.0 L963.5,477.0 L963.5,495.5 L964.5,495.5 L964.5,514.5 L965.5,514.5 L965.5,533.0 L966.5,533.0 L966.5,543.0 L967.5,543.0 L967.5,552.5 L967.5,543.0 L968.5,543.0 L968.5,533.0 L969.5,533.0 L969.5,514.5 L970.5,514.5 L970.5,495.5 L971.5,495.5 L971.5,477.0 L972.5,477.0 L972.5,457.0 L972.5,477.0 L973.5,477.0 L973.5,495.5 L974.5,495.5 L974.5,514.5 L975.5,514.5 L975.5,533.0 L976.5,533.0 L976.5,543.0 L977.5,543.0 L977.5,552.5 L977.5,543.0 L978.5,543.0 L978.5,533.0 L979.5,533.0 L979.5,514.5 L980.5,514.5 L980.5,495.5 L981.5,495.5 L981.5,477.0 L982.5,477.0 L982.5,457.0 L982.5,477.0 L983.5,477.0 L983.5,495.5 L984.5,495.5 L984.5,514.5 L985.5,514.5 L985.5,533.0 L986.5,533.0 L986.5,543.0 L987.5,543.0 L987.5,552.5 L987.5,543.0 L988.5,543.0 L988.5,533.0 L989.5,533.0 L989.5,514.5 L990.5,514.5 L990.5,495.5 L991.5,495.5 L991.5,477.0 L992.5,477.0 L992.5,457.0 L992.5,477.0 L993.5,477.0 L993.5,495.5 L994.5,495.5 L994.5,514.5 L995.5,514.5 L995.5,533.0 L996.5,533.0 L996.5,543.0 L997.5,543.0 L997.5,552.5 L997.5,543.0 L998.5,543.0 L998.5,533.0 L999.5,533.0 L999.5,514.5 L1000.5,514.5 L1000.5,495.5 L1001.5,495.5 L1001.5,477.0 L1002.5,477.0 L1002.5,457.0 L1002.5,477.0 L1003.5,477.0 L1003.5,495.5 L1004.5,495.5 L1004.5,514.5 L1005.5,514.5 L1005.5,533.0 L1006.5,533.0 L1006.5,543.0 L1007.5,543.0 L1007.5,552.5 L1007.5,543.0 L1008.5,543.0 L1008.5,533.0 L1009.5,533.0 L1009.5,514.5 L1010.5,514.5 L1010.5,495.5 L1011.5,495.5 L1011.5,477.0 L1012.2,477.0 L1012.2,457.0 L1012.2,477.0 L1012.2,477.0 L1012.2,495.5 L1012.2,495.5 L1012.2,514.5 L1012.2,514.5 L1012.2,533.0 L1012.2,533.0 L1012.2,543.0 L1012.2,543.0 L1012.2,552.5 L1012.2,543.0 L1012.2,543.0 L1012.2,533.0 L1012.2,533.0 L1012.2,514.5 L1012.2,514.5 L1012.2,495.5 L1012.2,495.5 L1012.2,477.0" stroke="#7398cc" stroke-width="1.1" fill="none" stroke-linejoin="miter"/>
<path d="M491.7,467 v10 h1.6 v-10zM496.7,533.5 v10 h1.6 v-10zM501.7,467 v10 h1.6 v-10zM506.7,533.5 v10 h1.6 v-10zM511.7,467 v10 h1.6 v-10zM516.7,533.5 v10 h1.6 v-10zM521.7,467 v10 h1.6 v-10zM526.7,533.5 v10 h1.6 v-10zM531.7,467 v10 h1.6 v-10zM536.7,533.5 v10 h1.6 v-10zM541.7,467 v10 h1.6 v-10zM546.7,533.5 v10 h1.6 v-10zM551.7,467 v10 h1.6 v-10zM556.7,533.5 v10 h1.6 v-10zM561.7,467 v10 h1.6 v-10zM566.7,533.5 v10 h1.6 v-10zM571.7,467 v10 h1.6 v-10zM576.7,533.5 v10 h1.6 v-10zM581.7,467 v10 h1.6 v-10zM586.7,533.5 v10 h1.6 v-10zM591.7,467 v10 h1.6 v-10zM596.7,533.5 v10 h1.6 v-10zM601.7,467 v10 h1.6 v-10zM606.7,533.5 v10 h1.6 v-10zM611.7,467 v10 h1.6 v-10zM616.7,533.5 v10 h1.6 v-10zM621.7,467 v10 h1.6 v-10zM626.7,533.5 v10 h1.6 v-10zM631.7,467 v10 h1.6 v-10zM636.7,533.5 v10 h1.6 v-10zM641.7,467 v10 h1.6 v-10zM646.7,533.5 v10 h1.6 v-10zM651.7,467 v10 h1.6 v-10zM656.7,533.5 v10 h1.6 v-10zM661.7,467 v10 h1.6 v-10zM666.7,533.5 v10 h1.6 v-10zM671.7,467 v10 h1.6 v-10zM676.7,533.5 v10 h1.6 v-10zM681.7,467 v10 h1.6 v-10zM686.7,533.5 v10 h1.6 v-10zM691.7,467 v10 h1.6 v-10zM696.7,533.5 v10 h1.6 v-10zM701.7,467 v10 h1.6 v-10zM706.7,533.5 v10 h1.6 v-10zM711.7,467 v10 h1.6 v-10zM716.7,533.5 v10 h1.6 v-10zM721.7,467 v10 h1.6 v-10zM726.7,533.5 v10 h1.6 v-10zM731.7,467 v10 h1.6 v-10zM736.7,533.5 v10 h1.6 v-10zM741.7,467 v10 h1.6 v-10zM746.7,533.5 v10 h1.6 v-10zM751.7,467 v10 h1.6 v-10zM756.7,533.5 v10 h1.6 v-10zM761.7,467 v10 h1.6 v-10zM766.7,533.5 v10 h1.6 v-10zM771.7,467 v10 h1.6 v-10zM776.7,533.5 v10 h1.6 v-10zM781.7,467 v10 h1.6 v-10zM786.7,533.5 v10 h1.6 v-10zM791.7,467 v10 h1.6 v-10zM796.7,533.5 v10 h1.6 v-10zM801.7,467 v10 h1.6 v-10zM806.7,533.5 v10 h1.6 v-10zM811.7,467 v10 h1.6 v-10zM816.7,533.5 v10 h1.6 v-10zM821.7,467 v10 h1.6 v-10zM826.7,533.5 v10 h1.6 v-10zM831.7,467 v10 h1.6 v-10zM836.7,533.5 v10 h1.6 v-10zM841.7,467 v10 h1.6 v-10zM846.7,533.5 v10 h1.6 v-10zM851.7,467 v10 h1.6 v-10zM856.7,533.5 v10 h1.6 v-10zM861.7,467 v10 h1.6 v-10zM866.7,533.5 v10 h1.6 v-10zM871.7,467 v10 h1.6 v-10zM876.7,533.5 v10 h1.6 v-10zM881.7,467 v10 h1.6 v-10zM886.7,533.5 v10 h1.6 v-10zM891.7,467 v10 h1.6 v-10zM896.7,533.5 v10 h1.6 v-10zM901.7,467 v10 h1.6 v-10zM906.7,533.5 v10 h1.6 v-10zM911.7,467 v10 h1.6 v-10zM916.7,533.5 v10 h1.6 v-10zM921.7,467 v10 h1.6 v-10zM926.7,533.5 v10 h1.6 v-10zM931.7,467 v10 h1.6 v-10zM936.7,533.5 v10 h1.6 v-10zM941.7,467 v10 h1.6 v-10zM946.7,533.5 v10 h1.6 v-10zM951.7,467 v10 h1.6 v-10zM956.7,533.5 v10 h1.6 v-10zM961.7,467 v10 h1.6 v-10zM966.7,533.5 v10 h1.6 v-10zM971.7,467 v10 h1.6 v-10zM976.7,533.5 v10 h1.6 v-10zM981.7,467 v10 h1.6 v-10zM986.7,533.5 v10 h1.6 v-10zM991.7,467 v10 h1.6 v-10zM996.7,533.5 v10 h1.6 v-10zM1001.7,467 v10 h1.6 v-10zM1006.7,533.5 v10 h1.6 v-10z" fill="#4f96e0" opacity="0.75"/>
<path d="M13.0,591.5 L15.0,591.5 L17.0,591.5 L19.0,591.5 L21.0,591.5 L23.0,591.5 L25.0,591.5 L27.0,591.5 L29.0,591.5 L31.0,591.5 L33.0,591.5 L35.0,591.5 L37.0,592.1 L39.0,592.1 L41.0,592.1 L43.0,592.1 L45.0,592.1 L47.0,592.1 L49.0,592.1 L51.0,592.1 L53.0,592.1 L55.0,592.1 L57.0,592.1 L59.0,592.1 L61.0,592.1 L63.0,592.1 L65.0,592.1 L67.0,592.1 L69.0,592.1 L71.0,592.1 L73.0,592.1 L75.0,591.5 L77.0,591.5 L79.0,591.5 L81.0,591.5 L83.0,591.5 L85.0,591.5 L87.0,591.5 L89.0,591.5 L91.0,591.5 L93.0,591.5 L95.0,591.5 L97.0,591.5 L99.0,591.5 L101.0,591.5 L103.0,591.5 L105.0,591.5 L107.0,591.5 L109.0,591.5 L111.0,591.5 L113.0,591.5 L115.0,591.5 L117.0,591.5 L119.0,591.5 L121.0,591.5 L123.0,591.5 L125.0,591.5 L127.0,591.5 L129.0,591.5 L131.0,591.5 L133.0,591.5 L135.0,591.5 L137.0,591.5 L139.0,591.5 L141.0,591.5 L143.0,591.5 L145.0,591.5 L147.0,591.5 L149.0,592.1 L151.0,592.1 L153.0,592.1 L155.0,592.1 L157.0,592.1 L159.0,592.1 L161.0,592.1 L163.0,592.1 L165.0,592.1 L167.0,592.1 L169.0,592.1 L171.0,592.1 L173.0,592.1 L175.0,592.1 L177.0,592.1 L179.0,592.1 L181.0,592.1 L183.0,592.1 L185.0,591.5 L187.0,591.5 L189.0,591.5 L191.0,591.5 L193.0,591.5 L195.0,591.5 L197.0,591.5 L199.0,591.5 L201.0,591.5 L203.0,591.5 L205.0,591.5 L207.0,591.5 L209.0,591.5 L211.0,591.5 L213.0,591.5 L215.0,591.5 L217.0,591.5 L219.0,591.5 L221.0,591.5 L223.0,591.5 L225.0,591.5 L227.0,591.5 L229.0,591.5 L231.0,591.5 L233.0,591.5 L235.0,591.5 L237.0,591.5 L239.0,591.5 L241.0,591.5 L243.0,591.5 L245.0,591.5 L247.0,591.5 L249.0,591.5 L251.0,591.5 L253.0,591.5 L255.0,591.5 L257.0,591.5 L259.0,592.1 L261.0,592.1 L263.0,592.1 L265.0,592.1 L267.0,592.1 L269.0,592.1 L271.0,592.1 L273.0,592.1 L275.0,592.1 L277.0,592.1 L279.0,592.1 L281.0,592.1 L283.0,592.1 L285.0,592.1 L287.0,592.1 L289.0,592.1 L291.0,592.1 L293.0,592.1 L295.0,592.1 L297.0,591.5 L299.0,591.5 L301.0,591.5 L303.0,591.5 L305.0,591.5 L307.0,591.5 L309.0,591.5 L311.0,591.5 L313.0,591.5 L315.0,591.5 L317.0,591.5 L319.0,591.5 L321.0,591.5 L323.0,591.5 L325.0,591.5 L327.0,591.5 L329.0,591.5 L331.0,591.5 L333.0,591.5 L335.0,591.5 L337.0,591.5 L339.0,591.5 L341.0,591.5 L343.0,591.5 L345.0,591.5 L347.0,591.5 L349.0,591.5 L351.0,591.5 L353.0,591.5 L355.0,591.5 L357.0,591.5 L359.0,591.5 L361.0,591.5 L363.0,591.5 L365.0,591.5 L367.0,591.5 L369.0,591.5 L371.0,592.1 L373.0,592.1 L375.0,592.1 L377.0,592.1 L379.0,592.1 L381.0,592.1 L383.0,592.1 L385.0,592.1 L387.0,592.1 L389.0,592.1 L391.0,592.1 L393.0,592.1 L395.0,592.1 L397.0,592.1 L399.0,592.1 L401.0,592.1 L403.0,592.1 L405.0,592.1 L407.0,591.5 L409.0,591.5 L411.0,591.5 L413.0,591.5 L415.0,591.5 L417.0,591.5 L419.0,591.5 L421.0,591.5 L423.0,591.5 L425.0,591.5 L427.0,591.5 L429.0,591.5 L431.0,591.5 L433.0,591.5 L435.0,591.5 L437.0,591.5 L439.0,591.5 L441.0,591.5 L443.0,591.5 L445.0,591.5 L447.0,591.5 L449.0,591.5 L451.0,591.5 L453.0,591.5 L455.0,591.5 L457.0,591.5 L459.0,591.5 L461.0,591.5 L463.0,591.5 L465.0,591.5 L467.0,591.5 L469.0,591.5 L471.0,591.5 L473.0,591.5 L475.0,591.5 L477.0,591.5 L479.0,591.5 L481.0,592.1 L483.0,592.1 L485.0,592.1 L487.0,592.1 L489.0,592.1 L491.0,592.1 L493.0,592.1 L495.0,592.1 L497.0,592.1 L499.0,592.1 L501.0,592.1 L503.0,592.1 L505.0,592.1 L507.0,592.1 L509.0,592.1 L511.0,592.1 L513.0,592.1 L515.0,592.1 L517.0,592.1 L519.0,591.5 L521.0,591.5 L523.0,591.5 L525.0,591.5 L527.0,591.5 L529.0,591.5 L531.0,591.5 L533.0,591.5 L535.0,591.5 L537.0,591.5 L539.0,591.5 L541.0,591.5 L543.0,591.5 L545.0,591.5 L547.0,591.5 L549.0,591.5 L551.0,591.5 L553.0,591.5 L555.0,591.5 L557.0,591.5 L559.0,591.5 L561.0,591.5 L563.0,591.5 L565.0,591.5 L567.0,591.5 L569.0,591.5 L571.0,591.5 L573.0,591.5 L575.0,591.5 L577.0,591.5 L579.0,591.5 L581.0,591.5 L583.0,591.5 L585.0,591.5 L587.0,591.5 L589.0,591.5 L591.0,591.5 L593.0,592.1 L595.0,592.1 L597.0,592.1 L599.0,592.1 L601.0,592.1 L603.0,592.1 L605.0,592.1 L607.0,592.1 L609.0,592.1 L611.0,592.1 L613.0,592.1 L615.0,592.1 L617.0,592.1 L619.0,592.1 L621.0,592.1 L623.0,592.1 L625.0,592.1 L627.0,592.1 L629.0,591.5 L631.0,591.5 L633.0,591.5 L635.0,591.5 L637.0,591.5 L639.0,591.5 L641.0,591.5 L643.0,591.5 L645.0,591.5 L647.0,591.5 L649.0,591.5 L651.0,591.5 L653.0,591.5 L655.0,591.5 L657.0,591.5 L659.0,591.5 L661.0,591.5 L663.0,591.5 L665.0,591.5 L667.0,591.5 L669.0,591.5 L671.0,591.5 L673.0,591.5 L675.0,591.5 L677.0,591.5 L679.0,591.5 L681.0,591.5 L683.0,591.5 L685.0,591.5 L687.0,591.5 L689.0,591.5 L691.0,591.5 L693.0,591.5 L695.0,591.5 L697.0,591.5 L699.0,591.5 L701.0,591.5 L703.0,592.1 L705.0,592.1 L707.0,592.1 L709.0,592.1 L711.0,592.1 L713.0,592.1 L715.0,592.1 L717.0,592.1 L719.0,592.1 L721.0,592.1 L723.0,592.1 L725.0,592.1 L727.0,592.1 L729.0,592.1 L731.0,592.1 L733.0,592.1 L735.0,592.1 L737.0,592.1 L739.0,592.1 L741.0,591.5 L743.0,591.5 L745.0,591.5 L747.0,591.5 L749.0,591.5 L751.0,591.5 L753.0,591.5 L755.0,591.5 L757.0,591.5 L759.0,591.5 L761.0,591.5 L763.0,591.5 L765.0,591.5 L767.0,591.5 L769.0,591.5 L771.0,591.5 L773.0,591.5 L775.0,591.5 L777.0,591.5 L779.0,591.5 L781.0,591.5 L783.0,591.5 L785.0,591.5 L787.0,591.5 L789.0,591.5 L791.0,591.5 L793.0,591.5 L795.0,591.5 L797.0,591.5 L799.0,591.5 L801.0,591.5 L803.0,591.5 L805.0,591.5 L807.0,591.5 L809.0,591.5 L811.0,591.5 L813.0,591.5 L815.0,592.1 L817.0,592.1 L819.0,592.1 L821.0,592.1 L823.0,592.1 L825.0,592.1 L827.0,592.1 L829.0,592.1 L831.0,592.1 L833.0,592.1 L835.0,592.1 L837.0,592.1 L839.0,592.1 L841.0,592.1 L843.0,592.1 L845.0,592.1 L847.0,592.1 L849.0,592.1 L851.0,591.5 L853.0,591.5 L855.0,591.5 L857.0,591.5 L859.0,591.5 L861.0,591.5 L863.0,591.5 L865.0,591.5 L867.0,591.5 L869.0,591.5 L871.0,591.5 L873.0,591.5 L875.0,591.5 L877.0,591.5 L879.0,591.5 L881.0,591.5 L883.0,591.5 L885.0,591.5 L887.0,591.5 L889.0,591.5 L891.0,591.5 L893.0,591.5 L895.0,591.5 L897.0,591.5 L899.0,591.5 L901.0,591.5 L903.0,591.5 L905.0,591.5 L907.0,591.5 L909.0,591.5 L911.0,591.5 L913.0,591.5 L915.0,591.5 L917.0,591.5 L919.0,591.5 L921.0,591.5 L923.0,591.5 L925.0,592.1 L927.0,592.1 L929.0,592.1 L931.0,592.1 L933.0,592.1 L935.0,592.1 L937.0,592.1 L939.0,592.1 L941.0,592.1 L943.0,592.1 L945.0,592.1 L947.0,592.1 L949.0,592.1 L951.0,592.1 L953.0,592.1 L955.0,592.1 L957.0,592.1 L959.0,592.1 L961.0,592.1 L963.0,591.5 L965.0,591.5 L967.0,591.5 L969.0,591.5 L971.0,591.5 L973.0,591.5 L975.0,591.5 L977.0,591.5 L979.0,591.5 L981.0,591.5 L983.0,591.5 L985.0,591.5 L987.0,591.5 L989.0,591.5 L991.0,591.5 L993.0,591.5 L995.0,591.5 L997.0,591.5 L999.0,591.5 L1001.0,591.5 L1003.0,591.5 L1005.0,591.5 L1007.0,591.5 L1009.0,591.5 L1011.0,591.5" stroke="#c98a5c" stroke-width="1.2" fill="none"/>
<path d="M13.0,632.5 L16.0,632.5 L19.0,632.7 L22.0,632.4 L25.0,632.3 L28.0,632.3 L31.0,632.0 L34.0,632.0 L37.0,632.0 L40.0,631.9 L43.0,631.3 L46.0,631.3 L49.0,631.0 L52.0,631.2 L55.0,631.0 L58.0,630.4 L61.0,630.8 L64.0,630.6 L67.0,630.2 L70.0,630.0 L73.0,629.6 L76.0,629.3 L79.0,629.5 L82.0,629.1 L85.0,629.1 L88.0,629.0 L91.0,628.8 L94.0,629.0 L97.0,629.0 L100.0,629.2 L103.0,629.0 L106.0,629.1 L109.0,629.0 L112.0,629.0 L115.0,628.8 L118.0,628.7 L121.0,629.0 L124.0,629.0 L127.0,628.8 L130.0,628.6 L133.0,628.3 L136.0,628.1 L139.0,628.0 L142.0,627.8 L145.0,628.1 L148.0,627.8 L151.0,627.9 L154.0,627.5 L157.0,627.8 L160.0,627.6 L163.0,627.0 L166.0,627.0 L169.0,627.3 L172.0,626.9 L175.0,627.2 L178.0,626.7 L181.0,626.5 L184.0,626.7 L187.0,626.8 L190.0,626.4 L193.0,626.3 L196.0,626.4 L199.0,626.8 L202.0,626.7 L205.0,626.3 L208.0,626.3 L211.0,626.2 L214.0,626.1 L217.0,626.5 L220.0,626.1 L223.0,626.2 L226.0,626.1 L229.0,625.8 L232.0,626.1 L235.0,625.6 L238.0,625.8 L241.0,625.4 L244.0,625.4 L247.0,625.2 L250.0,625.1 L253.0,625.4 L256.0,625.2 L259.0,624.8 L262.0,625.0 L265.0,624.5 L268.0,624.5 L271.0,624.7 L274.0,624.5 L277.0,624.1 L280.0,624.5 L283.0,624.0 L286.0,624.0 L289.0,624.2 L292.0,623.9 L295.0,623.9 L298.0,623.7 L301.0,623.7 L304.0,623.8 L307.0,623.0 L310.0,622.6 L313.0,621.7 L316.0,621.3 L319.0,621.3 L322.0,620.9 L325.0,620.4 L328.0,619.6 L331.0,618.0 L334.0,616.6 L337.0,615.9 L340.0,614.9 L343.0,614.0 L346.0,613.8 L349.0,613.5 L352.0,612.7 L355.0,611.8 L358.0,612.4 L361.0,612.8 L364.0,613.2 L367.0,613.6 L370.0,613.7 L373.0,613.8 L376.0,614.7 L379.0,615.2 L382.0,616.5 L385.0,617.1 L388.0,618.1 L391.0,618.1 L394.0,617.8 L397.0,617.7 L400.0,617.8 L403.0,617.3 L406.0,617.1 L409.0,617.1 L412.0,617.1 L415.0,616.8 L418.0,616.4 L421.0,616.7 L424.0,616.2 L427.0,616.1 L430.0,616.1 L433.0,615.9 L436.0,615.4 L439.0,615.0 L442.0,614.7 L445.0,614.4 L448.0,613.7 L451.0,613.4 L454.0,613.5 L457.0,613.3 L460.0,613.1 L463.0,613.1 L466.0,613.1 L469.0,612.8 L472.0,612.7 L475.0,612.7 L478.0,613.2 L481.0,613.1 L484.0,613.3 L487.0,612.7 L490.0,613.1 L493.0,613.0 L496.0,613.1 L499.0,612.9 L502.0,613.3 L505.0,612.9 L508.0,613.4 L511.0,613.7 L514.0,614.1 L517.0,614.4 L520.0,614.6 L523.0,614.9 L526.0,615.2 L529.0,614.9 L532.0,615.0 L535.0,614.8 L538.0,614.1 L541.0,612.9 L544.0,612.2 L547.0,611.4 L550.0,610.5 L553.0,610.2 L556.0,609.9 L559.0,609.1 L562.0,607.4 L565.0,605.2 L568.0,604.3 L571.0,604.3 L574.0,604.2 L577.0,604.0 L580.0,603.7 L583.0,603.8 L586.0,603.6 L589.0,603.5 L592.0,603.8 L595.0,604.1 L598.0,605.6 L601.0,606.4 L604.0,607.9 L607.0,608.7 L610.0,608.8 L613.0,609.1 L616.0,609.1 L619.0,609.3 L622.0,609.6 L625.0,609.4 L628.0,609.4 L631.0,609.7 L634.0,610.0 L637.0,609.8 L640.0,609.8 L643.0,609.9 L646.0,609.0 L649.0,607.8 L652.0,607.4 L655.0,605.9 L658.0,606.3 L661.0,605.9 L664.0,606.9 L667.0,608.1 L670.0,608.5 L673.0,608.7 L676.0,608.7 L679.0,610.1 L682.0,610.9 L685.0,611.7 L688.0,612.9 L691.0,613.6 L694.0,613.8 L697.0,614.0 L700.0,615.0 L703.0,614.5 L706.0,614.8 L709.0,615.5 L712.0,615.2 L715.0,614.6 L718.0,614.2 L721.0,613.6 L724.0,612.4 L727.0,611.2 L730.0,611.3 L733.0,611.2 L736.0,610.2 L739.0,609.6 L742.0,609.6 L745.0,611.0 L748.0,609.7 L751.0,610.8 L754.0,610.7 L757.0,610.3 L760.0,611.1 L763.0,609.8 L766.0,610.0 L769.0,610.4 L772.0,609.7 L775.0,610.9 L778.0,609.9 L781.0,609.6 L784.0,609.4 L787.0,610.2 L790.0,609.8 L793.0,610.0 L796.0,609.9 L799.0,610.1 L802.0,610.3 L805.0,609.8 L808.0,609.0 L811.0,609.5 L814.0,609.0 L817.0,608.9 L820.0,609.8 L823.0,610.4 L826.0,609.8 L829.0,610.2 L832.0,610.7 L835.0,611.6 L838.0,611.6 L841.0,612.1 L844.0,612.6 L847.0,612.3 L850.0,613.1 L853.0,613.5 L856.0,612.3 L859.0,613.7 L862.0,613.4 L865.0,612.6 L868.0,613.3 L871.0,613.8 L874.0,614.4 L877.0,613.7 L880.0,614.1 L883.0,614.8 L886.0,615.2 L889.0,616.0 L892.0,615.8 L895.0,616.2 L898.0,615.2 L901.0,615.2 L904.0,614.2 L907.0,612.7 L910.0,611.7 L913.0,610.3 L916.0,611.2 L919.0,611.5 L922.0,611.7 L925.0,611.3 L928.0,612.0 L931.0,611.6 L934.0,612.9 L937.0,613.2 L940.0,612.6 L943.0,612.3 L946.0,612.9 L949.0,613.1 L952.0,613.6 L955.0,613.3 L958.0,612.7 L961.0,614.2 L964.0,613.3 L967.0,614.7 L970.0,614.0 L973.0,614.5 L976.0,615.5 L979.0,614.7 L982.0,614.8 L985.0,615.5 L988.0,615.9 L991.0,616.1 L994.0,615.9 L997.0,616.4 L1000.0,615.8 L1003.0,616.1 L1006.0,615.7 L1009.0,615.8 L1012.0,616.0" stroke="#3a55cc" stroke-width="1.25" fill="none"/>
<path d="M468.5,368.5 C464.5,384 463.8,402 464,420 C464,430 461,437 457.5,440 M452,414.5 C451.2,427 452.5,437 457.5,440.5 C463,438 471,424 481.5,410.5" stroke="#e42620" stroke-width="6" stroke-linecap="round" stroke-linejoin="round" fill="none"/>
<rect x="615.5" y="17" width="150" height="19.5" stroke="#34c455" stroke-width="1.4" fill="none"/>
<rect x="615.5" y="25.3" width="150" height="1.6" fill="#f4f4f4"/>
<rect x="745" y="17.5" width="1.8" height="8.5" fill="#f4f4f4"/>
<path d="M938.5,404 H945.5 M940.8,401.5 L938.3,404 L940.8,406.5 M943.2,401.5 L945.7,404 L943.2,406.5" stroke="#fff" stroke-width="1.4" fill="none"/>
<path d="M77.6,617.4 L83.9,617.4 L83.9,606.6 Z M93.6,637.4 L99.9,637.4 L99.9,626.6 Z" stroke="#fff" stroke-width="1.5" fill="none" stroke-linejoin="bevel"/>
<path d="M866.5,731 H878 L875.5,734 V739.8 H864.8 V734.5 Z" fill="#ffffff"/><rect x="861" y="740" width="18" height="5" fill="#ffffff"/><rect x="864.5" y="741.4" width="10.5" height="1.6" fill="#3a4a70"/>
<defs><clipPath id="wmtop"><rect x="900" y="600" width="124" height="121"/></clipPath><clipPath id="wmbot"><rect x="900" y="721" width="124" height="47"/></clipPath></defs>
<rect x="971" y="685" width="46" height="38" rx="7" fill="#1d3d70" opacity="0.24"/>
<path d="M952,704 H981 Q987,704 987,710 V724 Q987,730 981,730 H957 L946,739 V710 Q946,704 952,704 Z" fill="#000" stroke="#000" stroke-width="4" clip-path="url(#wmtop)"/>
<path d="M952,704 H981 Q987,704 987,710 V724 Q987,730 981,730 H957 L946,739 V710 Q946,704 952,704 Z" fill="#08132a" clip-path="url(#wmtop)"/>
<path d="M952,704 H981 Q987,704 987,710 V724 Q987,730 981,730 H957 L946,739 V710 Q946,704 952,704 Z" fill="#22487e" opacity="0.32" clip-path="url(#wmbot)"/>
<g fill="#000" opacity="0.55"><circle cx="955" cy="717.5" r="3.2"/><circle cx="965.5" cy="717.5" r="3.2"/><circle cx="976" cy="717.5" r="3.2"/></g>
</svg>
<div class="btn sel" style="left:240.4px"><span>1</span></div><div class="btn" style="left:264.6px"><span>2</span></div><div class="btn" style="left:288.7px"><span>3</span></div><div class="btn" style="left:312.9px"><span>4</span></div><div class="btn" style="left:337.0px"><span>P</span></div><div class="btn" style="left:361.1px"><span>H</span></div>
<div class="t r" style="left:9.8px;top:12.9px;font-size:19px;line-height:24px;color:#ffffff;transform:scaleX(0.712);font-weight:normal">CH1      : 1OO.OmV/div</div>
<div class="t r" style="left:9.8px;top:28.6px;font-size:19px;line-height:24px;color:#ffffff;transform:scaleX(0.712);font-weight:normal">Position : -2.OO div</div>
<div class="t r" style="left:259.5px;top:-1.2px;font-size:19px;line-height:24px;color:#ffffff;transform:scaleX(0.7);font-weight:normal">Display Group</div>
<div class="t r" style="left:830.0px;top:-2.6px;font-size:19px;line-height:24px;color:#ffffff;transform:scaleX(0.7);font-weight:normal">AcqMode : Normal</div>
<div class="t r" style="left:830.0px;top:12.5px;font-size:19px;line-height:24px;color:#ffffff;transform:scaleX(0.7);font-weight:normal">2OkS/s    3s/div</div>
<div class="t" style="left:546.5px;top:15.1px;font-size:13px;line-height:16px;color:#ffffff;transform:scaleX(0.77);font-weight:bold">Zoom1:200.0</div>
<div class="t" style="left:624.8px;top:35.8px;font-size:13px;line-height:16px;color:#ffffff;transform:scaleX(0.77);font-weight:bold">Main:600.0k</div>
<div class="t" style="left:494.0px;top:69.6px;font-size:13px;line-height:16px;color:#ffffff;transform:scaleX(0.75);font-weight:bold">&lt;Main&gt;</div>
<div class="t" style="left:491.0px;top:397.2px;font-size:13px;line-height:16px;color:#ffffff;transform:scaleX(0.77);font-weight:bold">&lt;Zoom1&gt;</div>
<div class="t r" style="left:76.8px;top:560.8px;font-size:19px;line-height:24px;color:#ffffff;transform:scaleX(0.7);font-weight:normal">X1</div>
<div class="t r" style="left:172.3px;top:560.8px;font-size:19px;line-height:24px;color:#ffffff;transform:scaleX(0.7);font-weight:normal">-1.49355s</div>
<div class="t r" style="left:76.8px;top:580.8px;font-size:19px;line-height:24px;color:#ffffff;transform:scaleX(0.7);font-weight:normal">X2</div>
<div class="t r" style="left:172.3px;top:580.8px;font-size:19px;line-height:24px;color:#ffffff;transform:scaleX(0.7);font-weight:normal">-1.4942Os</div>
<div class="t r" style="left:76.8px;top:600.8px;font-size:19px;line-height:24px;color:#ffffff;transform:scaleX(0.7);font-weight:normal"> X</div>
<div class="t r" style="left:172.3px;top:600.8px;font-size:19px;line-height:24px;color:#ffffff;transform:scaleX(0.7);font-weight:normal">-65Ous</div>
<div class="t r" style="left:76.8px;top:620.8px;font-size:19px;line-height:24px;color:#ffffff;transform:scaleX(0.7);font-weight:normal">1/ X</div>
<div class="t r" style="left:172.3px;top:620.8px;font-size:19px;line-height:24px;color:#ffffff;transform:scaleX(0.7);font-weight:normal">-1.538462kHz</div>
<div class="t r" style="left:388.5px;top:560.8px;font-size:19px;line-height:24px;color:#ffffff;transform:scaleX(0.7);font-weight:normal">P-P</div>
<div class="t r" style="left:437.2px;top:560.8px;font-size:19px;line-height:24px;color:#ffffff;transform:scaleX(0.7);font-weight:normal">:CH1</div>
<div class="t r" style="left:525.5px;top:560.8px;font-size:19px;line-height:24px;color:#ffffff;transform:scaleX(0.7);font-weight:normal">141.3mV</div>
<div class="t r" style="left:388.5px;top:580.8px;font-size:19px;line-height:24px;color:#ffffff;transform:scaleX(0.7);font-weight:normal">P-P</div>
<div class="t r" style="left:437.2px;top:580.8px;font-size:19px;line-height:24px;color:#ffffff;transform:scaleX(0.7);font-weight:normal">:CH6</div>
<div class="t r" style="left:525.5px;top:580.8px;font-size:19px;line-height:24px;color:#ffffff;transform:scaleX(0.7);font-weight:normal">O.5V</div>
<div class="t r" style="left:388.5px;top:600.8px;font-size:19px;line-height:24px;color:#ffffff;transform:scaleX(0.7);font-weight:normal">P-P</div>
<div class="t r" style="left:437.2px;top:600.8px;font-size:19px;line-height:24px;color:#ffffff;transform:scaleX(0.7);font-weight:normal">:CH7</div>
<div class="t r" style="left:525.5px;top:600.8px;font-size:19px;line-height:24px;color:#ffffff;transform:scaleX(0.7);font-weight:normal">2.73OV</div>
<div class="t r" style="left:388.5px;top:620.8px;font-size:19px;line-height:24px;color:#ffffff;transform:scaleX(0.7);font-weight:normal">RMS</div>
<div class="t r" style="left:437.2px;top:620.8px;font-size:19px;line-height:24px;color:#ffffff;transform:scaleX(0.7);font-weight:normal">:CH1</div>
<div class="t r" style="left:525.5px;top:620.8px;font-size:19px;line-height:24px;color:#ffffff;transform:scaleX(0.7);font-weight:normal">32.1479mV</div>
<div class="t r" style="left:388.5px;top:640.8px;font-size:19px;line-height:24px;color:#ffffff;transform:scaleX(0.7);font-weight:normal">RMS</div>
<div class="t r" style="left:437.2px;top:640.8px;font-size:19px;line-height:24px;color:#ffffff;transform:scaleX(0.7);font-weight:normal">:CH6</div>
<div class="t r" style="left:525.5px;top:640.8px;font-size:19px;line-height:24px;color:#ffffff;transform:scaleX(0.7);font-weight:normal">175.682mV</div>
<div class="t r" style="left:388.5px;top:660.8px;font-size:19px;line-height:24px;color:#ffffff;transform:scaleX(0.7);font-weight:normal">RMS</div>
<div class="t r" style="left:437.2px;top:660.8px;font-size:19px;line-height:24px;color:#ffffff;transform:scaleX(0.7);font-weight:normal">:CH7</div>
<div class="t r" style="left:525.5px;top:660.8px;font-size:19px;line-height:24px;color:#ffffff;transform:scaleX(0.7);font-weight:normal">2.4589OV</div>
<div class="t r" style="left:388.5px;top:680.8px;font-size:19px;line-height:24px;color:#ffffff;transform:scaleX(0.7);font-weight:normal">Freq</div>
<div class="t r" style="left:437.2px;top:680.8px;font-size:19px;line-height:24px;color:#ffffff;transform:scaleX(0.7);font-weight:normal">:CH1</div>
<div class="t r" style="left:525.5px;top:680.8px;font-size:19px;line-height:24px;color:#ffffff;transform:scaleX(0.7);font-weight:normal">5O.37783Hz</div>
<div class="t r" style="left:388.5px;top:700.8px;font-size:19px;line-height:24px;color:#ffffff;transform:scaleX(0.7);font-weight:normal">Freq</div>
<div class="t r" style="left:437.2px;top:700.8px;font-size:19px;line-height:24px;color:#ffffff;transform:scaleX(0.7);font-weight:normal">:CH6</div>
<div class="t r" style="left:525.5px;top:700.8px;font-size:19px;line-height:24px;color:#ffffff;transform:scaleX(0.7);font-weight:normal">2.5OOOOOkHz</div>
<div class="t r" style="left:700.3px;top:560.8px;font-size:19px;line-height:24px;color:#ffffff;transform:scaleX(0.7);font-weight:normal">Freq</div>
<div class="t r" style="left:748.0px;top:560.8px;font-size:19px;line-height:24px;color:#ffffff;transform:scaleX(0.7);font-weight:normal">:CH7</div>
<div class="t r" style="left:837.7px;top:560.8px;font-size:19px;line-height:24px;color:#ffffff;transform:scaleX(0.7);font-weight:normal">1O.OOOOOkHz</div>
<div class="t" style="left:491.8px;top:568.0px;font-size:13px;line-height:16px;color:#dc9a4c;transform:scaleX(0.74);font-weight:bold">CH6</div>
<div class="t" style="left:241.5px;top:603.0px;font-size:13px;line-height:16px;color:#2a55d8;transform:scaleX(0.74);font-weight:bold">CH1</div>
<div class="t" style="left:742.0px;top:466.6px;font-size:13px;line-height:16px;color:#5a94d8;transform:scaleX(0.74);font-weight:bold">CH7</div>
<div class="t r" style="left:9.8px;top:727.0px;font-size:19px;line-height:24px;color:#ffffff;transform:scaleX(0.7);font-weight:normal">Stopped</div>
<div class="t r" style="left:169.7px;top:727.0px;font-size:19px;line-height:24px;color:#ffffff;transform:scaleX(0.7);font-weight:normal">4</div>
<div class="t r" style="left:169.7px;top:746.6px;font-size:19px;line-height:24px;color:#ffffff;transform:scaleX(0.7);font-weight:normal">2O22/O1/18 O9:17:31.68832771</div>
<div class="t r" style="left:449.0px;top:746.6px;font-size:19px;line-height:24px;color:#ffffff;transform:scaleX(0.7);font-weight:normal">Auto</div>
<div class="t r" style="left:880.5px;top:728.2px;font-size:19px;line-height:24px;color:#ffffff;transform:scaleX(0.7);font-weight:normal">:File</div>
<div class="t r" style="left:859.8px;top:746.6px;font-size:19px;line-height:24px;color:#ffffff;transform:scaleX(0.7);font-weight:normal">2O22/O1/18 O9:26:53</div>
<div id="tdiv">1ms/div</div>
</body></html>
